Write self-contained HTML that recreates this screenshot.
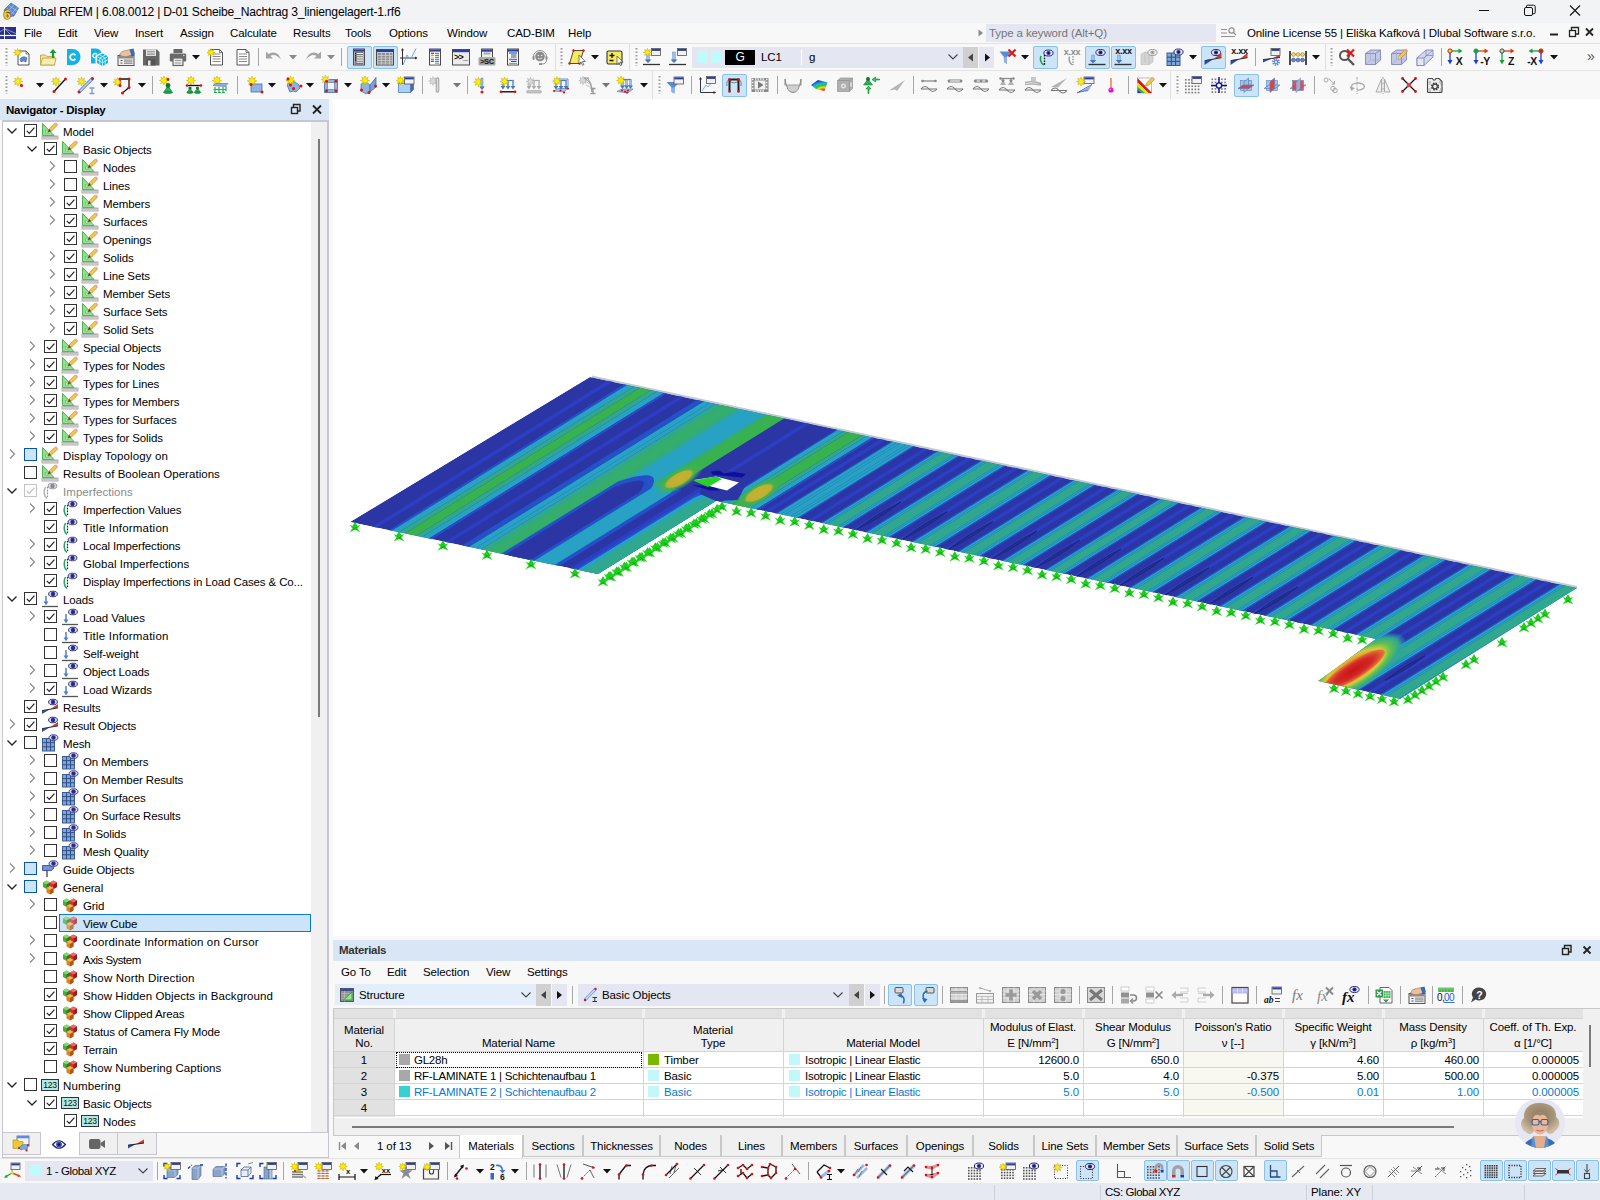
<!DOCTYPE html>
<html><head><meta charset="utf-8"><title>Dlubal RFEM</title><style>
*{box-sizing:content-box}
html,body{margin:0;padding:0}
body{width:1600px;height:1200px;position:relative;overflow:hidden;background:#f8f8f8;font-family:"Liberation Sans",sans-serif;font-size:12px;color:#000}
.a{position:absolute}
.t{position:absolute;white-space:nowrap;line-height:16px;font-size:11.5px;letter-spacing:-.12px}
.sep{position:absolute;width:1px;background:#a0a0a0}
.tog{position:absolute;background:#cce4f7;border:1px solid #88c0ee;border-radius:2px}
.tab{position:absolute;top:1135px;height:21px;border:1px solid #c8c8c8;border-top:none;background:#f0f0f0;text-align:center;line-height:23px;font-size:11.5px;letter-spacing:-.12px}
.hc{position:absolute;text-align:center;white-space:nowrap;font-size:12px;line-height:16px;letter-spacing:-.15px}
.cell{position:absolute;white-space:nowrap;font-size:12px;line-height:16px;height:16px;letter-spacing:-.2px}
sup{font-size:8px;line-height:0;vertical-align:4px}
</style></head><body>
<div class="a" style="left:0px;top:0px;width:1600px;height:23px;background:#f2f3f5;"></div>
<div class="t" style="left:23px;top:4px;font-size:12.1px;letter-spacing:-.2px">Dlubal RFEM | 6.08.0012 | D-01 Scheibe_Nachtrag 3_liniengelagert-1.rf6</div>
<svg class="a" style="left:1470px;top:0" width="130" height="22"><path d="M9 10.500h10" stroke="#111" stroke-width="1"/><rect x="54.5" y="7.500" width="8" height="8" rx="1.5" fill="none" stroke="#111"/><path d="M56.5 7.5v-1.3a1 1 0 0 1 1 -1h6.2a1.5 1.500 0 0 1 1.5 1.5v6a1 1 0 0 1 -1 1h-1.500" fill="none" stroke="#111"/><path d="M100 5.500l10 10M110 5.500l-10 10" stroke="#111" stroke-width="1.1"/></svg>
<div class="a" style="left:0px;top:23px;width:1600px;height:21px;background:#f8f8f8;"></div>
<div class="t" style="left:24px;top:25px;">File</div>
<div class="t" style="left:58px;top:25px;">Edit</div>
<div class="t" style="left:94px;top:25px;">View</div>
<div class="t" style="left:135px;top:25px;">Insert</div>
<div class="t" style="left:180px;top:25px;">Assign</div>
<div class="t" style="left:230px;top:25px;">Calculate</div>
<div class="t" style="left:293px;top:25px;">Results</div>
<div class="t" style="left:345px;top:25px;">Tools</div>
<div class="t" style="left:389px;top:25px;">Options</div>
<div class="t" style="left:447px;top:25px;">Window</div>
<div class="t" style="left:507px;top:25px;">CAD-BIM</div>
<div class="t" style="left:568px;top:25px;">Help</div>
<div class="a" style="left:986px;top:24px;width:230px;height:18px;background:#e4e6f1;"></div>
<svg class="a" style="left:977px;top:28px" width="8" height="10"><path d="M1.500 1.500l4.500 3.500l-4.500 3.500z" fill="#8a8a8a"/></svg>
<div class="t" style="left:989px;top:25px;color:#767676">Type a keyword (Alt+Q)</div>
<div class="t" style="left:1247px;top:25px;">Online License 55 | Eliška Kafková | Dlubal Software s.r.o.</div>
<svg class="a" style="left:1545px;top:24px" width="55" height="18"><path d="M5 10.500h8" stroke="#222" stroke-width="2"/><rect x="24.5" y="6.500" width="6" height="6" fill="none" stroke="#222" stroke-width="1.300"/><path d="M26.500 6v-2.500h7v6.500h-2.500" fill="none" stroke="#222" stroke-width="1.300"/><path d="M41 4.500l7 7M48 4.500l-7 7" stroke="#222" stroke-width="1.800"/></svg>
<div class="a" style="left:0px;top:44px;width:1600px;height:55px;background:#f8f8f8;"></div>
<div class="a" style="left:0px;top:43px;width:1600px;height:1px;background:#e2e2e2;"></div>
<div class="a" style="left:0px;top:70px;width:1600px;height:1px;background:#e4e4e4;"></div>
<div class="a" style="left:692px;top:47px;width:272px;height:21px;background:#e4e6f1;"></div>
<div class="a" style="left:697px;top:51px;width:11px;height:12px;background:#c0fbfb;"></div>
<div class="a" style="left:711px;top:51px;width:11px;height:12px;background:#c0fbfb;"></div>
<div class="a" style="left:801px;top:50px;width:1px;height:15px;background:#fff;"></div>
<div class="a" style="left:725px;top:50px;width:30px;height:15px;background:#000;"></div>
<div class="t" style="left:725px;top:49px;width:30px;text-align:center;color:#fff;font-size:12px">G</div>
<div class="t" style="left:761px;top:49px;">LC1</div>
<div class="t" style="left:809px;top:49px;">g</div>
<svg class="a" style="left:948px;top:54px" width="10" height="6"><path d="M.5 .5 L5 5 L9.5 .5" fill="none" stroke="#444" stroke-width="1.1"/></svg>
<div class="a" style="left:963px;top:47px;width:15px;height:21px;background:#d0d0d0;"></div>
<svg class="a" style="left:963px;top:47px" width="32" height="21"><path d="M10 6.500v8l-5 -4z" fill="#444"/><path d="M22 6.500v8l5 -4z" fill="#111"/></svg>
<div class="a" style="left:979px;top:47px;width:15px;height:21px;background:#e4e6f1;"></div>
<svg class="a" style="left:979px;top:47px" width="16" height="21"><path d="M6 6.500v8l5 -4z" fill="#111"/></svg>
<div class="t" style="left:1587px;top:48px;font-size:14px;color:#555">»</div>
<div class="a" style="left:0px;top:99px;width:329px;height:21px;background:#d9e6f5;"></div>
<div class="t" style="left:6px;top:102px;letter-spacing:-.25px"><b>Navigator - Display</b></div>
<svg class="a" style="left:290px;top:102px" width="36" height="16"><rect x="1.500" y="5.500" width="6" height="6" fill="none" stroke="#222" stroke-width="1.400"/><path d="M3.500 5v-2.500h6.500v6.500h-2.500" fill="none" stroke="#222" stroke-width="1.400"/><path d="M23 3.500l8 8M31 3.500l-8 8" stroke="#222" stroke-width="1.800"/></svg>
<div class="a" style="left:2px;top:121px;width:326px;height:1012px;background:#fff;border:1px solid #c6c6cc;width:325px;height:1010px"></div>
<div class="a" style="left:311px;top:122px;width:16px;height:1010px;background:#f0f0f0;"></div>
<div class="a" style="left:327px;top:120px;width:2px;height:1038px;background:#c6c6d2;"></div>
<div class="a" style="left:2px;top:120px;width:326px;height:2px;background:#c6c6d2;"></div>
<div class="a" style="left:2px;top:120px;width:1px;height:1038px;background:#c6c6d2;"></div>
<div class="a" style="left:318px;top:139px;width:2px;height:578px;background:#7a7a7a;"></div>
<div class="a" style="left:3px;top:122px;width:308px;height:1010px;overflow:hidden"><div class="a" style="left:-3px;top:-122px;width:340px;height:1200px">
<svg style="position:absolute;left:6px;top:125px" width="12" height="12"><path d="M1.5 3.5 L6 8 L10.5 3.5" fill="none" stroke="#222" stroke-width="1.3"/></svg>
<div style="position:absolute;left:24px;top:124px;width:11px;height:11px;border:1px solid #333;background:#fff"></div><svg style="position:absolute;left:24px;top:124px" width="13" height="13"><path d="M2.8 6.8 L5.3 9.3 L10.4 3.6" fill="none" stroke="#222" stroke-width="1.2"/></svg>
<svg style="position:absolute;left:41px;top:122px" width="18" height="18" viewBox="0 0 18 18"><path d="M1.5 13.5 L1.5 1.5 L13 13.5 Z" fill="#8fe08f" stroke="#55b055" stroke-width="1"/><path d="M4.5 11 L4.5 8 L7.5 11Z" fill="#e9f9e9" stroke="#55b055" stroke-width=".6"/><rect x="1" y="14" width="16" height="3" fill="#e6e6e6" stroke="#9a9a9a" stroke-width=".8"/><path d="M3 14v2M5 14v2M7 14v2M9 14v2M11 14v2M13 14v2M15 14v2" stroke="#888" stroke-width=".6"/><path d="M7 10 L8 7 L14 1.2 L16.3 3.4 L10.3 9.2 Z" fill="#f4c64a" stroke="#b48a2a" stroke-width=".6"/><path d="M14 1.2 L15 .3 L17.2 2.4 L16.3 3.4Z" fill="#f0a0b8"/><path d="M7 10 L8 7 L10.3 9.2Z" fill="#444"/></svg>
<div class="t" style="left:63px;top:124px;color:#000">Model</div>
<svg style="position:absolute;left:26px;top:143px" width="12" height="12"><path d="M1.5 3.5 L6 8 L10.5 3.5" fill="none" stroke="#222" stroke-width="1.3"/></svg>
<div style="position:absolute;left:44px;top:142px;width:11px;height:11px;border:1px solid #333;background:#fff"></div><svg style="position:absolute;left:44px;top:142px" width="13" height="13"><path d="M2.8 6.8 L5.3 9.3 L10.4 3.6" fill="none" stroke="#222" stroke-width="1.2"/></svg>
<svg style="position:absolute;left:61px;top:140px" width="18" height="18" viewBox="0 0 18 18"><path d="M1.5 13.5 L1.5 1.5 L13 13.5 Z" fill="#8fe08f" stroke="#55b055" stroke-width="1"/><path d="M4.5 11 L4.5 8 L7.5 11Z" fill="#e9f9e9" stroke="#55b055" stroke-width=".6"/><rect x="1" y="14" width="16" height="3" fill="#e6e6e6" stroke="#9a9a9a" stroke-width=".8"/><path d="M3 14v2M5 14v2M7 14v2M9 14v2M11 14v2M13 14v2M15 14v2" stroke="#888" stroke-width=".6"/><path d="M7 10 L8 7 L14 1.2 L16.3 3.4 L10.3 9.2 Z" fill="#f4c64a" stroke="#b48a2a" stroke-width=".6"/><path d="M14 1.2 L15 .3 L17.2 2.4 L16.3 3.4Z" fill="#f0a0b8"/><path d="M7 10 L8 7 L10.3 9.2Z" fill="#444"/></svg>
<div class="t" style="left:83px;top:142px;color:#000">Basic Objects</div>
<svg style="position:absolute;left:46px;top:160px" width="12" height="12"><path d="M4 1.5 L8.5 6 L4 10.5" fill="none" stroke="#8a8a8a" stroke-width="1.2"/></svg>
<div style="position:absolute;left:64px;top:160px;width:11px;height:11px;border:1px solid #333;background:#fff"></div>
<svg style="position:absolute;left:81px;top:158px" width="18" height="18" viewBox="0 0 18 18"><path d="M1.5 13.5 L1.5 1.5 L13 13.5 Z" fill="#8fe08f" stroke="#55b055" stroke-width="1"/><path d="M4.5 11 L4.5 8 L7.5 11Z" fill="#e9f9e9" stroke="#55b055" stroke-width=".6"/><rect x="1" y="14" width="16" height="3" fill="#e6e6e6" stroke="#9a9a9a" stroke-width=".8"/><path d="M3 14v2M5 14v2M7 14v2M9 14v2M11 14v2M13 14v2M15 14v2" stroke="#888" stroke-width=".6"/><path d="M7 10 L8 7 L14 1.2 L16.3 3.4 L10.3 9.2 Z" fill="#f4c64a" stroke="#b48a2a" stroke-width=".6"/><path d="M14 1.2 L15 .3 L17.2 2.4 L16.3 3.4Z" fill="#f0a0b8"/><path d="M7 10 L8 7 L10.3 9.2Z" fill="#444"/></svg>
<div class="t" style="left:103px;top:160px;color:#000">Nodes</div>
<svg style="position:absolute;left:46px;top:178px" width="12" height="12"><path d="M4 1.5 L8.5 6 L4 10.5" fill="none" stroke="#8a8a8a" stroke-width="1.2"/></svg>
<div style="position:absolute;left:64px;top:178px;width:11px;height:11px;border:1px solid #333;background:#fff"></div>
<svg style="position:absolute;left:81px;top:176px" width="18" height="18" viewBox="0 0 18 18"><path d="M1.5 13.5 L1.5 1.5 L13 13.5 Z" fill="#8fe08f" stroke="#55b055" stroke-width="1"/><path d="M4.5 11 L4.5 8 L7.5 11Z" fill="#e9f9e9" stroke="#55b055" stroke-width=".6"/><rect x="1" y="14" width="16" height="3" fill="#e6e6e6" stroke="#9a9a9a" stroke-width=".8"/><path d="M3 14v2M5 14v2M7 14v2M9 14v2M11 14v2M13 14v2M15 14v2" stroke="#888" stroke-width=".6"/><path d="M7 10 L8 7 L14 1.2 L16.3 3.4 L10.3 9.2 Z" fill="#f4c64a" stroke="#b48a2a" stroke-width=".6"/><path d="M14 1.2 L15 .3 L17.2 2.4 L16.3 3.4Z" fill="#f0a0b8"/><path d="M7 10 L8 7 L10.3 9.2Z" fill="#444"/></svg>
<div class="t" style="left:103px;top:178px;color:#000">Lines</div>
<svg style="position:absolute;left:46px;top:196px" width="12" height="12"><path d="M4 1.5 L8.5 6 L4 10.5" fill="none" stroke="#8a8a8a" stroke-width="1.2"/></svg>
<div style="position:absolute;left:64px;top:196px;width:11px;height:11px;border:1px solid #333;background:#fff"></div><svg style="position:absolute;left:64px;top:196px" width="13" height="13"><path d="M2.8 6.8 L5.3 9.3 L10.4 3.6" fill="none" stroke="#222" stroke-width="1.2"/></svg>
<svg style="position:absolute;left:81px;top:194px" width="18" height="18" viewBox="0 0 18 18"><path d="M1.5 13.5 L1.5 1.5 L13 13.5 Z" fill="#8fe08f" stroke="#55b055" stroke-width="1"/><path d="M4.5 11 L4.5 8 L7.5 11Z" fill="#e9f9e9" stroke="#55b055" stroke-width=".6"/><rect x="1" y="14" width="16" height="3" fill="#e6e6e6" stroke="#9a9a9a" stroke-width=".8"/><path d="M3 14v2M5 14v2M7 14v2M9 14v2M11 14v2M13 14v2M15 14v2" stroke="#888" stroke-width=".6"/><path d="M7 10 L8 7 L14 1.2 L16.3 3.4 L10.3 9.2 Z" fill="#f4c64a" stroke="#b48a2a" stroke-width=".6"/><path d="M14 1.2 L15 .3 L17.2 2.4 L16.3 3.4Z" fill="#f0a0b8"/><path d="M7 10 L8 7 L10.3 9.2Z" fill="#444"/></svg>
<div class="t" style="left:103px;top:196px;color:#000">Members</div>
<svg style="position:absolute;left:46px;top:214px" width="12" height="12"><path d="M4 1.5 L8.5 6 L4 10.5" fill="none" stroke="#8a8a8a" stroke-width="1.2"/></svg>
<div style="position:absolute;left:64px;top:214px;width:11px;height:11px;border:1px solid #333;background:#fff"></div><svg style="position:absolute;left:64px;top:214px" width="13" height="13"><path d="M2.8 6.8 L5.3 9.3 L10.4 3.6" fill="none" stroke="#222" stroke-width="1.2"/></svg>
<svg style="position:absolute;left:81px;top:212px" width="18" height="18" viewBox="0 0 18 18"><path d="M1.5 13.5 L1.5 1.5 L13 13.5 Z" fill="#8fe08f" stroke="#55b055" stroke-width="1"/><path d="M4.5 11 L4.5 8 L7.5 11Z" fill="#e9f9e9" stroke="#55b055" stroke-width=".6"/><rect x="1" y="14" width="16" height="3" fill="#e6e6e6" stroke="#9a9a9a" stroke-width=".8"/><path d="M3 14v2M5 14v2M7 14v2M9 14v2M11 14v2M13 14v2M15 14v2" stroke="#888" stroke-width=".6"/><path d="M7 10 L8 7 L14 1.2 L16.3 3.4 L10.3 9.2 Z" fill="#f4c64a" stroke="#b48a2a" stroke-width=".6"/><path d="M14 1.2 L15 .3 L17.2 2.4 L16.3 3.4Z" fill="#f0a0b8"/><path d="M7 10 L8 7 L10.3 9.2Z" fill="#444"/></svg>
<div class="t" style="left:103px;top:214px;color:#000">Surfaces</div>
<div style="position:absolute;left:64px;top:232px;width:11px;height:11px;border:1px solid #333;background:#fff"></div><svg style="position:absolute;left:64px;top:232px" width="13" height="13"><path d="M2.8 6.8 L5.3 9.3 L10.4 3.6" fill="none" stroke="#222" stroke-width="1.2"/></svg>
<svg style="position:absolute;left:81px;top:230px" width="18" height="18" viewBox="0 0 18 18"><path d="M1.5 13.5 L1.5 1.5 L13 13.5 Z" fill="#8fe08f" stroke="#55b055" stroke-width="1"/><path d="M4.5 11 L4.5 8 L7.5 11Z" fill="#e9f9e9" stroke="#55b055" stroke-width=".6"/><rect x="1" y="14" width="16" height="3" fill="#e6e6e6" stroke="#9a9a9a" stroke-width=".8"/><path d="M3 14v2M5 14v2M7 14v2M9 14v2M11 14v2M13 14v2M15 14v2" stroke="#888" stroke-width=".6"/><path d="M7 10 L8 7 L14 1.2 L16.3 3.4 L10.3 9.2 Z" fill="#f4c64a" stroke="#b48a2a" stroke-width=".6"/><path d="M14 1.2 L15 .3 L17.2 2.4 L16.3 3.4Z" fill="#f0a0b8"/><path d="M7 10 L8 7 L10.3 9.2Z" fill="#444"/></svg>
<div class="t" style="left:103px;top:232px;color:#000">Openings</div>
<svg style="position:absolute;left:46px;top:250px" width="12" height="12"><path d="M4 1.5 L8.5 6 L4 10.5" fill="none" stroke="#8a8a8a" stroke-width="1.2"/></svg>
<div style="position:absolute;left:64px;top:250px;width:11px;height:11px;border:1px solid #333;background:#fff"></div><svg style="position:absolute;left:64px;top:250px" width="13" height="13"><path d="M2.8 6.8 L5.3 9.3 L10.4 3.6" fill="none" stroke="#222" stroke-width="1.2"/></svg>
<svg style="position:absolute;left:81px;top:248px" width="18" height="18" viewBox="0 0 18 18"><path d="M1.5 13.5 L1.5 1.5 L13 13.5 Z" fill="#8fe08f" stroke="#55b055" stroke-width="1"/><path d="M4.5 11 L4.5 8 L7.5 11Z" fill="#e9f9e9" stroke="#55b055" stroke-width=".6"/><rect x="1" y="14" width="16" height="3" fill="#e6e6e6" stroke="#9a9a9a" stroke-width=".8"/><path d="M3 14v2M5 14v2M7 14v2M9 14v2M11 14v2M13 14v2M15 14v2" stroke="#888" stroke-width=".6"/><path d="M7 10 L8 7 L14 1.2 L16.3 3.4 L10.3 9.2 Z" fill="#f4c64a" stroke="#b48a2a" stroke-width=".6"/><path d="M14 1.2 L15 .3 L17.2 2.4 L16.3 3.4Z" fill="#f0a0b8"/><path d="M7 10 L8 7 L10.3 9.2Z" fill="#444"/></svg>
<div class="t" style="left:103px;top:250px;color:#000">Solids</div>
<svg style="position:absolute;left:46px;top:268px" width="12" height="12"><path d="M4 1.5 L8.5 6 L4 10.5" fill="none" stroke="#8a8a8a" stroke-width="1.2"/></svg>
<div style="position:absolute;left:64px;top:268px;width:11px;height:11px;border:1px solid #333;background:#fff"></div><svg style="position:absolute;left:64px;top:268px" width="13" height="13"><path d="M2.8 6.8 L5.3 9.3 L10.4 3.6" fill="none" stroke="#222" stroke-width="1.2"/></svg>
<svg style="position:absolute;left:81px;top:266px" width="18" height="18" viewBox="0 0 18 18"><path d="M1.5 13.5 L1.5 1.5 L13 13.5 Z" fill="#8fe08f" stroke="#55b055" stroke-width="1"/><path d="M4.5 11 L4.5 8 L7.5 11Z" fill="#e9f9e9" stroke="#55b055" stroke-width=".6"/><rect x="1" y="14" width="16" height="3" fill="#e6e6e6" stroke="#9a9a9a" stroke-width=".8"/><path d="M3 14v2M5 14v2M7 14v2M9 14v2M11 14v2M13 14v2M15 14v2" stroke="#888" stroke-width=".6"/><path d="M7 10 L8 7 L14 1.2 L16.3 3.4 L10.3 9.2 Z" fill="#f4c64a" stroke="#b48a2a" stroke-width=".6"/><path d="M14 1.2 L15 .3 L17.2 2.4 L16.3 3.4Z" fill="#f0a0b8"/><path d="M7 10 L8 7 L10.3 9.2Z" fill="#444"/></svg>
<div class="t" style="left:103px;top:268px;color:#000">Line Sets</div>
<svg style="position:absolute;left:46px;top:286px" width="12" height="12"><path d="M4 1.5 L8.5 6 L4 10.5" fill="none" stroke="#8a8a8a" stroke-width="1.2"/></svg>
<div style="position:absolute;left:64px;top:286px;width:11px;height:11px;border:1px solid #333;background:#fff"></div><svg style="position:absolute;left:64px;top:286px" width="13" height="13"><path d="M2.8 6.8 L5.3 9.3 L10.4 3.6" fill="none" stroke="#222" stroke-width="1.2"/></svg>
<svg style="position:absolute;left:81px;top:284px" width="18" height="18" viewBox="0 0 18 18"><path d="M1.5 13.5 L1.5 1.5 L13 13.5 Z" fill="#8fe08f" stroke="#55b055" stroke-width="1"/><path d="M4.5 11 L4.5 8 L7.5 11Z" fill="#e9f9e9" stroke="#55b055" stroke-width=".6"/><rect x="1" y="14" width="16" height="3" fill="#e6e6e6" stroke="#9a9a9a" stroke-width=".8"/><path d="M3 14v2M5 14v2M7 14v2M9 14v2M11 14v2M13 14v2M15 14v2" stroke="#888" stroke-width=".6"/><path d="M7 10 L8 7 L14 1.2 L16.3 3.4 L10.3 9.2 Z" fill="#f4c64a" stroke="#b48a2a" stroke-width=".6"/><path d="M14 1.2 L15 .3 L17.2 2.4 L16.3 3.4Z" fill="#f0a0b8"/><path d="M7 10 L8 7 L10.3 9.2Z" fill="#444"/></svg>
<div class="t" style="left:103px;top:286px;color:#000">Member Sets</div>
<svg style="position:absolute;left:46px;top:304px" width="12" height="12"><path d="M4 1.5 L8.5 6 L4 10.5" fill="none" stroke="#8a8a8a" stroke-width="1.2"/></svg>
<div style="position:absolute;left:64px;top:304px;width:11px;height:11px;border:1px solid #333;background:#fff"></div><svg style="position:absolute;left:64px;top:304px" width="13" height="13"><path d="M2.8 6.8 L5.3 9.3 L10.4 3.6" fill="none" stroke="#222" stroke-width="1.2"/></svg>
<svg style="position:absolute;left:81px;top:302px" width="18" height="18" viewBox="0 0 18 18"><path d="M1.5 13.5 L1.5 1.5 L13 13.5 Z" fill="#8fe08f" stroke="#55b055" stroke-width="1"/><path d="M4.5 11 L4.5 8 L7.5 11Z" fill="#e9f9e9" stroke="#55b055" stroke-width=".6"/><rect x="1" y="14" width="16" height="3" fill="#e6e6e6" stroke="#9a9a9a" stroke-width=".8"/><path d="M3 14v2M5 14v2M7 14v2M9 14v2M11 14v2M13 14v2M15 14v2" stroke="#888" stroke-width=".6"/><path d="M7 10 L8 7 L14 1.2 L16.3 3.4 L10.3 9.2 Z" fill="#f4c64a" stroke="#b48a2a" stroke-width=".6"/><path d="M14 1.2 L15 .3 L17.2 2.4 L16.3 3.4Z" fill="#f0a0b8"/><path d="M7 10 L8 7 L10.3 9.2Z" fill="#444"/></svg>
<div class="t" style="left:103px;top:304px;color:#000">Surface Sets</div>
<svg style="position:absolute;left:46px;top:322px" width="12" height="12"><path d="M4 1.5 L8.5 6 L4 10.5" fill="none" stroke="#8a8a8a" stroke-width="1.2"/></svg>
<div style="position:absolute;left:64px;top:322px;width:11px;height:11px;border:1px solid #333;background:#fff"></div><svg style="position:absolute;left:64px;top:322px" width="13" height="13"><path d="M2.8 6.8 L5.3 9.3 L10.4 3.6" fill="none" stroke="#222" stroke-width="1.2"/></svg>
<svg style="position:absolute;left:81px;top:320px" width="18" height="18" viewBox="0 0 18 18"><path d="M1.5 13.5 L1.5 1.5 L13 13.5 Z" fill="#8fe08f" stroke="#55b055" stroke-width="1"/><path d="M4.5 11 L4.5 8 L7.5 11Z" fill="#e9f9e9" stroke="#55b055" stroke-width=".6"/><rect x="1" y="14" width="16" height="3" fill="#e6e6e6" stroke="#9a9a9a" stroke-width=".8"/><path d="M3 14v2M5 14v2M7 14v2M9 14v2M11 14v2M13 14v2M15 14v2" stroke="#888" stroke-width=".6"/><path d="M7 10 L8 7 L14 1.2 L16.3 3.4 L10.3 9.2 Z" fill="#f4c64a" stroke="#b48a2a" stroke-width=".6"/><path d="M14 1.2 L15 .3 L17.2 2.4 L16.3 3.4Z" fill="#f0a0b8"/><path d="M7 10 L8 7 L10.3 9.2Z" fill="#444"/></svg>
<div class="t" style="left:103px;top:322px;color:#000">Solid Sets</div>
<svg style="position:absolute;left:26px;top:340px" width="12" height="12"><path d="M4 1.5 L8.5 6 L4 10.5" fill="none" stroke="#8a8a8a" stroke-width="1.2"/></svg>
<div style="position:absolute;left:44px;top:340px;width:11px;height:11px;border:1px solid #333;background:#fff"></div><svg style="position:absolute;left:44px;top:340px" width="13" height="13"><path d="M2.8 6.8 L5.3 9.3 L10.4 3.6" fill="none" stroke="#222" stroke-width="1.2"/></svg>
<svg style="position:absolute;left:61px;top:338px" width="18" height="18" viewBox="0 0 18 18"><path d="M1.5 13.5 L1.5 1.5 L13 13.5 Z" fill="#8fe08f" stroke="#55b055" stroke-width="1"/><path d="M4.5 11 L4.5 8 L7.5 11Z" fill="#e9f9e9" stroke="#55b055" stroke-width=".6"/><rect x="1" y="14" width="16" height="3" fill="#e6e6e6" stroke="#9a9a9a" stroke-width=".8"/><path d="M3 14v2M5 14v2M7 14v2M9 14v2M11 14v2M13 14v2M15 14v2" stroke="#888" stroke-width=".6"/><path d="M7 10 L8 7 L14 1.2 L16.3 3.4 L10.3 9.2 Z" fill="#f4c64a" stroke="#b48a2a" stroke-width=".6"/><path d="M14 1.2 L15 .3 L17.2 2.4 L16.3 3.4Z" fill="#f0a0b8"/><path d="M7 10 L8 7 L10.3 9.2Z" fill="#444"/></svg>
<div class="t" style="left:83px;top:340px;color:#000">Special Objects</div>
<svg style="position:absolute;left:26px;top:358px" width="12" height="12"><path d="M4 1.5 L8.5 6 L4 10.5" fill="none" stroke="#8a8a8a" stroke-width="1.2"/></svg>
<div style="position:absolute;left:44px;top:358px;width:11px;height:11px;border:1px solid #333;background:#fff"></div><svg style="position:absolute;left:44px;top:358px" width="13" height="13"><path d="M2.8 6.8 L5.3 9.3 L10.4 3.6" fill="none" stroke="#222" stroke-width="1.2"/></svg>
<svg style="position:absolute;left:61px;top:356px" width="18" height="18" viewBox="0 0 18 18"><path d="M1.5 13.5 L1.5 1.5 L13 13.5 Z" fill="#8fe08f" stroke="#55b055" stroke-width="1"/><path d="M4.5 11 L4.5 8 L7.5 11Z" fill="#e9f9e9" stroke="#55b055" stroke-width=".6"/><rect x="1" y="14" width="16" height="3" fill="#e6e6e6" stroke="#9a9a9a" stroke-width=".8"/><path d="M3 14v2M5 14v2M7 14v2M9 14v2M11 14v2M13 14v2M15 14v2" stroke="#888" stroke-width=".6"/><path d="M7 10 L8 7 L14 1.2 L16.3 3.4 L10.3 9.2 Z" fill="#f4c64a" stroke="#b48a2a" stroke-width=".6"/><path d="M14 1.2 L15 .3 L17.2 2.4 L16.3 3.4Z" fill="#f0a0b8"/><path d="M7 10 L8 7 L10.3 9.2Z" fill="#444"/></svg>
<div class="t" style="left:83px;top:358px;color:#000">Types for Nodes</div>
<svg style="position:absolute;left:26px;top:376px" width="12" height="12"><path d="M4 1.5 L8.5 6 L4 10.5" fill="none" stroke="#8a8a8a" stroke-width="1.2"/></svg>
<div style="position:absolute;left:44px;top:376px;width:11px;height:11px;border:1px solid #333;background:#fff"></div><svg style="position:absolute;left:44px;top:376px" width="13" height="13"><path d="M2.8 6.8 L5.3 9.3 L10.4 3.6" fill="none" stroke="#222" stroke-width="1.2"/></svg>
<svg style="position:absolute;left:61px;top:374px" width="18" height="18" viewBox="0 0 18 18"><path d="M1.5 13.5 L1.5 1.5 L13 13.5 Z" fill="#8fe08f" stroke="#55b055" stroke-width="1"/><path d="M4.5 11 L4.5 8 L7.5 11Z" fill="#e9f9e9" stroke="#55b055" stroke-width=".6"/><rect x="1" y="14" width="16" height="3" fill="#e6e6e6" stroke="#9a9a9a" stroke-width=".8"/><path d="M3 14v2M5 14v2M7 14v2M9 14v2M11 14v2M13 14v2M15 14v2" stroke="#888" stroke-width=".6"/><path d="M7 10 L8 7 L14 1.2 L16.3 3.4 L10.3 9.2 Z" fill="#f4c64a" stroke="#b48a2a" stroke-width=".6"/><path d="M14 1.2 L15 .3 L17.2 2.4 L16.3 3.4Z" fill="#f0a0b8"/><path d="M7 10 L8 7 L10.3 9.2Z" fill="#444"/></svg>
<div class="t" style="left:83px;top:376px;color:#000">Types for Lines</div>
<svg style="position:absolute;left:26px;top:394px" width="12" height="12"><path d="M4 1.5 L8.5 6 L4 10.5" fill="none" stroke="#8a8a8a" stroke-width="1.2"/></svg>
<div style="position:absolute;left:44px;top:394px;width:11px;height:11px;border:1px solid #333;background:#fff"></div><svg style="position:absolute;left:44px;top:394px" width="13" height="13"><path d="M2.8 6.8 L5.3 9.3 L10.4 3.6" fill="none" stroke="#222" stroke-width="1.2"/></svg>
<svg style="position:absolute;left:61px;top:392px" width="18" height="18" viewBox="0 0 18 18"><path d="M1.5 13.5 L1.5 1.5 L13 13.5 Z" fill="#8fe08f" stroke="#55b055" stroke-width="1"/><path d="M4.5 11 L4.5 8 L7.5 11Z" fill="#e9f9e9" stroke="#55b055" stroke-width=".6"/><rect x="1" y="14" width="16" height="3" fill="#e6e6e6" stroke="#9a9a9a" stroke-width=".8"/><path d="M3 14v2M5 14v2M7 14v2M9 14v2M11 14v2M13 14v2M15 14v2" stroke="#888" stroke-width=".6"/><path d="M7 10 L8 7 L14 1.2 L16.3 3.4 L10.3 9.2 Z" fill="#f4c64a" stroke="#b48a2a" stroke-width=".6"/><path d="M14 1.2 L15 .3 L17.2 2.4 L16.3 3.4Z" fill="#f0a0b8"/><path d="M7 10 L8 7 L10.3 9.2Z" fill="#444"/></svg>
<div class="t" style="left:83px;top:394px;color:#000">Types for Members</div>
<svg style="position:absolute;left:26px;top:412px" width="12" height="12"><path d="M4 1.5 L8.5 6 L4 10.5" fill="none" stroke="#8a8a8a" stroke-width="1.2"/></svg>
<div style="position:absolute;left:44px;top:412px;width:11px;height:11px;border:1px solid #333;background:#fff"></div><svg style="position:absolute;left:44px;top:412px" width="13" height="13"><path d="M2.8 6.8 L5.3 9.3 L10.4 3.6" fill="none" stroke="#222" stroke-width="1.2"/></svg>
<svg style="position:absolute;left:61px;top:410px" width="18" height="18" viewBox="0 0 18 18"><path d="M1.5 13.5 L1.5 1.5 L13 13.5 Z" fill="#8fe08f" stroke="#55b055" stroke-width="1"/><path d="M4.5 11 L4.5 8 L7.5 11Z" fill="#e9f9e9" stroke="#55b055" stroke-width=".6"/><rect x="1" y="14" width="16" height="3" fill="#e6e6e6" stroke="#9a9a9a" stroke-width=".8"/><path d="M3 14v2M5 14v2M7 14v2M9 14v2M11 14v2M13 14v2M15 14v2" stroke="#888" stroke-width=".6"/><path d="M7 10 L8 7 L14 1.2 L16.3 3.4 L10.3 9.2 Z" fill="#f4c64a" stroke="#b48a2a" stroke-width=".6"/><path d="M14 1.2 L15 .3 L17.2 2.4 L16.3 3.4Z" fill="#f0a0b8"/><path d="M7 10 L8 7 L10.3 9.2Z" fill="#444"/></svg>
<div class="t" style="left:83px;top:412px;color:#000">Types for Surfaces</div>
<svg style="position:absolute;left:26px;top:430px" width="12" height="12"><path d="M4 1.5 L8.5 6 L4 10.5" fill="none" stroke="#8a8a8a" stroke-width="1.2"/></svg>
<div style="position:absolute;left:44px;top:430px;width:11px;height:11px;border:1px solid #333;background:#fff"></div><svg style="position:absolute;left:44px;top:430px" width="13" height="13"><path d="M2.8 6.8 L5.3 9.3 L10.4 3.6" fill="none" stroke="#222" stroke-width="1.2"/></svg>
<svg style="position:absolute;left:61px;top:428px" width="18" height="18" viewBox="0 0 18 18"><path d="M1.5 13.5 L1.5 1.5 L13 13.5 Z" fill="#8fe08f" stroke="#55b055" stroke-width="1"/><path d="M4.5 11 L4.5 8 L7.5 11Z" fill="#e9f9e9" stroke="#55b055" stroke-width=".6"/><rect x="1" y="14" width="16" height="3" fill="#e6e6e6" stroke="#9a9a9a" stroke-width=".8"/><path d="M3 14v2M5 14v2M7 14v2M9 14v2M11 14v2M13 14v2M15 14v2" stroke="#888" stroke-width=".6"/><path d="M7 10 L8 7 L14 1.2 L16.3 3.4 L10.3 9.2 Z" fill="#f4c64a" stroke="#b48a2a" stroke-width=".6"/><path d="M14 1.2 L15 .3 L17.2 2.4 L16.3 3.4Z" fill="#f0a0b8"/><path d="M7 10 L8 7 L10.3 9.2Z" fill="#444"/></svg>
<div class="t" style="left:83px;top:430px;color:#000">Types for Solids</div>
<svg style="position:absolute;left:6px;top:448px" width="12" height="12"><path d="M4 1.5 L8.5 6 L4 10.5" fill="none" stroke="#8a8a8a" stroke-width="1.2"/></svg>
<div style="position:absolute;left:24px;top:448px;width:11px;height:11px;border:1px solid #0a57a5;background:#cce4f7"></div>
<svg style="position:absolute;left:41px;top:446px" width="18" height="18" viewBox="0 0 18 18"><path d="M1.5 13.5 L1.5 1.5 L13 13.5 Z" fill="#8fe08f" stroke="#55b055" stroke-width="1"/><path d="M4.5 11 L4.5 8 L7.5 11Z" fill="#e9f9e9" stroke="#55b055" stroke-width=".6"/><rect x="1" y="14" width="16" height="3" fill="#e6e6e6" stroke="#9a9a9a" stroke-width=".8"/><path d="M3 14v2M5 14v2M7 14v2M9 14v2M11 14v2M13 14v2M15 14v2" stroke="#888" stroke-width=".6"/><path d="M7 10 L8 7 L14 1.2 L16.3 3.4 L10.3 9.2 Z" fill="#f4c64a" stroke="#b48a2a" stroke-width=".6"/><path d="M14 1.2 L15 .3 L17.2 2.4 L16.3 3.4Z" fill="#f0a0b8"/><path d="M7 10 L8 7 L10.3 9.2Z" fill="#444"/></svg>
<div class="t" style="left:63px;top:448px;color:#000;letter-spacing:0.12px">Display Topology on</div>
<div style="position:absolute;left:24px;top:466px;width:11px;height:11px;border:1px solid #333;background:#fff"></div>
<svg style="position:absolute;left:41px;top:464px" width="18" height="18" viewBox="0 0 18 18"><path d="M1.5 13.5 L1.5 1.5 L13 13.5 Z" fill="#8fe08f" stroke="#55b055" stroke-width="1"/><path d="M4.5 11 L4.5 8 L7.5 11Z" fill="#e9f9e9" stroke="#55b055" stroke-width=".6"/><rect x="1" y="14" width="16" height="3" fill="#e6e6e6" stroke="#9a9a9a" stroke-width=".8"/><path d="M3 14v2M5 14v2M7 14v2M9 14v2M11 14v2M13 14v2M15 14v2" stroke="#888" stroke-width=".6"/><path d="M7 10 L8 7 L14 1.2 L16.3 3.4 L10.3 9.2 Z" fill="#f4c64a" stroke="#b48a2a" stroke-width=".6"/><path d="M14 1.2 L15 .3 L17.2 2.4 L16.3 3.4Z" fill="#f0a0b8"/><path d="M7 10 L8 7 L10.3 9.2Z" fill="#444"/></svg>
<div class="t" style="left:63px;top:466px;color:#000;letter-spacing:0.03px">Results of Boolean Operations</div>
<svg style="position:absolute;left:6px;top:485px" width="12" height="12"><path d="M1.5 3.5 L6 8 L10.5 3.5" fill="none" stroke="#222" stroke-width="1.3"/></svg>
<div style="position:absolute;left:24px;top:484px;width:11px;height:11px;border:1px solid #c4c4c4;background:#fff"></div><svg style="position:absolute;left:24px;top:484px" width="13" height="13"><path d="M2.8 6.8 L5.3 9.3 L10.4 3.6" fill="none" stroke="#c0c0c0" stroke-width="1.2"/></svg>
<svg style="position:absolute;left:41px;top:482px" width="18" height="18" viewBox="0 0 18 18"><path d="M6.5 5 v11" stroke="#8a8a8a" stroke-width="1.2" stroke-dasharray="1.6 1.2"/><path d="M6 16.5 C3 14 2.2 9 4.5 5" fill="none" stroke="#b0b0b0" stroke-width="1.5"/><ellipse cx="11.5" cy="4" rx="4.4" ry="2.8" fill="#d4d7ee" stroke="#9a9a9a" stroke-width="1"/><circle cx="11.5" cy="4" r="2.2" fill="#8a8a8a"/></svg>
<div class="t" style="left:63px;top:484px;color:#8a8a8a;letter-spacing:0.06px">Imperfections</div>
<svg style="position:absolute;left:26px;top:502px" width="12" height="12"><path d="M4 1.5 L8.5 6 L4 10.5" fill="none" stroke="#8a8a8a" stroke-width="1.2"/></svg>
<div style="position:absolute;left:44px;top:502px;width:11px;height:11px;border:1px solid #333;background:#fff"></div><svg style="position:absolute;left:44px;top:502px" width="13" height="13"><path d="M2.8 6.8 L5.3 9.3 L10.4 3.6" fill="none" stroke="#222" stroke-width="1.2"/></svg>
<svg style="position:absolute;left:61px;top:500px" width="18" height="18" viewBox="0 0 18 18"><path d="M6.5 5 v11" stroke="#222" stroke-width="1.2" stroke-dasharray="1.6 1.2"/><path d="M6 16.5 C3 14 2.2 9 4.5 5" fill="none" stroke="#2aa06a" stroke-width="1.5"/><ellipse cx="11.5" cy="4" rx="4.4" ry="2.8" fill="#d4d7ee" stroke="#3b3b7a" stroke-width="1"/><circle cx="11.5" cy="4" r="2.2" fill="#2a2a8a"/></svg>
<div class="t" style="left:83px;top:502px;color:#000">Imperfection Values</div>
<div style="position:absolute;left:44px;top:520px;width:11px;height:11px;border:1px solid #333;background:#fff"></div><svg style="position:absolute;left:44px;top:520px" width="13" height="13"><path d="M2.8 6.8 L5.3 9.3 L10.4 3.6" fill="none" stroke="#222" stroke-width="1.2"/></svg>
<svg style="position:absolute;left:61px;top:518px" width="18" height="18" viewBox="0 0 18 18"><path d="M6.5 5 v11" stroke="#222" stroke-width="1.2" stroke-dasharray="1.6 1.2"/><path d="M6 16.5 C3 14 2.2 9 4.5 5" fill="none" stroke="#2aa06a" stroke-width="1.5"/><ellipse cx="11.5" cy="4" rx="4.4" ry="2.8" fill="#d4d7ee" stroke="#3b3b7a" stroke-width="1"/><circle cx="11.5" cy="4" r="2.2" fill="#2a2a8a"/></svg>
<div class="t" style="left:83px;top:520px;color:#000;letter-spacing:0.21px">Title Information</div>
<svg style="position:absolute;left:26px;top:538px" width="12" height="12"><path d="M4 1.5 L8.5 6 L4 10.5" fill="none" stroke="#8a8a8a" stroke-width="1.2"/></svg>
<div style="position:absolute;left:44px;top:538px;width:11px;height:11px;border:1px solid #333;background:#fff"></div><svg style="position:absolute;left:44px;top:538px" width="13" height="13"><path d="M2.8 6.8 L5.3 9.3 L10.4 3.6" fill="none" stroke="#222" stroke-width="1.2"/></svg>
<svg style="position:absolute;left:61px;top:536px" width="18" height="18" viewBox="0 0 18 18"><path d="M6.5 5 v11" stroke="#222" stroke-width="1.2" stroke-dasharray="1.6 1.2"/><path d="M6 16.5 C3 14 2.2 9 4.5 5" fill="none" stroke="#2aa06a" stroke-width="1.5"/><ellipse cx="11.5" cy="4" rx="4.4" ry="2.8" fill="#d4d7ee" stroke="#3b3b7a" stroke-width="1"/><circle cx="11.5" cy="4" r="2.2" fill="#2a2a8a"/></svg>
<div class="t" style="left:83px;top:538px;color:#000">Local Imperfections</div>
<svg style="position:absolute;left:26px;top:556px" width="12" height="12"><path d="M4 1.5 L8.5 6 L4 10.5" fill="none" stroke="#8a8a8a" stroke-width="1.2"/></svg>
<div style="position:absolute;left:44px;top:556px;width:11px;height:11px;border:1px solid #333;background:#fff"></div><svg style="position:absolute;left:44px;top:556px" width="13" height="13"><path d="M2.8 6.8 L5.3 9.3 L10.4 3.6" fill="none" stroke="#222" stroke-width="1.2"/></svg>
<svg style="position:absolute;left:61px;top:554px" width="18" height="18" viewBox="0 0 18 18"><path d="M6.5 5 v11" stroke="#222" stroke-width="1.2" stroke-dasharray="1.6 1.2"/><path d="M6 16.5 C3 14 2.2 9 4.5 5" fill="none" stroke="#2aa06a" stroke-width="1.5"/><ellipse cx="11.5" cy="4" rx="4.4" ry="2.8" fill="#d4d7ee" stroke="#3b3b7a" stroke-width="1"/><circle cx="11.5" cy="4" r="2.2" fill="#2a2a8a"/></svg>
<div class="t" style="left:83px;top:556px;color:#000;letter-spacing:0.04px">Global Imperfections</div>
<div style="position:absolute;left:44px;top:574px;width:11px;height:11px;border:1px solid #333;background:#fff"></div><svg style="position:absolute;left:44px;top:574px" width="13" height="13"><path d="M2.8 6.8 L5.3 9.3 L10.4 3.6" fill="none" stroke="#222" stroke-width="1.2"/></svg>
<svg style="position:absolute;left:61px;top:572px" width="18" height="18" viewBox="0 0 18 18"><path d="M6.5 5 v11" stroke="#222" stroke-width="1.2" stroke-dasharray="1.6 1.2"/><path d="M6 16.5 C3 14 2.2 9 4.5 5" fill="none" stroke="#2aa06a" stroke-width="1.5"/><ellipse cx="11.5" cy="4" rx="4.4" ry="2.8" fill="#d4d7ee" stroke="#3b3b7a" stroke-width="1"/><circle cx="11.5" cy="4" r="2.2" fill="#2a2a8a"/></svg>
<div class="t" style="left:83px;top:574px;color:#000">Display Imperfections in Load Cases &amp; Co...</div>
<svg style="position:absolute;left:6px;top:593px" width="12" height="12"><path d="M1.5 3.5 L6 8 L10.5 3.5" fill="none" stroke="#222" stroke-width="1.3"/></svg>
<div style="position:absolute;left:24px;top:592px;width:11px;height:11px;border:1px solid #333;background:#fff"></div><svg style="position:absolute;left:24px;top:592px" width="13" height="13"><path d="M2.8 6.8 L5.3 9.3 L10.4 3.6" fill="none" stroke="#222" stroke-width="1.2"/></svg>
<svg style="position:absolute;left:41px;top:590px" width="18" height="18" viewBox="0 0 18 18"><path d="M1 16.5h16" stroke="#555" stroke-width="1.3"/><path d="M5 6v8" stroke="#4f7fc0" stroke-width="1.5"/><path d="M2.5 11.5 L5 15.2 L7.5 11.5Z" fill="#4f7fc0"/><ellipse cx="12" cy="4" rx="4.4" ry="2.8" fill="#d4d7ee" stroke="#3b3b7a" stroke-width="1"/><circle cx="12" cy="4" r="2.2" fill="#2a2a8a"/></svg>
<div class="t" style="left:63px;top:592px;color:#000">Loads</div>
<svg style="position:absolute;left:26px;top:610px" width="12" height="12"><path d="M4 1.5 L8.5 6 L4 10.5" fill="none" stroke="#8a8a8a" stroke-width="1.2"/></svg>
<div style="position:absolute;left:44px;top:610px;width:11px;height:11px;border:1px solid #333;background:#fff"></div><svg style="position:absolute;left:44px;top:610px" width="13" height="13"><path d="M2.8 6.8 L5.3 9.3 L10.4 3.6" fill="none" stroke="#222" stroke-width="1.2"/></svg>
<svg style="position:absolute;left:61px;top:608px" width="18" height="18" viewBox="0 0 18 18"><path d="M1 16.5h16" stroke="#555" stroke-width="1.3"/><path d="M5 6v8" stroke="#4f7fc0" stroke-width="1.5"/><path d="M2.5 11.5 L5 15.2 L7.5 11.5Z" fill="#4f7fc0"/><ellipse cx="12" cy="4" rx="4.4" ry="2.8" fill="#d4d7ee" stroke="#3b3b7a" stroke-width="1"/><circle cx="12" cy="4" r="2.2" fill="#2a2a8a"/></svg>
<div class="t" style="left:83px;top:610px;color:#000">Load Values</div>
<div style="position:absolute;left:44px;top:628px;width:11px;height:11px;border:1px solid #333;background:#fff"></div>
<svg style="position:absolute;left:61px;top:626px" width="18" height="18" viewBox="0 0 18 18"><path d="M1 16.5h16" stroke="#555" stroke-width="1.3"/><path d="M5 6v8" stroke="#4f7fc0" stroke-width="1.5"/><path d="M2.5 11.5 L5 15.2 L7.5 11.5Z" fill="#4f7fc0"/><ellipse cx="12" cy="4" rx="4.4" ry="2.8" fill="#d4d7ee" stroke="#3b3b7a" stroke-width="1"/><circle cx="12" cy="4" r="2.2" fill="#2a2a8a"/></svg>
<div class="t" style="left:83px;top:628px;color:#000;letter-spacing:0.21px">Title Information</div>
<div style="position:absolute;left:44px;top:646px;width:11px;height:11px;border:1px solid #333;background:#fff"></div>
<svg style="position:absolute;left:61px;top:644px" width="18" height="18" viewBox="0 0 18 18"><path d="M1 16.5h16" stroke="#555" stroke-width="1.3"/><path d="M5 6v8" stroke="#4f7fc0" stroke-width="1.5"/><path d="M2.5 11.5 L5 15.2 L7.5 11.5Z" fill="#4f7fc0"/><ellipse cx="12" cy="4" rx="4.4" ry="2.8" fill="#d4d7ee" stroke="#3b3b7a" stroke-width="1"/><circle cx="12" cy="4" r="2.2" fill="#2a2a8a"/></svg>
<div class="t" style="left:83px;top:646px;color:#000">Self-weight</div>
<svg style="position:absolute;left:26px;top:664px" width="12" height="12"><path d="M4 1.5 L8.5 6 L4 10.5" fill="none" stroke="#8a8a8a" stroke-width="1.2"/></svg>
<div style="position:absolute;left:44px;top:664px;width:11px;height:11px;border:1px solid #333;background:#fff"></div>
<svg style="position:absolute;left:61px;top:662px" width="18" height="18" viewBox="0 0 18 18"><path d="M1 16.5h16" stroke="#555" stroke-width="1.3"/><path d="M5 6v8" stroke="#4f7fc0" stroke-width="1.5"/><path d="M2.5 11.5 L5 15.2 L7.5 11.5Z" fill="#4f7fc0"/><ellipse cx="12" cy="4" rx="4.4" ry="2.8" fill="#d4d7ee" stroke="#3b3b7a" stroke-width="1"/><circle cx="12" cy="4" r="2.2" fill="#2a2a8a"/></svg>
<div class="t" style="left:83px;top:664px;color:#000">Object Loads</div>
<svg style="position:absolute;left:26px;top:682px" width="12" height="12"><path d="M4 1.5 L8.5 6 L4 10.5" fill="none" stroke="#8a8a8a" stroke-width="1.2"/></svg>
<div style="position:absolute;left:44px;top:682px;width:11px;height:11px;border:1px solid #333;background:#fff"></div><svg style="position:absolute;left:44px;top:682px" width="13" height="13"><path d="M2.8 6.8 L5.3 9.3 L10.4 3.6" fill="none" stroke="#222" stroke-width="1.2"/></svg>
<svg style="position:absolute;left:61px;top:680px" width="18" height="18" viewBox="0 0 18 18"><path d="M1 16.5h16" stroke="#555" stroke-width="1.3"/><path d="M5 6v8" stroke="#4f7fc0" stroke-width="1.5"/><path d="M2.5 11.5 L5 15.2 L7.5 11.5Z" fill="#4f7fc0"/><ellipse cx="12" cy="4" rx="4.4" ry="2.8" fill="#d4d7ee" stroke="#3b3b7a" stroke-width="1"/><circle cx="12" cy="4" r="2.2" fill="#2a2a8a"/></svg>
<div class="t" style="left:83px;top:682px;color:#000">Load Wizards</div>
<div style="position:absolute;left:24px;top:700px;width:11px;height:11px;border:1px solid #333;background:#fff"></div><svg style="position:absolute;left:24px;top:700px" width="13" height="13"><path d="M2.8 6.8 L5.3 9.3 L10.4 3.6" fill="none" stroke="#222" stroke-width="1.2"/></svg>
<svg style="position:absolute;left:41px;top:698px" width="18" height="18" viewBox="0 0 18 18"><path d="M1 16 L1 12.5 L9 11.200Z" fill="#2a4fb0"/><path d="M9 11.200 L17 9.800 L17 6 Z" fill="#d83a2a"/><path d="M1 12.6 L17 9.9" stroke="#333" stroke-width="1"/><ellipse cx="12" cy="4" rx="4.4" ry="2.8" fill="#d4d7ee" stroke="#3b3b7a" stroke-width="1"/><circle cx="12" cy="4" r="2.2" fill="#2a2a8a"/></svg>
<div class="t" style="left:63px;top:700px;color:#000">Results</div>
<svg style="position:absolute;left:6px;top:718px" width="12" height="12"><path d="M4 1.5 L8.5 6 L4 10.5" fill="none" stroke="#8a8a8a" stroke-width="1.2"/></svg>
<div style="position:absolute;left:24px;top:718px;width:11px;height:11px;border:1px solid #333;background:#fff"></div><svg style="position:absolute;left:24px;top:718px" width="13" height="13"><path d="M2.8 6.8 L5.3 9.3 L10.4 3.6" fill="none" stroke="#222" stroke-width="1.2"/></svg>
<svg style="position:absolute;left:41px;top:716px" width="18" height="18" viewBox="0 0 18 18"><path d="M1 16 L1 12.5 L9 11.200Z" fill="#2a4fb0"/><path d="M9 11.200 L17 9.800 L17 6 Z" fill="#d83a2a"/><path d="M1 12.6 L17 9.9" stroke="#333" stroke-width="1"/><ellipse cx="12" cy="4" rx="4.4" ry="2.8" fill="#d4d7ee" stroke="#3b3b7a" stroke-width="1"/><circle cx="12" cy="4" r="2.2" fill="#2a2a8a"/></svg>
<div class="t" style="left:63px;top:718px;color:#000">Result Objects</div>
<svg style="position:absolute;left:6px;top:737px" width="12" height="12"><path d="M1.5 3.5 L6 8 L10.5 3.5" fill="none" stroke="#222" stroke-width="1.3"/></svg>
<div style="position:absolute;left:24px;top:736px;width:11px;height:11px;border:1px solid #333;background:#fff"></div>
<svg style="position:absolute;left:41px;top:734px" width="18" height="18" viewBox="0 0 18 18"><rect x="1.5" y="4.5" width="12" height="12.5" fill="#7fa6d6" stroke="#3a5f96" stroke-width="1"/><path d="M5.5 4.5v12.5M9.5 4.5v12.5M1.5 8.6h12M1.5 12.8h12" stroke="#2f4f86" stroke-width="1"/><ellipse cx="12.5" cy="3.6" rx="4.4" ry="2.8" fill="#d4d7ee" stroke="#3b3b7a" stroke-width="1"/><circle cx="12.5" cy="3.6" r="2.2" fill="#2a2a8a"/></svg>
<div class="t" style="left:63px;top:736px;color:#000">Mesh</div>
<svg style="position:absolute;left:26px;top:754px" width="12" height="12"><path d="M4 1.5 L8.5 6 L4 10.5" fill="none" stroke="#8a8a8a" stroke-width="1.2"/></svg>
<div style="position:absolute;left:44px;top:754px;width:11px;height:11px;border:1px solid #333;background:#fff"></div>
<svg style="position:absolute;left:61px;top:752px" width="18" height="18" viewBox="0 0 18 18"><rect x="1.5" y="4.5" width="12" height="12.5" fill="#7fa6d6" stroke="#3a5f96" stroke-width="1"/><path d="M5.5 4.5v12.5M9.5 4.5v12.5M1.5 8.6h12M1.5 12.8h12" stroke="#2f4f86" stroke-width="1"/><ellipse cx="12.5" cy="3.6" rx="4.4" ry="2.8" fill="#d4d7ee" stroke="#3b3b7a" stroke-width="1"/><circle cx="12.5" cy="3.6" r="2.2" fill="#2a2a8a"/></svg>
<div class="t" style="left:83px;top:754px;color:#000">On Members</div>
<svg style="position:absolute;left:26px;top:772px" width="12" height="12"><path d="M4 1.5 L8.5 6 L4 10.5" fill="none" stroke="#8a8a8a" stroke-width="1.2"/></svg>
<div style="position:absolute;left:44px;top:772px;width:11px;height:11px;border:1px solid #333;background:#fff"></div>
<svg style="position:absolute;left:61px;top:770px" width="18" height="18" viewBox="0 0 18 18"><rect x="1.5" y="4.5" width="12" height="12.5" fill="#7fa6d6" stroke="#3a5f96" stroke-width="1"/><path d="M5.5 4.5v12.5M9.5 4.5v12.5M1.5 8.6h12M1.5 12.8h12" stroke="#2f4f86" stroke-width="1"/><ellipse cx="12.5" cy="3.6" rx="4.4" ry="2.8" fill="#d4d7ee" stroke="#3b3b7a" stroke-width="1"/><circle cx="12.5" cy="3.6" r="2.2" fill="#2a2a8a"/></svg>
<div class="t" style="left:83px;top:772px;color:#000">On Member Results</div>
<svg style="position:absolute;left:26px;top:790px" width="12" height="12"><path d="M4 1.5 L8.5 6 L4 10.5" fill="none" stroke="#8a8a8a" stroke-width="1.2"/></svg>
<div style="position:absolute;left:44px;top:790px;width:11px;height:11px;border:1px solid #333;background:#fff"></div><svg style="position:absolute;left:44px;top:790px" width="13" height="13"><path d="M2.8 6.8 L5.3 9.3 L10.4 3.6" fill="none" stroke="#222" stroke-width="1.2"/></svg>
<svg style="position:absolute;left:61px;top:788px" width="18" height="18" viewBox="0 0 18 18"><rect x="1.5" y="4.5" width="12" height="12.5" fill="#7fa6d6" stroke="#3a5f96" stroke-width="1"/><path d="M5.5 4.5v12.5M9.5 4.5v12.5M1.5 8.6h12M1.5 12.8h12" stroke="#2f4f86" stroke-width="1"/><ellipse cx="12.5" cy="3.6" rx="4.4" ry="2.8" fill="#d4d7ee" stroke="#3b3b7a" stroke-width="1"/><circle cx="12.5" cy="3.6" r="2.2" fill="#2a2a8a"/></svg>
<div class="t" style="left:83px;top:790px;color:#000">On Surfaces</div>
<svg style="position:absolute;left:26px;top:808px" width="12" height="12"><path d="M4 1.5 L8.5 6 L4 10.5" fill="none" stroke="#8a8a8a" stroke-width="1.2"/></svg>
<div style="position:absolute;left:44px;top:808px;width:11px;height:11px;border:1px solid #333;background:#fff"></div>
<svg style="position:absolute;left:61px;top:806px" width="18" height="18" viewBox="0 0 18 18"><rect x="1.5" y="4.5" width="12" height="12.5" fill="#7fa6d6" stroke="#3a5f96" stroke-width="1"/><path d="M5.5 4.5v12.5M9.5 4.5v12.5M1.5 8.6h12M1.5 12.8h12" stroke="#2f4f86" stroke-width="1"/><ellipse cx="12.5" cy="3.6" rx="4.4" ry="2.8" fill="#d4d7ee" stroke="#3b3b7a" stroke-width="1"/><circle cx="12.5" cy="3.6" r="2.2" fill="#2a2a8a"/></svg>
<div class="t" style="left:83px;top:808px;color:#000">On Surface Results</div>
<svg style="position:absolute;left:26px;top:826px" width="12" height="12"><path d="M4 1.5 L8.5 6 L4 10.5" fill="none" stroke="#8a8a8a" stroke-width="1.2"/></svg>
<div style="position:absolute;left:44px;top:826px;width:11px;height:11px;border:1px solid #333;background:#fff"></div>
<svg style="position:absolute;left:61px;top:824px" width="18" height="18" viewBox="0 0 18 18"><rect x="1.5" y="4.5" width="12" height="12.5" fill="#7fa6d6" stroke="#3a5f96" stroke-width="1"/><path d="M5.5 4.5v12.5M9.5 4.5v12.5M1.5 8.6h12M1.5 12.8h12" stroke="#2f4f86" stroke-width="1"/><ellipse cx="12.5" cy="3.6" rx="4.4" ry="2.8" fill="#d4d7ee" stroke="#3b3b7a" stroke-width="1"/><circle cx="12.5" cy="3.6" r="2.2" fill="#2a2a8a"/></svg>
<div class="t" style="left:83px;top:826px;color:#000">In Solids</div>
<svg style="position:absolute;left:26px;top:844px" width="12" height="12"><path d="M4 1.5 L8.5 6 L4 10.5" fill="none" stroke="#8a8a8a" stroke-width="1.2"/></svg>
<div style="position:absolute;left:44px;top:844px;width:11px;height:11px;border:1px solid #333;background:#fff"></div>
<svg style="position:absolute;left:61px;top:842px" width="18" height="18" viewBox="0 0 18 18"><rect x="1.5" y="4.5" width="12" height="12.5" fill="#7fa6d6" stroke="#3a5f96" stroke-width="1"/><path d="M5.5 4.5v12.5M9.5 4.5v12.5M1.5 8.6h12M1.5 12.8h12" stroke="#2f4f86" stroke-width="1"/><ellipse cx="12.5" cy="3.6" rx="4.4" ry="2.8" fill="#d4d7ee" stroke="#3b3b7a" stroke-width="1"/><circle cx="12.5" cy="3.6" r="2.2" fill="#2a2a8a"/></svg>
<div class="t" style="left:83px;top:844px;color:#000">Mesh Quality</div>
<svg style="position:absolute;left:6px;top:862px" width="12" height="12"><path d="M4 1.5 L8.5 6 L4 10.5" fill="none" stroke="#8a8a8a" stroke-width="1.2"/></svg>
<div style="position:absolute;left:24px;top:862px;width:11px;height:11px;border:1px solid #0a57a5;background:#cce4f7"></div>
<svg style="position:absolute;left:41px;top:860px" width="18" height="18" viewBox="0 0 18 18"><path d="M6 5v12" stroke="#666" stroke-width="1.6"/><path d="M1.5 5.5h9l2.5 2.5l-2.5 2.5h-9z" fill="#6f8fe0" stroke="#3a4fa0" stroke-width=".9"/><ellipse cx="12.5" cy="3.6" rx="4.4" ry="2.8" fill="#d4d7ee" stroke="#3b3b7a" stroke-width="1"/><circle cx="12.5" cy="3.6" r="2.2" fill="#2a2a8a"/></svg>
<div class="t" style="left:63px;top:862px;color:#000">Guide Objects</div>
<svg style="position:absolute;left:6px;top:881px" width="12" height="12"><path d="M1.5 3.5 L6 8 L10.5 3.5" fill="none" stroke="#222" stroke-width="1.3"/></svg>
<div style="position:absolute;left:24px;top:880px;width:11px;height:11px;border:1px solid #0a57a5;background:#cce4f7"></div>
<svg style="position:absolute;left:41px;top:878px" width="18" height="18" viewBox="0 0 18 18"><g><path d="M2 4.5 L5.5 2.5 L9 4.5 L9 9 L5.5 11 L2 9Z" fill="#4caa3a"/><path d="M2 4.5 L5.5 6.5 L9 4.5 L5.5 2.5Z" fill="#86d86a"/><path d="M5.5 6.5 V11 L9 9 V4.5Z" fill="#2f7a24"/><path d="M9 4.5 L12.5 2.5 L16 4.5 L16 9 L12.5 11 L9 9Z" fill="#d03030"/><path d="M9 4.5 L12.5 6.5 L16 4.5 L12.5 2.5Z" fill="#f06a6a"/><path d="M12.5 6.5 V11 L16 9 V4.5Z" fill="#9a1c1c"/><path d="M5.5 10 L9 8 L12.5 10 L12.5 14.5 L9 16.5 L5.5 14.5Z" fill="#e08020"/><path d="M5.5 10 L9 12 L12.5 10 L9 8Z" fill="#f6b050"/><path d="M9 12 V16.5 L12.5 14.5 V10Z" fill="#a85a10"/></g></svg>
<div class="t" style="left:63px;top:880px;color:#000">General</div>
<svg style="position:absolute;left:26px;top:898px" width="12" height="12"><path d="M4 1.5 L8.5 6 L4 10.5" fill="none" stroke="#8a8a8a" stroke-width="1.2"/></svg>
<div style="position:absolute;left:44px;top:898px;width:11px;height:11px;border:1px solid #333;background:#fff"></div>
<svg style="position:absolute;left:61px;top:896px" width="18" height="18" viewBox="0 0 18 18"><g><path d="M2 4.5 L5.5 2.5 L9 4.5 L9 9 L5.5 11 L2 9Z" fill="#4caa3a"/><path d="M2 4.5 L5.5 6.5 L9 4.5 L5.5 2.5Z" fill="#86d86a"/><path d="M5.5 6.5 V11 L9 9 V4.5Z" fill="#2f7a24"/><path d="M9 4.5 L12.5 2.5 L16 4.5 L16 9 L12.5 11 L9 9Z" fill="#d03030"/><path d="M9 4.5 L12.5 6.5 L16 4.5 L12.5 2.5Z" fill="#f06a6a"/><path d="M12.5 6.5 V11 L16 9 V4.5Z" fill="#9a1c1c"/><path d="M5.5 10 L9 8 L12.5 10 L12.5 14.5 L9 16.5 L5.5 14.5Z" fill="#e08020"/><path d="M5.5 10 L9 12 L12.5 10 L9 8Z" fill="#f6b050"/><path d="M9 12 V16.5 L12.5 14.5 V10Z" fill="#a85a10"/></g></svg>
<div class="t" style="left:83px;top:898px;color:#000">Grid</div>
<div style="position:absolute;left:59px;top:914px;width:250px;height:16px;border:1px solid #0a78d7;background:#cce4f7"></div>
<div style="position:absolute;left:44px;top:916px;width:11px;height:11px;border:1px solid #333;background:#fff"></div>
<svg style="position:absolute;left:61px;top:914px" width="18" height="18" viewBox="0 0 18 18"><g opacity=".72"><path d="M2 4.5 L5.5 2.5 L9 4.5 L9 9 L5.5 11 L2 9Z" fill="#4caa3a"/><path d="M2 4.5 L5.5 6.5 L9 4.5 L5.5 2.5Z" fill="#86d86a"/><path d="M5.5 6.5 V11 L9 9 V4.5Z" fill="#2f7a24"/><path d="M9 4.5 L12.5 2.5 L16 4.5 L16 9 L12.5 11 L9 9Z" fill="#d03030"/><path d="M9 4.5 L12.5 6.5 L16 4.5 L12.5 2.5Z" fill="#f06a6a"/><path d="M12.5 6.5 V11 L16 9 V4.5Z" fill="#9a1c1c"/><path d="M5.5 10 L9 8 L12.5 10 L12.5 14.5 L9 16.5 L5.5 14.5Z" fill="#e08020"/><path d="M5.5 10 L9 12 L12.5 10 L9 8Z" fill="#f6b050"/><path d="M9 12 V16.5 L12.5 14.5 V10Z" fill="#a85a10"/></g></svg>
<div class="t" style="left:83px;top:916px;color:#000">View Cube</div>
<svg style="position:absolute;left:26px;top:934px" width="12" height="12"><path d="M4 1.5 L8.5 6 L4 10.5" fill="none" stroke="#8a8a8a" stroke-width="1.2"/></svg>
<div style="position:absolute;left:44px;top:934px;width:11px;height:11px;border:1px solid #333;background:#fff"></div>
<svg style="position:absolute;left:61px;top:932px" width="18" height="18" viewBox="0 0 18 18"><g><path d="M2 4.5 L5.5 2.5 L9 4.5 L9 9 L5.5 11 L2 9Z" fill="#4caa3a"/><path d="M2 4.5 L5.5 6.5 L9 4.5 L5.5 2.5Z" fill="#86d86a"/><path d="M5.5 6.5 V11 L9 9 V4.5Z" fill="#2f7a24"/><path d="M9 4.5 L12.5 2.5 L16 4.5 L16 9 L12.5 11 L9 9Z" fill="#d03030"/><path d="M9 4.5 L12.5 6.5 L16 4.5 L12.5 2.5Z" fill="#f06a6a"/><path d="M12.5 6.5 V11 L16 9 V4.5Z" fill="#9a1c1c"/><path d="M5.5 10 L9 8 L12.5 10 L12.5 14.5 L9 16.5 L5.5 14.5Z" fill="#e08020"/><path d="M5.5 10 L9 12 L12.5 10 L9 8Z" fill="#f6b050"/><path d="M9 12 V16.5 L12.5 14.5 V10Z" fill="#a85a10"/></g></svg>
<div class="t" style="left:83px;top:934px;color:#000;letter-spacing:0.16px">Coordinate Information on Cursor</div>
<svg style="position:absolute;left:26px;top:952px" width="12" height="12"><path d="M4 1.5 L8.5 6 L4 10.5" fill="none" stroke="#8a8a8a" stroke-width="1.2"/></svg>
<div style="position:absolute;left:44px;top:952px;width:11px;height:11px;border:1px solid #333;background:#fff"></div>
<svg style="position:absolute;left:61px;top:950px" width="18" height="18" viewBox="0 0 18 18"><g><path d="M2 4.5 L5.5 2.5 L9 4.5 L9 9 L5.5 11 L2 9Z" fill="#4caa3a"/><path d="M2 4.5 L5.5 6.5 L9 4.5 L5.5 2.5Z" fill="#86d86a"/><path d="M5.5 6.5 V11 L9 9 V4.5Z" fill="#2f7a24"/><path d="M9 4.5 L12.5 2.5 L16 4.5 L16 9 L12.5 11 L9 9Z" fill="#d03030"/><path d="M9 4.5 L12.5 6.5 L16 4.5 L12.5 2.5Z" fill="#f06a6a"/><path d="M12.5 6.5 V11 L16 9 V4.5Z" fill="#9a1c1c"/><path d="M5.5 10 L9 8 L12.5 10 L12.5 14.5 L9 16.5 L5.5 14.5Z" fill="#e08020"/><path d="M5.5 10 L9 12 L12.5 10 L9 8Z" fill="#f6b050"/><path d="M9 12 V16.5 L12.5 14.5 V10Z" fill="#a85a10"/></g></svg>
<div class="t" style="left:83px;top:952px;color:#000;letter-spacing:-0.5px">Axis System</div>
<div style="position:absolute;left:44px;top:970px;width:11px;height:11px;border:1px solid #333;background:#fff"></div>
<svg style="position:absolute;left:61px;top:968px" width="18" height="18" viewBox="0 0 18 18"><g><path d="M2 4.5 L5.5 2.5 L9 4.5 L9 9 L5.5 11 L2 9Z" fill="#4caa3a"/><path d="M2 4.5 L5.5 6.5 L9 4.5 L5.5 2.5Z" fill="#86d86a"/><path d="M5.5 6.5 V11 L9 9 V4.5Z" fill="#2f7a24"/><path d="M9 4.5 L12.5 2.5 L16 4.5 L16 9 L12.5 11 L9 9Z" fill="#d03030"/><path d="M9 4.5 L12.5 6.5 L16 4.5 L12.5 2.5Z" fill="#f06a6a"/><path d="M12.5 6.5 V11 L16 9 V4.5Z" fill="#9a1c1c"/><path d="M5.5 10 L9 8 L12.5 10 L12.5 14.5 L9 16.5 L5.5 14.5Z" fill="#e08020"/><path d="M5.5 10 L9 12 L12.5 10 L9 8Z" fill="#f6b050"/><path d="M9 12 V16.5 L12.5 14.5 V10Z" fill="#a85a10"/></g></svg>
<div class="t" style="left:83px;top:970px;color:#000;letter-spacing:0.15px">Show North Direction</div>
<div style="position:absolute;left:44px;top:988px;width:11px;height:11px;border:1px solid #333;background:#fff"></div><svg style="position:absolute;left:44px;top:988px" width="13" height="13"><path d="M2.8 6.8 L5.3 9.3 L10.4 3.6" fill="none" stroke="#222" stroke-width="1.2"/></svg>
<svg style="position:absolute;left:61px;top:986px" width="18" height="18" viewBox="0 0 18 18"><g><path d="M2 4.5 L5.5 2.5 L9 4.5 L9 9 L5.5 11 L2 9Z" fill="#4caa3a"/><path d="M2 4.5 L5.5 6.5 L9 4.5 L5.5 2.5Z" fill="#86d86a"/><path d="M5.5 6.5 V11 L9 9 V4.5Z" fill="#2f7a24"/><path d="M9 4.5 L12.5 2.5 L16 4.5 L16 9 L12.5 11 L9 9Z" fill="#d03030"/><path d="M9 4.5 L12.5 6.5 L16 4.5 L12.5 2.5Z" fill="#f06a6a"/><path d="M12.5 6.5 V11 L16 9 V4.5Z" fill="#9a1c1c"/><path d="M5.5 10 L9 8 L12.5 10 L12.5 14.5 L9 16.5 L5.5 14.5Z" fill="#e08020"/><path d="M5.5 10 L9 12 L12.5 10 L9 8Z" fill="#f6b050"/><path d="M9 12 V16.5 L12.5 14.5 V10Z" fill="#a85a10"/></g></svg>
<div class="t" style="left:83px;top:988px;color:#000;letter-spacing:0.08px">Show Hidden Objects in Background</div>
<div style="position:absolute;left:44px;top:1006px;width:11px;height:11px;border:1px solid #333;background:#fff"></div><svg style="position:absolute;left:44px;top:1006px" width="13" height="13"><path d="M2.8 6.8 L5.3 9.3 L10.4 3.6" fill="none" stroke="#222" stroke-width="1.2"/></svg>
<svg style="position:absolute;left:61px;top:1004px" width="18" height="18" viewBox="0 0 18 18"><g><path d="M2 4.5 L5.5 2.5 L9 4.5 L9 9 L5.5 11 L2 9Z" fill="#4caa3a"/><path d="M2 4.5 L5.5 6.5 L9 4.5 L5.5 2.5Z" fill="#86d86a"/><path d="M5.5 6.5 V11 L9 9 V4.5Z" fill="#2f7a24"/><path d="M9 4.5 L12.5 2.5 L16 4.5 L16 9 L12.5 11 L9 9Z" fill="#d03030"/><path d="M9 4.5 L12.5 6.5 L16 4.5 L12.5 2.5Z" fill="#f06a6a"/><path d="M12.5 6.5 V11 L16 9 V4.5Z" fill="#9a1c1c"/><path d="M5.5 10 L9 8 L12.5 10 L12.5 14.5 L9 16.5 L5.5 14.5Z" fill="#e08020"/><path d="M5.5 10 L9 12 L12.5 10 L9 8Z" fill="#f6b050"/><path d="M9 12 V16.5 L12.5 14.5 V10Z" fill="#a85a10"/></g></svg>
<div class="t" style="left:83px;top:1006px;color:#000">Show Clipped Areas</div>
<div style="position:absolute;left:44px;top:1024px;width:11px;height:11px;border:1px solid #333;background:#fff"></div><svg style="position:absolute;left:44px;top:1024px" width="13" height="13"><path d="M2.8 6.8 L5.3 9.3 L10.4 3.6" fill="none" stroke="#222" stroke-width="1.2"/></svg>
<svg style="position:absolute;left:61px;top:1022px" width="18" height="18" viewBox="0 0 18 18"><g><path d="M2 4.5 L5.5 2.5 L9 4.5 L9 9 L5.5 11 L2 9Z" fill="#4caa3a"/><path d="M2 4.5 L5.5 6.5 L9 4.5 L5.5 2.5Z" fill="#86d86a"/><path d="M5.5 6.5 V11 L9 9 V4.5Z" fill="#2f7a24"/><path d="M9 4.5 L12.5 2.5 L16 4.5 L16 9 L12.5 11 L9 9Z" fill="#d03030"/><path d="M9 4.5 L12.5 6.5 L16 4.5 L12.5 2.5Z" fill="#f06a6a"/><path d="M12.5 6.5 V11 L16 9 V4.5Z" fill="#9a1c1c"/><path d="M5.5 10 L9 8 L12.5 10 L12.5 14.5 L9 16.5 L5.5 14.5Z" fill="#e08020"/><path d="M5.5 10 L9 12 L12.5 10 L9 8Z" fill="#f6b050"/><path d="M9 12 V16.5 L12.5 14.5 V10Z" fill="#a85a10"/></g></svg>
<div class="t" style="left:83px;top:1024px;color:#000">Status of Camera Fly Mode</div>
<div style="position:absolute;left:44px;top:1042px;width:11px;height:11px;border:1px solid #333;background:#fff"></div><svg style="position:absolute;left:44px;top:1042px" width="13" height="13"><path d="M2.8 6.8 L5.3 9.3 L10.4 3.6" fill="none" stroke="#222" stroke-width="1.2"/></svg>
<svg style="position:absolute;left:61px;top:1040px" width="18" height="18" viewBox="0 0 18 18"><g><path d="M2 4.5 L5.5 2.5 L9 4.5 L9 9 L5.5 11 L2 9Z" fill="#4caa3a"/><path d="M2 4.5 L5.5 6.5 L9 4.5 L5.5 2.5Z" fill="#86d86a"/><path d="M5.5 6.5 V11 L9 9 V4.5Z" fill="#2f7a24"/><path d="M9 4.5 L12.5 2.5 L16 4.5 L16 9 L12.5 11 L9 9Z" fill="#d03030"/><path d="M9 4.5 L12.5 6.5 L16 4.5 L12.5 2.5Z" fill="#f06a6a"/><path d="M12.5 6.5 V11 L16 9 V4.5Z" fill="#9a1c1c"/><path d="M5.5 10 L9 8 L12.5 10 L12.5 14.5 L9 16.5 L5.5 14.5Z" fill="#e08020"/><path d="M5.5 10 L9 12 L12.5 10 L9 8Z" fill="#f6b050"/><path d="M9 12 V16.5 L12.5 14.5 V10Z" fill="#a85a10"/></g></svg>
<div class="t" style="left:83px;top:1042px;color:#000">Terrain</div>
<div style="position:absolute;left:44px;top:1060px;width:11px;height:11px;border:1px solid #333;background:#fff"></div>
<svg style="position:absolute;left:61px;top:1058px" width="18" height="18" viewBox="0 0 18 18"><g><path d="M2 4.5 L5.5 2.5 L9 4.5 L9 9 L5.5 11 L2 9Z" fill="#4caa3a"/><path d="M2 4.5 L5.5 6.5 L9 4.5 L5.5 2.5Z" fill="#86d86a"/><path d="M5.5 6.5 V11 L9 9 V4.5Z" fill="#2f7a24"/><path d="M9 4.5 L12.5 2.5 L16 4.5 L16 9 L12.5 11 L9 9Z" fill="#d03030"/><path d="M9 4.5 L12.5 6.5 L16 4.5 L12.5 2.5Z" fill="#f06a6a"/><path d="M12.5 6.5 V11 L16 9 V4.5Z" fill="#9a1c1c"/><path d="M5.5 10 L9 8 L12.5 10 L12.5 14.5 L9 16.5 L5.5 14.5Z" fill="#e08020"/><path d="M5.5 10 L9 12 L12.5 10 L9 8Z" fill="#f6b050"/><path d="M9 12 V16.5 L12.5 14.5 V10Z" fill="#a85a10"/></g></svg>
<div class="t" style="left:83px;top:1060px;color:#000;letter-spacing:0.07px">Show Numbering Captions</div>
<svg style="position:absolute;left:6px;top:1079px" width="12" height="12"><path d="M1.5 3.5 L6 8 L10.5 3.5" fill="none" stroke="#222" stroke-width="1.3"/></svg>
<div style="position:absolute;left:24px;top:1078px;width:11px;height:11px;border:1px solid #333;background:#fff"></div>
<svg style="position:absolute;left:41px;top:1076px" width="18" height="18" viewBox="0 0 18 18"><rect x=".5" y="3.5" width="17" height="11" fill="#aee8e8" stroke="#333" stroke-width="1"/><text x="9" y="12.4" font-size="8.6" font-family="Liberation Sans,sans-serif" text-anchor="middle" fill="#111" letter-spacing="-.3">123</text></svg>
<div class="t" style="left:63px;top:1078px;color:#000;letter-spacing:0.16px">Numbering</div>
<svg style="position:absolute;left:26px;top:1097px" width="12" height="12"><path d="M1.5 3.5 L6 8 L10.5 3.5" fill="none" stroke="#222" stroke-width="1.3"/></svg>
<div style="position:absolute;left:44px;top:1096px;width:11px;height:11px;border:1px solid #333;background:#fff"></div><svg style="position:absolute;left:44px;top:1096px" width="13" height="13"><path d="M2.8 6.8 L5.3 9.3 L10.4 3.6" fill="none" stroke="#222" stroke-width="1.2"/></svg>
<svg style="position:absolute;left:61px;top:1094px" width="18" height="18" viewBox="0 0 18 18"><rect x=".5" y="3.5" width="17" height="11" fill="#aee8e8" stroke="#333" stroke-width="1"/><text x="9" y="12.4" font-size="8.6" font-family="Liberation Sans,sans-serif" text-anchor="middle" fill="#111" letter-spacing="-.3">123</text></svg>
<div class="t" style="left:83px;top:1096px;color:#000">Basic Objects</div>
<div style="position:absolute;left:64px;top:1114px;width:11px;height:11px;border:1px solid #333;background:#fff"></div><svg style="position:absolute;left:64px;top:1114px" width="13" height="13"><path d="M2.8 6.8 L5.3 9.3 L10.4 3.6" fill="none" stroke="#222" stroke-width="1.2"/></svg>
<svg style="position:absolute;left:81px;top:1112px" width="18" height="18" viewBox="0 0 18 18"><rect x=".5" y="3.5" width="17" height="11" fill="#aee8e8" stroke="#333" stroke-width="1"/><text x="9" y="12.4" font-size="8.6" font-family="Liberation Sans,sans-serif" text-anchor="middle" fill="#111" letter-spacing="-.3">123</text></svg>
<div class="t" style="left:103px;top:1114px;color:#000">Nodes</div>
</div></div>
<div class="a" style="left:2px;top:1133px;width:326px;height:26px;background:#f8f8f8;border:1px solid #c6c6d2;border-top:none;width:325px;height:24px"></div>
<div class="a" style="left:3px;top:1133px;width:37px;height:21px;background:#f0f0f0;border-right:1px solid #c6c6d2;border-bottom:1px solid #c6c6d2"></div>
<div class="a" style="left:41px;top:1132px;width:38px;height:25px;background:#fff;"></div>
<div class="a" style="left:79px;top:1133px;width:37px;height:21px;background:#f0f0f0;border-left:1px solid #c6c6d2;border-right:1px solid #c6c6d2;border-bottom:1px solid #c6c6d2"></div>
<div class="a" style="left:118px;top:1133px;width:38px;height:21px;background:#f0f0f0;border-right:1px solid #c6c6d2;border-bottom:1px solid #c6c6d2"></div>
<div class="a" style="left:333px;top:99px;width:1267px;height:837px;background:#fff;"></div>
<div class="a" style="left:333px;top:100px;width:1267px;height:837px;overflow:hidden"><div class="a" style="left:-333px;top:-100px;width:1600px;height:1200px">
<svg style="position:absolute;left:0;top:0" width="1600" height="1200" viewBox="0 0 1600 1200">
<defs><clipPath id="plate"><polygon points="590,377 1577,588 1400,699 1318,681 1376,639 716,501 598,574 350,522"/></clipPath>
<g id="sup"><path d="M-3.500 0 L0 -6 L3.500 0Z" fill="#1ecb1e"/><path d="M-5.500 -3 L0 -1 L5.500 -3 L2.500 .500 L5.500 4.500 L0 2 L-5.500 4.500 L-2.500 .500Z" fill="#22d422"/><path d="M-2 -.500 L2 2 M2 -.500 L-2 2" stroke="#0fa80f" stroke-width=".9"/></g>
<radialGradient id="hot"><stop offset="0" stop-color="#e0a030"/><stop offset=".42" stop-color="#e0a030"/><stop offset=".56" stop-color="#d8c840"/><stop offset=".7" stop-color="#60c050"/><stop offset=".86" stop-color="#30a890"/><stop offset="1" stop-color="#27a2c4" stop-opacity="0"/></radialGradient><radialGradient id="core"><stop offset="0" stop-color="#c81414"/><stop offset=".6" stop-color="#d42828"/><stop offset=".82" stop-color="#dc5030"/><stop offset="1" stop-color="#e08030"/></radialGradient>
<radialGradient id="yel"><stop offset="0" stop-color="#c8b030"/><stop offset=".5" stop-color="#c0b030"/><stop offset=".62" stop-color="#48b050"/><stop offset="1" stop-color="#38b24e" stop-opacity="0"/></radialGradient>
</defs>
<path d="M592 375.500 L1577 586 L1577 589 L592 378.500Z" fill="#c4c8d0"/>
<g clip-path="url(#plate)">
<polygon points="590,377 1577,588 1400,699 1318,681 1376,639 716,501 598,574 350,522" fill="#2b35a4"/>
<polygon points="632.0,379.3 635.0,380.0 297.0,589.5 294.0,588.9" fill="#2450c8"/>
<polygon points="635.0,380.0 642.1,381.5 304.1,591.0 297.0,589.5" fill="#27a2c4"/>
<polygon points="642.1,381.5 647.9,382.7 309.9,592.3 304.1,591.0" fill="#2fa88e"/>
<polygon points="647.9,382.7 659.1,385.1 321.1,594.7 309.9,592.3" fill="#38b24e"/>
<polygon points="659.1,385.1 664.9,386.4 326.9,595.9 321.1,594.7" fill="#2fa88e"/>
<polygon points="664.9,386.4 672.0,387.9 334.0,597.4 326.9,595.9" fill="#27a2c4"/>
<polygon points="672.0,387.9 675.0,388.5 337.0,598.1 334.0,597.4" fill="#2450c8"/>
<polygon points="705.0,394.9 711.8,396.4 373.8,606.0 367.0,604.5" fill="#2450c8"/>
<polygon points="711.8,396.4 718.2,397.8 380.2,607.3 373.8,606.0" fill="#27a2c4"/>
<polygon points="718.2,397.8 723.4,398.9 385.4,608.4 380.2,607.3" fill="#27a2c4"/>
<polygon points="723.4,398.9 783.6,411.8 445.6,621.3 385.4,608.4" fill="#2fa88e"/>
<polygon points="783.6,411.8 788.8,412.9 450.8,622.4 445.6,621.3" fill="#27a2c4"/>
<polygon points="788.8,412.9 795.2,414.2 457.2,623.8 450.8,622.4" fill="#27a2c4"/>
<polygon points="795.2,414.2 802.0,415.7 464.0,625.3 457.2,623.8" fill="#2450c8"/>
<polygon points="730.0,400.3 744.0,403.3 406.0,612.8 392.0,609.8" fill="#34ae6a"/>
<polygon points="749.0,404.4 772.0,409.3 434.0,618.8 411.0,613.9" fill="#27a2c4"/>
<polygon points="776.0,410.1 796.0,414.4 458.0,624.0 438.0,619.7" fill="#38b24e"/>
<polygon points="843.0,424.5 845.8,425.1 507.8,634.6 505.0,634.0" fill="#2450c8"/>
<polygon points="845.8,425.1 851.5,426.3 513.5,635.9 507.8,634.6" fill="#27a2c4"/>
<polygon points="851.5,426.3 856.2,427.3 518.2,636.9 513.5,635.9" fill="#2fa88e"/>
<polygon points="856.2,427.3 869.8,430.2 531.8,639.8 518.2,636.9" fill="#38b24e"/>
<polygon points="869.8,430.2 874.5,431.2 536.5,640.8 531.8,639.8" fill="#2fa88e"/>
<polygon points="874.5,431.2 880.2,432.4 542.2,642.0 536.5,640.8" fill="#27a2c4"/>
<polygon points="880.2,432.4 883.0,433.0 545.0,642.6 542.2,642.0" fill="#2450c8"/>
<polygon points="899.0,436.5 900.7,436.8 562.7,646.4 561.0,646.0" fill="#2450c8"/>
<polygon points="900.7,436.8 904.6,437.7 566.6,647.2 562.7,646.4" fill="#27a2c4"/>
<polygon points="904.6,437.7 907.9,438.4 569.9,647.9 566.6,647.2" fill="#27a2c4"/>
<polygon points="907.9,438.4 914.1,439.7 576.1,649.2 569.9,647.9" fill="#27a2c4"/>
<polygon points="914.1,439.7 917.4,440.4 579.4,649.9 576.1,649.2" fill="#27a2c4"/>
<polygon points="917.4,440.4 921.3,441.2 583.3,650.8 579.4,649.9" fill="#27a2c4"/>
<polygon points="921.3,441.2 923.0,441.6 585.0,651.1 583.3,650.8" fill="#2450c8"/>
<polygon points="944.0,446.1 945.7,446.4 607.7,656.0 606.0,655.6" fill="#2450c8"/>
<polygon points="945.7,446.4 948.3,447.0 610.3,656.6 607.7,656.0" fill="#27a2c4"/>
<polygon points="948.3,447.0 950.5,447.5 612.5,657.0 610.3,656.6" fill="#27a2c4"/>
<polygon points="950.5,447.5 961.5,449.8 623.5,659.4 612.5,657.0" fill="#2fa88e"/>
<polygon points="961.5,449.8 963.7,450.3 625.7,659.9 623.5,659.4" fill="#27a2c4"/>
<polygon points="963.7,450.3 966.3,450.9 628.3,660.4 625.7,659.9" fill="#27a2c4"/>
<polygon points="966.3,450.9 968.0,451.2 630.0,660.8 628.3,660.4" fill="#2450c8"/>
<polygon points="988.0,455.5 989.8,455.9 651.8,665.4 650.0,665.1" fill="#2450c8"/>
<polygon points="989.8,455.9 992.7,456.5 654.7,666.1 651.8,665.4" fill="#27a2c4"/>
<polygon points="992.7,456.5 995.0,457.0 657.0,666.6 654.7,666.1" fill="#27a2c4"/>
<polygon points="995.0,457.0 1007.0,459.6 669.0,669.1 657.0,666.6" fill="#2fa88e"/>
<polygon points="1007.0,459.6 1009.3,460.1 671.3,669.6 669.0,669.1" fill="#27a2c4"/>
<polygon points="1009.3,460.1 1012.2,460.7 674.2,670.2 671.3,669.6" fill="#27a2c4"/>
<polygon points="1012.2,460.7 1014.0,461.1 676.0,670.6 674.2,670.2" fill="#2450c8"/>
<polygon points="1034.0,465.3 1035.8,465.7 697.8,675.3 696.0,674.9" fill="#2450c8"/>
<polygon points="1035.8,465.7 1038.7,466.3 700.7,675.9 697.8,675.3" fill="#27a2c4"/>
<polygon points="1038.7,466.3 1041.0,466.8 703.0,676.4 700.7,675.9" fill="#27a2c4"/>
<polygon points="1041.0,466.8 1053.0,469.4 715.0,679.0 703.0,676.4" fill="#2fa88e"/>
<polygon points="1053.0,469.4 1055.3,469.9 717.3,679.5 715.0,679.0" fill="#27a2c4"/>
<polygon points="1055.3,469.9 1058.2,470.5 720.2,680.1 717.3,679.5" fill="#27a2c4"/>
<polygon points="1058.2,470.5 1060.0,470.9 722.0,680.5 720.2,680.1" fill="#2450c8"/>
<polygon points="1080.0,475.2 1081.7,475.5 743.7,685.1 742.0,684.7" fill="#2450c8"/>
<polygon points="1081.7,475.5 1084.3,476.1 746.3,685.7 743.7,685.1" fill="#27a2c4"/>
<polygon points="1084.3,476.1 1086.5,476.6 748.5,686.1 746.3,685.7" fill="#27a2c4"/>
<polygon points="1086.5,476.6 1097.5,478.9 759.5,688.5 748.5,686.1" fill="#2fa88e"/>
<polygon points="1097.5,478.9 1099.7,479.4 761.7,689.0 759.5,688.5" fill="#27a2c4"/>
<polygon points="1099.7,479.4 1102.3,480.0 764.3,689.5 761.7,689.0" fill="#27a2c4"/>
<polygon points="1102.3,480.0 1104.0,480.3 766.0,689.9 764.3,689.5" fill="#2450c8"/>
<polygon points="1124.0,484.6 1125.6,484.9 787.6,694.5 786.0,694.2" fill="#2450c8"/>
<polygon points="1125.6,484.9 1128.1,485.5 790.1,695.0 787.6,694.5" fill="#27a2c4"/>
<polygon points="1128.1,485.5 1130.2,485.9 792.2,695.5 790.1,695.0" fill="#27a2c4"/>
<polygon points="1130.2,485.9 1140.8,488.2 802.8,697.8 792.2,695.5" fill="#2fa88e"/>
<polygon points="1140.8,488.2 1142.9,488.6 804.9,698.2 802.8,697.8" fill="#27a2c4"/>
<polygon points="1142.9,488.6 1145.4,489.2 807.4,698.7 804.9,698.2" fill="#27a2c4"/>
<polygon points="1145.4,489.2 1147.0,489.5 809.0,699.1 807.4,698.7" fill="#2450c8"/>
<polygon points="1167.0,493.8 1168.5,494.1 830.5,703.7 829.0,703.4" fill="#2450c8"/>
<polygon points="1168.5,494.1 1170.8,494.6 832.8,704.2 830.5,703.7" fill="#27a2c4"/>
<polygon points="1170.8,494.6 1172.7,495.0 834.7,704.6 832.8,704.2" fill="#27a2c4"/>
<polygon points="1172.7,495.0 1182.3,497.1 844.3,706.6 834.7,704.6" fill="#2fa88e"/>
<polygon points="1182.3,497.1 1184.2,497.5 846.2,707.0 844.3,706.6" fill="#27a2c4"/>
<polygon points="1184.2,497.5 1186.5,498.0 848.5,707.5 846.2,707.0" fill="#27a2c4"/>
<polygon points="1186.5,498.0 1188.0,498.3 850.0,707.9 848.5,707.5" fill="#2450c8"/>
<polygon points="1208.0,502.6 1209.6,502.9 871.6,712.5 870.0,712.1" fill="#2450c8"/>
<polygon points="1209.6,502.9 1212.1,503.5 874.1,713.0 871.6,712.5" fill="#27a2c4"/>
<polygon points="1212.1,503.5 1214.2,503.9 876.2,713.5 874.1,713.0" fill="#27a2c4"/>
<polygon points="1214.2,503.9 1224.8,506.2 886.8,715.7 876.2,713.5" fill="#2fa88e"/>
<polygon points="1224.8,506.2 1226.9,506.6 888.9,716.2 886.8,715.7" fill="#27a2c4"/>
<polygon points="1226.9,506.6 1229.4,507.2 891.4,716.7 888.9,716.2" fill="#27a2c4"/>
<polygon points="1229.4,507.2 1231.0,507.5 893.0,717.1 891.4,716.7" fill="#2450c8"/>
<polygon points="1251.0,511.8 1252.8,512.2 914.8,721.7 913.0,721.3" fill="#2450c8"/>
<polygon points="1252.8,512.2 1255.5,512.7 917.5,722.3 914.8,721.7" fill="#27a2c4"/>
<polygon points="1255.5,512.7 1257.8,513.2 919.8,722.8 917.5,722.3" fill="#27a2c4"/>
<polygon points="1257.8,513.2 1269.2,515.7 931.2,725.2 919.8,722.8" fill="#2fa88e"/>
<polygon points="1269.2,515.7 1271.5,516.2 933.5,725.7 931.2,725.2" fill="#27a2c4"/>
<polygon points="1271.5,516.2 1274.2,516.8 936.2,726.3 933.5,725.7" fill="#27a2c4"/>
<polygon points="1274.2,516.8 1276.0,517.1 938.0,726.7 936.2,726.3" fill="#2450c8"/>
<polygon points="1296.0,521.4 1297.7,521.8 959.7,731.3 958.0,731.0" fill="#2450c8"/>
<polygon points="1297.7,521.8 1300.3,522.3 962.3,731.9 959.7,731.3" fill="#27a2c4"/>
<polygon points="1300.3,522.3 1302.5,522.8 964.5,732.4 962.3,731.9" fill="#27a2c4"/>
<polygon points="1302.5,522.8 1313.5,525.2 975.5,734.7 964.5,732.4" fill="#2fa88e"/>
<polygon points="1313.5,525.2 1315.7,525.6 977.7,735.2 975.5,734.7" fill="#27a2c4"/>
<polygon points="1315.7,525.6 1318.3,526.2 980.3,735.7 977.7,735.2" fill="#27a2c4"/>
<polygon points="1318.3,526.2 1320.0,526.5 982.0,736.1 980.3,735.7" fill="#2450c8"/>
<polygon points="1340.0,530.8 1341.8,531.2 1003.8,740.8 1002.0,740.4" fill="#2450c8"/>
<polygon points="1341.8,531.2 1344.5,531.8 1006.5,741.3 1003.8,740.8" fill="#27a2c4"/>
<polygon points="1344.5,531.8 1346.8,532.3 1008.8,741.8 1006.5,741.3" fill="#27a2c4"/>
<polygon points="1346.8,532.3 1358.2,534.7 1020.2,744.3 1008.8,741.8" fill="#2fa88e"/>
<polygon points="1358.2,534.7 1360.5,535.2 1022.5,744.8 1020.2,744.3" fill="#27a2c4"/>
<polygon points="1360.5,535.2 1363.2,535.8 1025.2,745.4 1022.5,744.8" fill="#27a2c4"/>
<polygon points="1363.2,535.8 1365.0,536.2 1027.0,745.7 1025.2,745.4" fill="#2450c8"/>
<polygon points="1385.0,540.5 1386.8,540.8 1048.8,750.4 1047.0,750.0" fill="#2450c8"/>
<polygon points="1386.8,540.8 1389.5,541.4 1051.5,751.0 1048.8,750.4" fill="#27a2c4"/>
<polygon points="1389.5,541.4 1391.8,541.9 1053.8,751.5 1051.5,751.0" fill="#27a2c4"/>
<polygon points="1391.8,541.9 1403.2,544.4 1065.2,753.9 1053.8,751.5" fill="#2fa88e"/>
<polygon points="1403.2,544.4 1405.5,544.8 1067.5,754.4 1065.2,753.9" fill="#27a2c4"/>
<polygon points="1405.5,544.8 1408.2,545.4 1070.2,755.0 1067.5,754.4" fill="#27a2c4"/>
<polygon points="1408.2,545.4 1410.0,545.8 1072.0,755.4 1070.2,755.0" fill="#2450c8"/>
<polygon points="1430.0,550.1 1431.8,550.5 1093.8,760.0 1092.0,759.6" fill="#2450c8"/>
<polygon points="1431.8,550.5 1434.5,551.0 1096.5,760.6 1093.8,760.0" fill="#27a2c4"/>
<polygon points="1434.5,551.0 1436.8,551.5 1098.8,761.1 1096.5,760.6" fill="#27a2c4"/>
<polygon points="1436.8,551.5 1448.2,554.0 1110.2,763.6 1098.8,761.1" fill="#2fa88e"/>
<polygon points="1448.2,554.0 1450.5,554.5 1112.5,764.0 1110.2,763.6" fill="#27a2c4"/>
<polygon points="1450.5,554.5 1453.2,555.1 1115.2,764.6 1112.5,764.0" fill="#27a2c4"/>
<polygon points="1453.2,555.1 1455.0,555.4 1117.0,765.0 1115.2,764.6" fill="#2450c8"/>
<polygon points="1475.0,559.7 1476.8,560.1 1138.8,769.6 1137.0,769.3" fill="#2450c8"/>
<polygon points="1476.8,560.1 1479.5,560.7 1141.5,770.2 1138.8,769.6" fill="#27a2c4"/>
<polygon points="1479.5,560.7 1481.8,561.2 1143.8,770.7 1141.5,770.2" fill="#27a2c4"/>
<polygon points="1481.8,561.2 1493.2,563.6 1155.2,773.2 1143.8,770.7" fill="#2fa88e"/>
<polygon points="1493.2,563.6 1495.5,564.1 1157.5,773.7 1155.2,773.2" fill="#27a2c4"/>
<polygon points="1495.5,564.1 1498.2,564.7 1160.2,774.2 1157.5,773.7" fill="#27a2c4"/>
<polygon points="1498.2,564.7 1500.0,565.1 1162.0,774.6 1160.2,774.2" fill="#2450c8"/>
<polygon points="1520.0,569.3 1521.8,569.7 1183.8,779.3 1182.0,778.9" fill="#2450c8"/>
<polygon points="1521.8,569.7 1524.7,570.3 1186.7,779.9 1183.8,779.3" fill="#27a2c4"/>
<polygon points="1524.7,570.3 1527.0,570.8 1189.0,780.4 1186.7,779.9" fill="#27a2c4"/>
<polygon points="1527.0,570.8 1539.0,573.4 1201.0,783.0 1189.0,780.4" fill="#2fa88e"/>
<polygon points="1539.0,573.4 1541.3,573.9 1203.3,783.5 1201.0,783.0" fill="#27a2c4"/>
<polygon points="1541.3,573.9 1544.2,574.5 1206.2,784.1 1203.3,783.5" fill="#27a2c4"/>
<polygon points="1544.2,574.5 1546.0,574.9 1208.0,784.5 1206.2,784.1" fill="#2450c8"/>
<polygon points="1566.0,579.2 1567.8,579.6 1229.8,789.1 1228.0,788.7" fill="#2450c8"/>
<polygon points="1567.8,579.6 1570.7,580.2 1232.7,789.7 1229.8,789.1" fill="#27a2c4"/>
<polygon points="1570.7,580.2 1573.0,580.7 1235.0,790.3 1232.7,789.7" fill="#27a2c4"/>
<polygon points="1573.0,580.7 1585.0,583.2 1247.0,792.8 1235.0,790.3" fill="#2fa88e"/>
<polygon points="1585.0,583.2 1587.3,583.8 1249.3,793.3 1247.0,792.8" fill="#27a2c4"/>
<polygon points="1587.3,583.8 1590.2,584.4 1252.2,793.9 1249.3,793.3" fill="#27a2c4"/>
<polygon points="1590.2,584.4 1592.0,584.8 1254.0,794.3 1252.2,793.9" fill="#2450c8"/>
<polygon points="1612.0,589.0 1613.8,589.4 1275.8,799.0 1274.0,798.6" fill="#2450c8"/>
<polygon points="1613.8,589.4 1616.7,590.0 1278.7,799.6 1275.8,799.0" fill="#27a2c4"/>
<polygon points="1616.7,590.0 1619.0,590.5 1281.0,800.1 1278.7,799.6" fill="#27a2c4"/>
<polygon points="1619.0,590.5 1631.0,593.1 1293.0,802.7 1281.0,800.1" fill="#2fa88e"/>
<polygon points="1631.0,593.1 1633.3,593.6 1295.3,803.2 1293.0,802.7" fill="#27a2c4"/>
<polygon points="1633.3,593.6 1636.2,594.2 1298.2,803.8 1295.3,803.2" fill="#27a2c4"/>
<polygon points="1636.2,594.2 1638.0,594.6 1300.0,804.2 1298.2,803.8" fill="#2450c8"/>
<polygon points="792.0,413.6 844.0,424.7 724.0,499.1 672.0,488.0" fill="#2b35a4"/>
<polygon points="615.5,375.8 620.5,376.9 282.5,586.4 277.5,585.3" fill="#2c3ec4"/>
<polygon points="687.5,391.2 692.5,392.3 354.5,601.8 349.5,600.8" fill="#2c3ec4"/>
<polygon points="812.5,417.9 817.5,419.0 479.5,628.6 474.5,627.5" fill="#2c3ec4"/>
<polygon points="888.5,434.2 893.5,435.3 555.5,644.8 550.5,643.8" fill="#2c3ec4"/>
<polygon points="931.5,443.4 936.5,444.5 598.5,654.0 593.5,653.0" fill="#2c3ec4"/>
<polygon points="975.5,452.8 980.5,453.9 642.5,663.5 637.5,662.4" fill="#2c3ec4"/>
<polygon points="1021.5,462.7 1026.5,463.7 688.5,673.3 683.5,672.2" fill="#2c3ec4"/>
<polygon points="1067.5,472.5 1072.5,473.6 734.5,683.1 729.5,682.1" fill="#2c3ec4"/>
<polygon points="1111.5,481.9 1116.5,483.0 778.5,692.6 773.5,691.5" fill="#2c3ec4"/>
<polygon points="1154.5,491.1 1159.5,492.2 821.5,701.8 816.5,700.7" fill="#2c3ec4"/>
<polygon points="1195.5,499.9 1200.5,501.0 862.5,710.5 857.5,709.5" fill="#2c3ec4"/>
<polygon points="1238.5,509.1 1243.5,510.2 905.5,719.7 900.5,718.7" fill="#2c3ec4"/>
<polygon points="1283.5,518.7 1288.5,519.8 950.5,729.4 945.5,728.3" fill="#2c3ec4"/>
<polygon points="1327.5,528.2 1332.5,529.2 994.5,738.8 989.5,737.7" fill="#2c3ec4"/>
<polygon points="1372.5,537.8 1377.5,538.8 1039.5,748.4 1034.5,747.3" fill="#2c3ec4"/>
<polygon points="1417.5,547.4 1422.5,548.5 1084.5,758.0 1079.5,757.0" fill="#2c3ec4"/>
<polygon points="1462.5,557.0 1467.5,558.1 1129.5,767.7 1124.5,766.6" fill="#2c3ec4"/>
<polygon points="1507.5,566.7 1512.5,567.7 1174.5,777.3 1169.5,776.2" fill="#2c3ec4"/>
<polygon points="1553.5,576.5 1558.5,577.6 1220.5,787.1 1215.5,786.1" fill="#2c3ec4"/>
<polygon points="1599.5,586.4 1604.5,587.4 1266.5,797.0 1261.5,795.9" fill="#2c3ec4"/>
<polygon points="1645.5,596.2 1650.5,597.3 1312.5,806.8 1307.5,805.8" fill="#2c3ec4"/>
<path d="M437.0 619.5 L649.0 488.0 Q690.0 471.8 671.0 492.7 L459.0 624.2Z" fill="#27a2c4"/>
<path d="M406.0 612.8 L618.0 481.4 Q664.5 466.3 651.0 488.5 L439.0 619.9Z" fill="#2450c8"/>
<path d="M410.0 613.7 L614.0 487.2 Q656.5 471.3 639.0 492.6 L435.0 619.0Z" fill="#2b35a4"/>
<path d="M479.0 628.5 L697.0 493.3 Q739.0 477.3 721.0 498.4 L503.0 633.6Z" fill="#2450c8"/>
<path d="M482.0 629.1 L694.0 497.7 Q734.5 481.3 715.0 502.2 L503.0 633.6Z" fill="#27a2c4"/>
<path d="M487.0 630.2 L689.0 504.9 Q727.0 488.0 705.0 508.4 L503.0 633.6Z" fill="#2fa88e"/>
<path d="M901.0 501.9 Q880.4 517.8 857.0 529.2 Q877.6 513.4 901.0 501.9Z" fill="#262f94" stroke="#141a50" stroke-width=".5"/>
<path d="M947.0 511.8 Q926.4 527.6 903.0 539.1 Q923.6 523.2 947.0 511.8Z" fill="#262f94" stroke="#141a50" stroke-width=".5"/>
<path d="M993.0 521.6 Q972.4 537.5 949.0 548.9 Q969.6 533.1 993.0 521.6Z" fill="#262f94" stroke="#141a50" stroke-width=".5"/>
<path d="M1037.0 531.0 Q1016.4 546.9 993.0 558.3 Q1013.6 542.5 1037.0 531.0Z" fill="#262f94" stroke="#141a50" stroke-width=".5"/>
<path d="M1080.0 540.2 Q1059.4 556.1 1036.0 567.5 Q1056.6 551.7 1080.0 540.2Z" fill="#262f94" stroke="#141a50" stroke-width=".5"/>
<path d="M1121.0 549.0 Q1100.4 564.9 1077.0 576.3 Q1097.6 560.4 1121.0 549.0Z" fill="#262f94" stroke="#141a50" stroke-width=".5"/>
<path d="M1164.0 558.2 Q1143.4 574.1 1120.0 585.5 Q1140.6 569.6 1164.0 558.2Z" fill="#262f94" stroke="#141a50" stroke-width=".5"/>
<path d="M1209.0 567.8 Q1188.4 583.7 1165.0 595.1 Q1185.6 579.3 1209.0 567.8Z" fill="#262f94" stroke="#141a50" stroke-width=".5"/>
<path d="M1253.0 577.3 Q1232.4 593.1 1209.0 604.5 Q1229.6 588.7 1253.0 577.3Z" fill="#262f94" stroke="#141a50" stroke-width=".5"/>
<path d="M1298.0 586.9 Q1277.4 602.7 1254.0 614.2 Q1274.6 598.3 1298.0 586.9Z" fill="#262f94" stroke="#141a50" stroke-width=".5"/>
<path d="M1425.0 655.8 Q1406.4 670.4 1385.0 680.6 Q1403.6 666.0 1425.0 655.8Z" fill="#262f94" stroke="#141a50" stroke-width=".5"/>
<path d="M1440.0 684.0 Q1423.9 697.1 1405.0 705.7 Q1421.1 692.6 1440.0 684.0Z" fill="#262f94" stroke="#141a50" stroke-width=".5"/>
<polygon points="704,470 752,472 738,500 716,501 700,494" fill="#2b35a4"/>
<ellipse cx="679" cy="479" rx="27" ry="10" transform="rotate(-29 679 479)" fill="url(#yel)"/>
<ellipse cx="759" cy="493" rx="27" ry="10" transform="rotate(-29 759 493)" fill="url(#yel)"/>
<ellipse cx="1354" cy="669" rx="60" ry="21" transform="rotate(-32 1354 669)" fill="url(#hot)"/><ellipse cx="1354" cy="670" rx="36" ry="9" transform="rotate(-32 1354 670)" fill="url(#core)"/>
</g>
<path d="M711 471.500 l8 -1 l5 3 l10 -1.500 l12 2 l-4 3.500 l-30 -3z" fill="#0c109c"/>
<path d="M692 485 l22 1.500 l6 4 l-10 0z" fill="#0c109c"/>
<polygon points="694,480 716,476.500 739,482.500 727,490.500 711,486.500" fill="#fff"/>
<polygon points="693,480.500 716,476.500 722,479 708,487 " fill="#2ad02a"/>
<use href="#sup" x="355.0" y="527.8"/>
<use href="#sup" x="399.0" y="537.1"/>
<use href="#sup" x="443.0" y="546.3"/>
<use href="#sup" x="487.0" y="555.5"/>
<use href="#sup" x="531.0" y="564.7"/>
<use href="#sup" x="575.0" y="574.0"/>
<use href="#sup" x="603.0" y="582.0"/>
<use href="#sup" x="609.0" y="577.0"/>
<use href="#sup" x="610.8" y="577.1"/>
<use href="#sup" x="616.7" y="572.2"/>
<use href="#sup" x="618.6" y="572.3"/>
<use href="#sup" x="624.4" y="567.4"/>
<use href="#sup" x="626.4" y="567.4"/>
<use href="#sup" x="632.1" y="562.6"/>
<use href="#sup" x="634.1" y="562.6"/>
<use href="#sup" x="639.9" y="557.9"/>
<use href="#sup" x="641.9" y="557.7"/>
<use href="#sup" x="647.6" y="553.1"/>
<use href="#sup" x="649.7" y="552.9"/>
<use href="#sup" x="655.3" y="548.3"/>
<use href="#sup" x="657.5" y="548.0"/>
<use href="#sup" x="663.0" y="543.5"/>
<use href="#sup" x="665.3" y="543.1"/>
<use href="#sup" x="670.7" y="538.7"/>
<use href="#sup" x="673.1" y="538.3"/>
<use href="#sup" x="678.4" y="533.9"/>
<use href="#sup" x="680.9" y="533.4"/>
<use href="#sup" x="686.1" y="529.1"/>
<use href="#sup" x="688.6" y="528.6"/>
<use href="#sup" x="693.9" y="524.4"/>
<use href="#sup" x="696.4" y="523.7"/>
<use href="#sup" x="701.6" y="519.6"/>
<use href="#sup" x="704.2" y="518.9"/>
<use href="#sup" x="709.3" y="514.8"/>
<use href="#sup" x="712.0" y="514.0"/>
<use href="#sup" x="717.0" y="510.0"/>
<use href="#sup" x="722.0" y="507.2"/>
<use href="#sup" x="736.5" y="511.8"/>
<use href="#sup" x="751.1" y="513.3"/>
<use href="#sup" x="765.6" y="516.3"/>
<use href="#sup" x="780.2" y="520.8"/>
<use href="#sup" x="794.7" y="522.3"/>
<use href="#sup" x="809.3" y="525.4"/>
<use href="#sup" x="823.8" y="529.9"/>
<use href="#sup" x="838.4" y="531.4"/>
<use href="#sup" x="852.9" y="534.4"/>
<use href="#sup" x="867.5" y="539.0"/>
<use href="#sup" x="882.0" y="540.5"/>
<use href="#sup" x="896.6" y="543.5"/>
<use href="#sup" x="911.1" y="548.0"/>
<use href="#sup" x="925.7" y="549.5"/>
<use href="#sup" x="940.2" y="552.6"/>
<use href="#sup" x="954.8" y="557.1"/>
<use href="#sup" x="969.3" y="558.6"/>
<use href="#sup" x="983.9" y="561.6"/>
<use href="#sup" x="998.4" y="566.1"/>
<use href="#sup" x="1013.0" y="567.7"/>
<use href="#sup" x="1027.5" y="570.7"/>
<use href="#sup" x="1042.1" y="575.2"/>
<use href="#sup" x="1056.6" y="576.7"/>
<use href="#sup" x="1071.2" y="579.7"/>
<use href="#sup" x="1085.7" y="584.3"/>
<use href="#sup" x="1100.3" y="585.8"/>
<use href="#sup" x="1114.8" y="588.8"/>
<use href="#sup" x="1129.4" y="593.3"/>
<use href="#sup" x="1143.9" y="594.8"/>
<use href="#sup" x="1158.5" y="597.9"/>
<use href="#sup" x="1173.0" y="602.4"/>
<use href="#sup" x="1187.6" y="603.9"/>
<use href="#sup" x="1202.1" y="606.9"/>
<use href="#sup" x="1216.7" y="611.4"/>
<use href="#sup" x="1231.2" y="613.0"/>
<use href="#sup" x="1245.8" y="616.0"/>
<use href="#sup" x="1260.3" y="620.5"/>
<use href="#sup" x="1274.9" y="622.0"/>
<use href="#sup" x="1289.4" y="625.0"/>
<use href="#sup" x="1304.0" y="629.6"/>
<use href="#sup" x="1318.5" y="631.1"/>
<use href="#sup" x="1333.1" y="634.1"/>
<use href="#sup" x="1347.6" y="638.6"/>
<use href="#sup" x="1362.2" y="640.2"/>
<use href="#sup" x="1334.0" y="689.0"/>
<use href="#sup" x="1346.0" y="691.6"/>
<use href="#sup" x="1358.0" y="694.2"/>
<use href="#sup" x="1370.0" y="696.8"/>
<use href="#sup" x="1382.0" y="699.4"/>
<use href="#sup" x="1394.0" y="702.0"/>
<use href="#sup" x="1408.0" y="700.0"/>
<use href="#sup" x="1415.0" y="695.5"/>
<use href="#sup" x="1422.0" y="691.0"/>
<use href="#sup" x="1429.0" y="686.5"/>
<use href="#sup" x="1436.0" y="682.0"/>
<use href="#sup" x="1443.0" y="677.5"/>
<use href="#sup" x="1466.0" y="665.0"/>
<use href="#sup" x="1474.0" y="660.0"/>
<use href="#sup" x="1502.0" y="643.0"/>
<use href="#sup" x="1524.0" y="628.0"/>
<use href="#sup" x="1531.0" y="623.5"/>
<use href="#sup" x="1538.0" y="619.0"/>
<use href="#sup" x="1545.0" y="614.5"/>
<use href="#sup" x="1568.0" y="600.0"/>
</svg>
</div></div>
<div class="a" style="left:333px;top:940px;width:1267px;height:21px;background:#d9e6f5;"></div>
<div class="t" style="left:339px;top:942px;font-weight:bold;letter-spacing:-.3px;color:#333">Materials</div>
<svg class="a" style="left:1561px;top:943px" width="36" height="16"><rect x="1.500" y="5.500" width="6" height="6" fill="none" stroke="#222" stroke-width="1.400"/><path d="M3.500 5v-2.500h6.500v6.500h-2.500" fill="none" stroke="#222" stroke-width="1.400"/><path d="M22.500 3.500l7 7M29.500 3.500l-7 7" stroke="#222" stroke-width="1.800"/></svg>
<div class="a" style="left:333px;top:961px;width:1267px;height:47px;background:#f8f8f8;"></div>
<div class="t" style="left:341px;top:964px;">Go To</div>
<div class="t" style="left:387px;top:964px;">Edit</div>
<div class="t" style="left:423px;top:964px;">Selection</div>
<div class="t" style="left:486px;top:964px;">View</div>
<div class="t" style="left:527px;top:964px;">Settings</div>
<div class="a" style="left:335px;top:984px;width:201px;height:21px;background:#e4eefa;"></div>
<div class="t" style="left:359px;top:987px;">Structure</div>
<svg class="a" style="left:521px;top:992px" width="10" height="6"><path d="M.5 .5 L5 5 L9.5 .5" fill="none" stroke="#444" stroke-width="1.1"/></svg>
<div class="a" style="left:536px;top:984px;width:15px;height:22px;background:#d0d0d0;"></div>
<div class="a" style="left:552px;top:984px;width:15px;height:22px;background:#e4e6f1;"></div>
<svg class="a" style="left:536px;top:984px" width="32" height="22"><path d="M10 7v8l-5 -4z" fill="#444"/><path d="M21 7v8l5 -4z" fill="#111"/></svg>
<div class="sep" style="left:572px;top:986px;height:18px;background:#a6a6a6"></div>
<div class="a" style="left:578px;top:984px;width:271px;height:22px;background:#e4e6f1;"></div>
<div class="t" style="left:602px;top:987px;">Basic Objects</div>
<svg class="a" style="left:833px;top:992px" width="10" height="6"><path d="M.5 .5 L5 5 L9.5 .5" fill="none" stroke="#444" stroke-width="1.1"/></svg>
<div class="a" style="left:849px;top:984px;width:15px;height:22px;background:#d0d0d0;"></div>
<div class="a" style="left:865px;top:984px;width:15px;height:22px;background:#e4e6f1;"></div>
<svg class="a" style="left:849px;top:984px" width="32" height="22"><path d="M10 7v8l-5 -4z" fill="#444"/><path d="M21 7v8l5 -4z" fill="#111"/></svg>
<div class="sep" style="left:884px;top:986px;height:18px;background:#a6a6a6"></div>
<div class="sep" style="left:942px;top:986px;height:18px;background:#a6a6a6"></div>
<div class="sep" style="left:1079px;top:986px;height:18px;background:#a6a6a6"></div>
<div class="sep" style="left:1112px;top:986px;height:18px;background:#a6a6a6"></div>
<div class="sep" style="left:1222px;top:986px;height:18px;background:#a6a6a6"></div>
<div class="sep" style="left:1256px;top:986px;height:18px;background:#a6a6a6"></div>
<div class="sep" style="left:1368px;top:986px;height:18px;background:#a6a6a6"></div>
<div class="sep" style="left:1400px;top:986px;height:18px;background:#a6a6a6"></div>
<div class="sep" style="left:1432px;top:986px;height:18px;background:#a6a6a6"></div>
<div class="sep" style="left:1462px;top:986px;height:18px;background:#a6a6a6"></div>
<div class="tog" style="left:888px;top:984px;width:22px;height:20px"></div>
<div class="tog" style="left:914px;top:984px;width:22px;height:20px"></div>
<div class="a" style="left:333px;top:1008px;width:1267px;height:127px;background:#fff;border-top:1px solid #c8c8c8"></div>
<div class="a" style="left:334px;top:1009px;width:1249px;height:9px;background:#e2e2e2;"></div>
<div class="a" style="left:334px;top:1018px;width:1249px;height:33px;background:#f0f0f0;"></div>
<div class="a" style="left:334px;top:1051px;width:60px;height:66px;background:#e1e1e1;"></div>
<div class="a" style="left:334px;top:1018px;width:60px;height:33px;background:#e8e8e8;"></div>
<div class="a" style="left:1184px;top:1051px;width:99px;height:66px;background:#f8f8f0;"></div>
<div class="a" style="left:1583px;top:1009px;width:17px;height:110px;background:#f0f0f0;"></div>
<div class="a" style="left:1589px;top:1025px;width:2px;height:42px;background:#7a7a7a;"></div>
<div class="a" style="left:394px;top:1009px;width:1px;height:108px;background:#d4d4d4;"></div>
<div class="a" style="left:643px;top:1009px;width:1px;height:108px;background:#d4d4d4;"></div>
<div class="a" style="left:783px;top:1009px;width:1px;height:108px;background:#d4d4d4;"></div>
<div class="a" style="left:983px;top:1009px;width:1px;height:108px;background:#d4d4d4;"></div>
<div class="a" style="left:1083px;top:1009px;width:1px;height:108px;background:#d4d4d4;"></div>
<div class="a" style="left:1183px;top:1009px;width:1px;height:108px;background:#d4d4d4;"></div>
<div class="a" style="left:1283px;top:1009px;width:1px;height:108px;background:#d4d4d4;"></div>
<div class="a" style="left:1383px;top:1009px;width:1px;height:108px;background:#d4d4d4;"></div>
<div class="a" style="left:1483px;top:1009px;width:1px;height:108px;background:#d4d4d4;"></div>
<div class="a" style="left:393px;top:1009px;width:3px;height:9px;background:#f0f0f0;"></div>
<div class="a" style="left:642px;top:1009px;width:3px;height:9px;background:#f0f0f0;"></div>
<div class="a" style="left:782px;top:1009px;width:3px;height:9px;background:#f0f0f0;"></div>
<div class="a" style="left:982px;top:1009px;width:3px;height:9px;background:#f0f0f0;"></div>
<div class="a" style="left:1082px;top:1009px;width:3px;height:9px;background:#f0f0f0;"></div>
<div class="a" style="left:1182px;top:1009px;width:3px;height:9px;background:#f0f0f0;"></div>
<div class="a" style="left:1282px;top:1009px;width:3px;height:9px;background:#f0f0f0;"></div>
<div class="a" style="left:1382px;top:1009px;width:3px;height:9px;background:#f0f0f0;"></div>
<div class="a" style="left:1482px;top:1009px;width:3px;height:9px;background:#f0f0f0;"></div>
<div class="a" style="left:334px;top:1018px;width:1249px;height:1px;background:#d4d4d4;"></div>
<div class="a" style="left:334px;top:1051px;width:1249px;height:1px;background:#d4d4d4;"></div>
<div class="a" style="left:334px;top:1067px;width:1249px;height:1px;background:#d4d4d4;"></div>
<div class="a" style="left:334px;top:1083px;width:1249px;height:1px;background:#d4d4d4;"></div>
<div class="a" style="left:334px;top:1099px;width:1249px;height:1px;background:#d4d4d4;"></div>
<div class="a" style="left:334px;top:1115px;width:1249px;height:1px;background:#d4d4d4;"></div>
<div class="t" style="left:334px;top:1022px;width:60px;text-align:center">Material</div><div class="t" style="left:334px;top:1035px;width:60px;text-align:center">No.</div>
<div class="t" style="left:394px;top:1035px;width:249px;text-align:center">Material Name</div>
<div class="t" style="left:643px;top:1022px;width:140px;text-align:center">Material</div><div class="t" style="left:643px;top:1035px;width:140px;text-align:center">Type</div>
<div class="t" style="left:783px;top:1035px;width:200px;text-align:center">Material Model</div>
<div class="t" style="left:983px;top:1019px;width:100px;text-align:center">Modulus of Elast.</div><div class="t" style="left:983px;top:1035px;width:100px;text-align:center">E [N/mm<sup>2</sup>]</div>
<div class="t" style="left:1083px;top:1019px;width:100px;text-align:center">Shear Modulus</div><div class="t" style="left:1083px;top:1035px;width:100px;text-align:center">G [N/mm<sup>2</sup>]</div>
<div class="t" style="left:1183px;top:1019px;width:100px;text-align:center">Poisson's Ratio</div><div class="t" style="left:1183px;top:1035px;width:100px;text-align:center">ν [--]</div>
<div class="t" style="left:1283px;top:1019px;width:100px;text-align:center">Specific Weight</div><div class="t" style="left:1283px;top:1035px;width:100px;text-align:center">γ [kN/m<sup>3</sup>]</div>
<div class="t" style="left:1383px;top:1019px;width:100px;text-align:center">Mass Density</div><div class="t" style="left:1383px;top:1035px;width:100px;text-align:center">ρ [kg/m<sup>3</sup>]</div>
<div class="t" style="left:1483px;top:1019px;width:100px;text-align:center">Coeff. of Th. Exp.</div><div class="t" style="left:1483px;top:1035px;width:100px;text-align:center">α [1/°C]</div>
<div class="t" style="left:334px;top:1052px;width:60px;text-align:center">1</div>
<div class="a" style="left:399px;top:1054px;width:11px;height:11px;background:#a8a8a8;"></div>
<div class="t" style="left:414px;top:1052px;color:#000;letter-spacing:-.25px">GL28h</div>
<div class="a" style="left:648px;top:1054px;width:11px;height:11px;background:#7ab800;"></div>
<div class="t" style="left:664px;top:1052px;color:#000">Timber</div>
<div class="a" style="left:789px;top:1054px;width:11px;height:11px;background:#c4f8f8;"></div>
<div class="t" style="left:805px;top:1052px;color:#000;letter-spacing:-.25px">Isotropic | Linear Elastic</div>
<div class="t" style="left:983px;top:1052px;width:96px;text-align:right;color:#000">12600.0</div>
<div class="t" style="left:1083px;top:1052px;width:96px;text-align:right;color:#000">650.0</div>
<div class="t" style="left:1183px;top:1052px;width:96px;text-align:right;color:#000"></div>
<div class="t" style="left:1283px;top:1052px;width:96px;text-align:right;color:#000">4.60</div>
<div class="t" style="left:1383px;top:1052px;width:96px;text-align:right;color:#000">460.00</div>
<div class="t" style="left:1483px;top:1052px;width:96px;text-align:right;color:#000">0.000005</div>
<div class="t" style="left:334px;top:1068px;width:60px;text-align:center">2</div>
<div class="a" style="left:399px;top:1070px;width:11px;height:11px;background:#a8a8a8;"></div>
<div class="t" style="left:414px;top:1068px;color:#000;letter-spacing:-.25px">RF-LAMINATE 1 | Schichtenaufbau 1</div>
<div class="a" style="left:648px;top:1070px;width:11px;height:11px;background:#c4f8f8;"></div>
<div class="t" style="left:664px;top:1068px;color:#000">Basic</div>
<div class="a" style="left:789px;top:1070px;width:11px;height:11px;background:#c4f8f8;"></div>
<div class="t" style="left:805px;top:1068px;color:#000;letter-spacing:-.25px">Isotropic | Linear Elastic</div>
<div class="t" style="left:983px;top:1068px;width:96px;text-align:right;color:#000">5.0</div>
<div class="t" style="left:1083px;top:1068px;width:96px;text-align:right;color:#000">4.0</div>
<div class="t" style="left:1183px;top:1068px;width:96px;text-align:right;color:#000">-0.375</div>
<div class="t" style="left:1283px;top:1068px;width:96px;text-align:right;color:#000">5.00</div>
<div class="t" style="left:1383px;top:1068px;width:96px;text-align:right;color:#000">500.00</div>
<div class="t" style="left:1483px;top:1068px;width:96px;text-align:right;color:#000">0.000005</div>
<div class="t" style="left:334px;top:1084px;width:60px;text-align:center">3</div>
<div class="a" style="left:399px;top:1086px;width:11px;height:11px;background:#38d0d0;"></div>
<div class="t" style="left:414px;top:1084px;color:#0a78d7;letter-spacing:-.25px">RF-LAMINATE 2 | Schichtenaufbau 2</div>
<div class="a" style="left:648px;top:1086px;width:11px;height:11px;background:#c4f8f8;"></div>
<div class="t" style="left:664px;top:1084px;color:#0a78d7">Basic</div>
<div class="a" style="left:789px;top:1086px;width:11px;height:11px;background:#c4f8f8;"></div>
<div class="t" style="left:805px;top:1084px;color:#0a78d7;letter-spacing:-.25px">Isotropic | Linear Elastic</div>
<div class="t" style="left:983px;top:1084px;width:96px;text-align:right;color:#0a78d7">5.0</div>
<div class="t" style="left:1083px;top:1084px;width:96px;text-align:right;color:#0a78d7">5.0</div>
<div class="t" style="left:1183px;top:1084px;width:96px;text-align:right;color:#0a78d7">-0.500</div>
<div class="t" style="left:1283px;top:1084px;width:96px;text-align:right;color:#0a78d7">0.01</div>
<div class="t" style="left:1383px;top:1084px;width:96px;text-align:right;color:#0a78d7">1.00</div>
<div class="t" style="left:1483px;top:1084px;width:96px;text-align:right;color:#0a78d7">0.000005</div>
<div class="t" style="left:334px;top:1100px;width:60px;text-align:center">4</div>
<div class="a" style="left:396px;top:1052px;width:244px;height:14px;background:transparent;border:1px dotted #000"></div>
<div class="a" style="left:334px;top:1118px;width:1266px;height:17px;background:#f0f0f0;"></div>
<div class="a" style="left:352px;top:1126px;width:1102px;height:2px;background:#7a7a7a;"></div>
<div class="a" style="left:333px;top:1009px;width:1px;height:127px;background:#c6c6d2;"></div>
<div class="a" style="left:333px;top:1135px;width:1267px;height:23px;background:#f8f8f8;border-top:1px solid #c6c6d2"></div>
<svg class="a" style="left:335px;top:1139px" width="125" height="14"><path d="M4.500 3v8" stroke="#8a8a8a" stroke-width="1.400"/><path d="M11 3v8l-5 -4z" fill="#8a8a8a"/><path d="M24 3v8l-5 -4z" fill="#8a8a8a"/><path d="M94 3v8l5 -4z" fill="#555"/><path d="M110 3v8l5 -4z" fill="#555"/><path d="M116.500 3v8" stroke="#555" stroke-width="1.400"/></svg>
<div class="t" style="left:377px;top:1138px;">1 of 13</div>
<div class="tab" style="left:459px;width:62px;background:#fff;height:23px;line-height:23px">Materials</div>
<div class="tab" style="left:523px;width:58px">Sections</div>
<div class="tab" style="left:583px;width:75px">Thicknesses</div>
<div class="tab" style="left:660px;width:59px">Nodes</div>
<div class="tab" style="left:721px;width:59px">Lines</div>
<div class="tab" style="left:782px;width:61px">Members</div>
<div class="tab" style="left:845px;width:60px">Surfaces</div>
<div class="tab" style="left:907px;width:64px">Openings</div>
<div class="tab" style="left:973px;width:59px">Solids</div>
<div class="tab" style="left:1034px;width:60px">Line Sets</div>
<div class="tab" style="left:1096px;width:79px">Member Sets</div>
<div class="tab" style="left:1177px;width:77px">Surface Sets</div>
<div class="tab" style="left:1256px;width:64px">Solid Sets</div>
<div class="a" style="left:0px;top:1158px;width:1600px;height:25px;background:#f8f8f8;"></div>
<div class="a" style="left:0px;top:1158px;width:1600px;height:1px;background:#e4e4e4;"></div>
<div class="a" style="left:25px;top:1161px;width:128px;height:20px;background:#e4e6f1;"></div>
<div class="a" style="left:30px;top:1165px;width:11px;height:11px;background:#c0fbfb;"></div>
<div class="t" style="left:46px;top:1163px;letter-spacing:-.4px">1 - Global XYZ</div>
<svg class="a" style="left:138px;top:1168px" width="10" height="6"><path d="M.5 .5 L5 5 L9.5 .5" fill="none" stroke="#444" stroke-width="1.1"/></svg>
<div class="a" style="left:0px;top:1183px;width:1600px;height:17px;background:#e6e8f2;"></div>
<div class="a" style="left:994px;top:1185px;width:1px;height:15px;background:#cfcfd6;"></div>
<div class="a" style="left:1100px;top:1185px;width:1px;height:15px;background:#cfcfd6;"></div>
<div class="a" style="left:1306px;top:1185px;width:1px;height:15px;background:#cfcfd6;"></div>
<div class="a" style="left:1372px;top:1185px;width:1px;height:15px;background:#cfcfd6;"></div>
<div class="a" style="left:1524px;top:1185px;width:1px;height:15px;background:#cfcfd6;"></div>
<div class="t" style="left:1105px;top:1184px;letter-spacing:-.45px">CS: Global XYZ</div>
<div class="t" style="left:1311px;top:1184px;">Plane: XY</div>
<svg class="a" style="left:1515px;top:1098px" width="50" height="50" viewBox="0 0 50 50"><defs><clipPath id="av"><circle cx="25" cy="25" r="25"/></clipPath><radialGradient id="hr" cx=".5" cy=".4" r=".6"><stop offset="0" stop-color="#8a7860"/><stop offset=".6" stop-color="#a89478"/><stop offset="1" stop-color="#cdbfa6"/></radialGradient></defs><circle cx="25" cy="25" r="25" fill="#e6e7f3"/><g clip-path="url(#av)"><path d="M8 50 C9 44 15 41 19 40 L31 40 C36 41 41 44 42 50Z" fill="#3a6cb4"/><path d="M19 38h12l1 12h-14z" fill="#e2ae8c"/><path d="M17 40l2 -2l2 12h-5z M33 40l-2 -2l-2 12h5z" fill="#5a90d4"/><path d="M25 5 C14 4 8 12 9 20 C4 24 6 32 11 34 C14 38 20 36 19 30 L31 30 C30 36 37 38 40 33 C45 30 46 22 41 19 C42 11 36 5 25 5Z" fill="url(#hr)"/><ellipse cx="25" cy="25.500" rx="8.200" ry="11" fill="#e8b898"/><path d="M16.500 22 C17 12 33 12 33.500 22 C31 17 27 15.500 25 18 C22 15.500 19 17 16.500 22Z" fill="#9a8668"/><rect x="17" y="21.500" width="7" height="5.500" rx="1.800" fill="none" stroke="#3a5a9a" stroke-width="1.200"/><rect x="26" y="21.500" width="7" height="5.500" rx="1.800" fill="none" stroke="#3a5a9a" stroke-width="1.200"/><path d="M24 23.500h2" stroke="#3a5a9a" stroke-width="1"/><path d="M21.500 32 q3.500 2 7 0" fill="none" stroke="#b86a6a" stroke-width="1.200"/></g></svg>
<div class="a" style="left:555px;top:44px;width:1px;height:27px;background:#e0e0e0;"></div>
<div class="a" style="left:629px;top:44px;width:1px;height:27px;background:#e0e0e0;"></div>
<div class="a" style="left:1325px;top:44px;width:1px;height:27px;background:#e0e0e0;"></div>
<div class="a" style="left:652px;top:71px;width:1px;height:28px;background:#e0e0e0;"></div>
<div class="a" style="left:1170px;top:71px;width:1px;height:28px;background:#e0e0e0;"></div>
<div class="tog" style="left:347px;top:46px;width:23px;height:21px"></div>
<div class="tog" style="left:373px;top:46px;width:23px;height:21px"></div>
<div class="tog" style="left:1033px;top:46px;width:23px;height:21px"></div>
<div class="tog" style="left:1085px;top:46px;width:23px;height:21px"></div>
<div class="tog" style="left:1111px;top:46px;width:23px;height:21px"></div>
<div class="tog" style="left:1201px;top:46px;width:23px;height:21px"></div>
<div class="tog" style="left:722px;top:74px;width:23px;height:21px"></div>
<div class="tog" style="left:1234px;top:74px;width:23px;height:21px"></div>
<svg class="a" style="left:13px;top:48px;overflow:visible" width="18" height="18" viewBox="0 0 18 18"><path d="M5 3 h8 l3 3 v11 h-11z" fill="#fff" stroke="#555" stroke-width="1"/><path d="M13 3 v3 h3" fill="none" stroke="#555" stroke-width=".8"/><path d="M7 11 q3 -4 7 -1 l-1 4 q-3 -2 -5 0z" fill="#5a8ad0" stroke="#2a4a90" stroke-width=".5"/><polygon points="4.50,0.50 5.27,2.65 7.33,1.67 6.35,3.73 8.50,4.50 6.35,5.27 7.33,7.33 5.27,6.35 4.50,8.50 3.73,6.35 1.67,7.33 2.65,5.27 0.50,4.50 2.65,3.73 1.67,1.67 3.73,2.65" fill="#f6ee10" stroke="#c9a400" stroke-width=".5"/></svg>
<svg class="a" style="left:39px;top:48px;overflow:visible" width="18" height="18" viewBox="0 0 18 18"><path d="M1.500 7 h5l1.500 1.500h7.500v8.500h-14z" fill="#f2e69a" stroke="#b8a84a" stroke-width=".9"/><path d="M1.500 17 l2 -7 h13.500 l-1.500 7z" fill="#f6ecb0" stroke="#b8a84a" stroke-width=".9"/><path d="M13 10v-5h-2.500l3.500 -4l3.500 4h-2.500v5z" fill="#189a3a"/></svg>
<svg class="a" style="left:64px;top:48px;overflow:visible" width="18" height="18" viewBox="0 0 18 18"><path d="M3 1 h5.500 a8 8 0 0 1 0 16 h-5.500z" fill="#12b4e6"/><path d="M11.500 7.300 a3 3 0 1 0 0 3.600" fill="none" stroke="#fff" stroke-width="1.800"/></svg>
<svg class="a" style="left:90px;top:48px;overflow:visible" width="18" height="18" viewBox="0 0 18 18"><path d="M1 0.500 h4.500 a6.500 6.500 0 0 1 6 4 l-6 3 v8 h-4.500z" fill="#12b4e6"/><path d="M6.800 6.300 a2.200 2.200 0 1 0 0 2.800" fill="none" stroke="#fff" stroke-width="1.300"/><path d="M7 8.500 l5.500 -3 l5.500 3 v6.500 l-5.500 3 l-5.500 -3z" fill="#12b4e6"/><path d="M7 8.500 l5.500 3 l5.500 -3 M12.500 11.500 v6.500 M7 11.700l5.500 3l5.500 -3 M9.700 7l5.500 3v6.500 M15.300 7l-5.500 3v6.500" fill="none" stroke="#e8faff" stroke-width=".7"/></svg>
<svg class="a" style="left:117px;top:48px;overflow:visible" width="18" height="18" viewBox="0 0 18 18"><rect x="1" y="7.500" width="16" height="10" fill="#f0f0f0" stroke="#555" stroke-width="1"/><rect x="1.500" y="8" width="15" height="2.500" fill="#8a8a8a"/><path d="M3.500 12.500h2M3.500 15h2" stroke="#555" stroke-width="1.200"/><rect x="7" y="11.500" width="8.500" height="4.500" fill="#9a9a9a"/><path d="M7 13h8.500M7 14.500h8.500" stroke="#ddd" stroke-width=".6"/><path d="M2.500 7 q1 -4 6 -4.500 l5 -1 l1.500 5.500 l-5 1.500 q-4 1 -7.500 -1.500z" fill="#e8c0a0" stroke="#a07858" stroke-width=".6"/><path d="M12.500 1.500 l4 -1 l1.500 6 l-3.500 1z" fill="#3a6ab8"/></svg>
<svg class="a" style="left:142px;top:48px;overflow:visible" width="18" height="18" viewBox="0 0 18 18"><path d="M1 1.500 h14 l2.500 2.500 v13.500 h-16.500z" fill="#666"/><rect x="4" y="1.500" width="10" height="6.500" fill="#e8e8e8"/><path d="M5 3.300h8M5 5h8M5 6.600h8" stroke="#888" stroke-width=".8"/><rect x="4.500" y="11" width="9" height="6.500" fill="#555"/><rect x="6" y="12.500" width="2.500" height="5" fill="#e8e8e8"/></svg>
<svg class="a" style="left:169px;top:48px;overflow:visible" width="18" height="18" viewBox="0 0 18 18"><rect x="4.500" y="1" width="9" height="4" fill="#6a6a6a"/><rect x="0.800" y="5.500" width="16.400" height="8" rx="1.200" fill="#6a6a6a"/><rect x="4" y="10" width="10" height="7.500" fill="#e6e6e6" stroke="#6a6a6a" stroke-width="1.200"/><path d="M6 12.500h6M6 15h6" stroke="#888" stroke-width=".8"/><circle cx="14.800" cy="7.500" r=".8" fill="#ddd"/></svg>
<svg class="a" style="left:207px;top:48px;overflow:visible" width="18" height="18" viewBox="0 0 18 18"><path d="M3.5 1.5 h9 l3 3 v12.5 h-12z" fill="#fff" stroke="#555" stroke-width="1"/><path d="M12.5 1.5 v3 h3" fill="none" stroke="#555" stroke-width=".8"/><path d="M5.5 6.0h8" stroke="#8a8a8a" stroke-width="1"/><path d="M5.5 8.5h8" stroke="#8a8a8a" stroke-width="1"/><path d="M5.5 11.0h8" stroke="#8a8a8a" stroke-width="1"/><path d="M5.5 13.5h8" stroke="#8a8a8a" stroke-width="1"/><polygon points="4.00,0.50 4.77,2.65 6.83,1.67 5.85,3.73 8.00,4.50 5.85,5.27 6.83,7.33 4.77,6.35 4.00,8.50 3.23,6.35 1.17,7.33 2.15,5.27 0.00,4.50 2.15,3.73 1.17,1.67 3.23,2.65" fill="#f6ee10" stroke="#c9a400" stroke-width=".5"/></svg>
<svg class="a" style="left:234px;top:48px;overflow:visible" width="18" height="18" viewBox="0 0 18 18"><path d="M3 1.5 h9 l3 3 v12.5 h-12z" fill="#fff" stroke="#555" stroke-width="1"/><path d="M12 1.5 v3 h3" fill="none" stroke="#555" stroke-width=".8"/><path d="M5 6.0h8" stroke="#8a8a8a" stroke-width="1"/><path d="M5 8.5h8" stroke="#8a8a8a" stroke-width="1"/><path d="M5 11.0h8" stroke="#8a8a8a" stroke-width="1"/><path d="M5 13.5h8" stroke="#8a8a8a" stroke-width="1"/></svg>
<svg class="a" style="left:265px;top:48px;overflow:visible" width="18" height="18" viewBox="0 0 18 18"><path d="M1 3.500 v7 h7 l-2.600 -2.600 q5 -3 10.600 3.600 q-3.500 -10 -12.500 -5.500z" fill="#a4a4a4"/></svg>
<svg class="a" style="left:304px;top:48px;overflow:visible" width="18" height="18" viewBox="0 0 18 18"><path d="M17 3.500 v7 h-7 l2.600 -2.600 q-5 -3 -10.600 3.600 q3.500 -10 12.500 -5.500z" fill="#a4a4a4"/></svg>
<svg class="a" style="left:350px;top:48px;overflow:visible" width="18" height="18" viewBox="0 0 18 18"><rect x="3.5" y="1" width="11" height="16" fill="#ececec" stroke="#4a4a4a" stroke-width="1"/><rect x="4.0" y="1.5" width="10" height="2.2" fill="#2a3ea8"/><rect x="4.500" y="3.800" width="9" height="12.700" fill="#777"/><path d="M6.500 5.500h6.500M6.500 7.700h6.500M6.500 9.900h6.500M6.500 12.100h6.500M6.500 14.300h6.500" stroke="#f4f4f4" stroke-width="1.100"/><path d="M5 5.500h1.200M5 7.700h1.200M5 9.900h1.200M5 12.100h1.200" stroke="#111" stroke-width="1.100"/></svg>
<svg class="a" style="left:376px;top:48px;overflow:visible" width="18" height="18" viewBox="0 0 18 18"><rect x="0.5" y="1.5" width="17" height="15.5" fill="#ececec" stroke="#4a4a4a" stroke-width="1"/><rect x="1.0" y="2.0" width="16" height="2.2" fill="#2a3ea8"/><rect x="1.500" y="5" width="15" height="11.500" fill="#909090"/><path d="M1.500 7.500h15M1.500 10h15M1.500 12.500h15M1.500 15h15M5.500 5v11.500M9.500 5v11.500M13.500 5v11.500" stroke="#d8d8d8" stroke-width=".7"/></svg>
<svg class="a" style="left:400px;top:48px;overflow:visible" width="18" height="18" viewBox="0 0 18 18"><path d="M2.500 1v16M0 10h17" stroke="#333" stroke-width="1"/><path d="M2.500 0l-1.500 2.500h3z M17.500 10l-2.500 -1.500v3z" fill="#333"/><path d="M3 17 L7 7 L9 10 L11.500 9.500 L16 0.500" fill="none" stroke="#6aa8e8" stroke-width="1"/></svg>
<svg class="a" style="left:426px;top:48px;overflow:visible" width="18" height="18" viewBox="0 0 18 18"><rect x="3.5" y="1" width="11" height="16" fill="#ececec" stroke="#4a4a4a" stroke-width="1"/><rect x="4.0" y="1.5" width="10" height="2.2" fill="#2a3ea8"/><rect x="4.500" y="3.800" width="9" height="12.500" fill="#fff"/><path d="M5 5.300h3" stroke="#e02020" stroke-width="1.300"/><path d="M5 7.300h3" stroke="#f09020" stroke-width="1.300"/><path d="M5 9.300h3" stroke="#e8e020" stroke-width="1.300"/><path d="M5 11.300h3" stroke="#20c040" stroke-width="1.300"/><path d="M5 13.300h3" stroke="#2060e0" stroke-width="1.300"/><path d="M9 5.300h4M9 7.300h4M9 9.300h4M9 11.300h4M9 13.300h4" stroke="#333" stroke-width=".8"/><rect x="9" y="14.500" width="4" height="1.500" fill="#8ab0e0"/></svg>
<svg class="a" style="left:452px;top:48px;overflow:visible" width="18" height="18" viewBox="0 0 18 18"><rect x="0.5" y="1.5" width="17" height="15.5" fill="#ececec" stroke="#4a4a4a" stroke-width="1"/><rect x="1.0" y="2.0" width="16" height="2.2" fill="#2a3ea8"/><text x="2" y="11.500" font-size="9" font-weight="bold" font-family="Liberation Sans,sans-serif" fill="#111" letter-spacing="-.8">&gt;&gt;_</text></svg>
<svg class="a" style="left:478px;top:48px;overflow:visible" width="18" height="18" viewBox="0 0 18 18"><rect x="3.5" y="1" width="11" height="9" fill="#ececec" stroke="#4a4a4a" stroke-width="1"/><rect x="4.0" y="1.5" width="10" height="2.2" fill="#2a3ea8"/><rect x="5.500" y="4.500" width="7" height="2" fill="#aaa"/><rect x="0.500" y="9" width="17" height="8.500" rx="1.500" fill="#a8a8a8"/><text x="9" y="16.300" font-size="7.500" font-weight="bold" font-family="Liberation Sans,sans-serif" fill="#111" text-anchor="middle" letter-spacing="-.2">&gt;SC</text></svg>
<svg class="a" style="left:504px;top:48px;overflow:visible" width="18" height="18" viewBox="0 0 18 18"><rect x="3.5" y="1" width="11" height="16" fill="#ececec" stroke="#4a4a4a" stroke-width="1"/><rect x="4.0" y="1.5" width="10" height="2.2" fill="#2a3ea8"/><rect x="4.500" y="3.800" width="9" height="12.500" fill="#fff"/><path d="M5 5h8M5 11.500h8" stroke="#4a7ae0" stroke-width="1.300"/><path d="M7 7h5.500M7 9h5.500M7 13.500h5.500" stroke="#333" stroke-width=".9"/><rect x="5" y="14.800" width="8" height="1.500" fill="#999"/></svg>
<svg class="a" style="left:531px;top:48px;overflow:visible" width="18" height="18" viewBox="0 0 18 18"><circle cx="9" cy="8.500" r="4.800" fill="#8a8a8a"/><circle cx="7.300" cy="7.500" r=".8" fill="#eee"/><circle cx="10.700" cy="7.500" r=".8" fill="#eee"/><path d="M6.800 10 q2.200 2 4.400 0" fill="none" stroke="#eee" stroke-width=".8"/><path d="M2.500 9 a6.500 6.500 0 0 1 13 0" fill="none" stroke="#8a8a8a" stroke-width="1"/><rect x="1.500" y="8" width="2" height="4" rx="1" fill="#8a8a8a"/><rect x="14.500" y="8" width="2" height="4" rx="1" fill="#8a8a8a"/><path d="M15.500 12 q0 4 -5 4" fill="none" stroke="#8a8a8a" stroke-width=".9"/><rect x="8" y="15.300" width="3" height="1.500" fill="#777"/></svg>
<svg class="a" style="left:568px;top:48px;overflow:visible" width="18" height="18" viewBox="0 0 18 18"><path d="M5.500 2.500 L15.500 2.500 L11.500 15.500 L1.500 15.500Z" fill="#f6ea60" stroke="#222" stroke-width=".8"/><circle cx="5.5" cy="2.5" r="1.2" fill="#e01010"/><circle cx="15.5" cy="2.5" r="1.2" fill="#e01010"/><circle cx="11.5" cy="15.5" r="1.2" fill="#e01010"/><circle cx="1.5" cy="15.5" r="1.2" fill="#e01010"/><path d="M11 7 v9 l2 -2 l1.500 3.300 l1.300 -.6 l-1.500 -3.200 h3z" fill="#fff" stroke="#444" stroke-width=".7"/></svg>
<svg class="a" style="left:606px;top:48px;overflow:visible" width="18" height="18" viewBox="0 0 18 18"><rect x="1" y="3" width="15" height="13" rx="1.500" fill="#f6ea60" stroke="#333" stroke-width="1.100"/><path d="M3.500 7.500h5M6 5v5M3.500 12.500h4" stroke="#111" stroke-width="1.300"/><path d="M11 8 v8.500 l2 -2 l1.500 3 l1.300 -.6 l-1.500 -3 h2.800z" fill="#fff" stroke="#444" stroke-width=".7"/></svg>
<svg class="a" style="left:643px;top:48px;overflow:visible" width="18" height="18" viewBox="0 0 18 18"><path d="M0 16.500h17" stroke="#333" stroke-width="1.300"/><rect x="3.7" y="3" width="2.6" height="9" fill="#9fc0e8" stroke="#4a78b8" stroke-width=".4"/><path d="M1.5 11.5 L8.5 11.5 L5 15Z" fill="#4a78b8"/><rect x="8.5" y="0.5" width="9" height="7" fill="#f2f2f2" stroke="#555" stroke-width=".8"/><rect x="8.9" y="0.9" width="8.2" height="2" fill="#2a3ea8"/><polygon points="4.50,0.30 5.30,2.56 7.47,1.53 6.44,3.70 8.70,4.50 6.44,5.30 7.47,7.47 5.30,6.44 4.50,8.70 3.70,6.44 1.53,7.47 2.56,5.30 0.30,4.50 2.56,3.70 1.53,1.53 3.70,2.56" fill="#f6ee10" stroke="#c9a400" stroke-width=".5"/></svg>
<svg class="a" style="left:669px;top:48px;overflow:visible" width="18" height="18" viewBox="0 0 18 18"><path d="M0 16.500h17" stroke="#333" stroke-width="1.300"/><rect x="3.7" y="4" width="2.6" height="8" fill="#9fc0e8" stroke="#4a78b8" stroke-width=".4"/><path d="M1.5 11.5 L8.5 11.5 L5 15Z" fill="#4a78b8"/><rect x="8.5" y="0.5" width="9" height="7" fill="#f2f2f2" stroke="#555" stroke-width=".8"/><rect x="8.9" y="0.9" width="8.2" height="2" fill="#2a3ea8"/></svg>
<svg class="a" style="left:999px;top:48px;overflow:visible" width="18" height="18" viewBox="0 0 18 18"><path d="M0.500 3.500 h12 l-4.500 5.500 v7 l-3 -2 v-5z" fill="#5a8ad8"/><path d="M4.500 9 h3.500 v7l-3 -2z" fill="#8ab0f0"/><path d="M9.500 1.500 l7 7 M16.500 1.500 l-7 7" stroke="#e01818" stroke-width="2.200"/></svg>
<svg class="a" style="left:1036px;top:48px;overflow:visible" width="18" height="18" viewBox="0 0 18 18"><path d="M8.500 7 v10" stroke="#111" stroke-width="1.300" stroke-dasharray="1.600 1.100"/><path d="M8 17 C4.500 15 3.500 11 5 8" fill="none" stroke="#18a048" stroke-width="1.600"/><ellipse cx="12.5" cy="5" rx="4.6" ry="3" fill="#e4e6f8" stroke="#26266e" stroke-width="1"/><circle cx="12.5" cy="5" r="2.1" fill="#2a2a98"/><circle cx="12.5" cy="5" r=".8" fill="#111"/></svg>
<svg class="a" style="left:1063px;top:48px;overflow:visible" width="18" height="18" viewBox="0 0 18 18"><text x="9" y="6.500" font-size="9" font-weight="bold" font-family="Liberation Sans,sans-serif" fill="#8a8a8a" text-anchor="middle" letter-spacing="-.2">x.xx</text><path d="M10 8 v9" stroke="#888" stroke-width="1.200" stroke-dasharray="1.600 1.100"/><path d="M9.500 17 C6.500 15 5.500 12 6.500 8.500" fill="none" stroke="#9a9a9a" stroke-width="1.400"/></svg>
<svg class="a" style="left:1088px;top:48px;overflow:visible" width="18" height="18" viewBox="0 0 18 18"><path d="M0.500 16.500h17" stroke="#333" stroke-width="1.400"/><rect x="3.8" y="7" width="2.4" height="5.5" fill="#9fc0e8" stroke="#4a78b8" stroke-width=".4"/><path d="M1.7000000000000002 12.0 L8.3 12.0 L5 15.5Z" fill="#4a78b8"/><ellipse cx="12.5" cy="4.5" rx="4.6" ry="3" fill="#e4e6f8" stroke="#26266e" stroke-width="1"/><circle cx="12.5" cy="4.5" r="2.1" fill="#2a2a98"/><circle cx="12.5" cy="4.5" r=".8" fill="#111"/></svg>
<svg class="a" style="left:1114px;top:48px;overflow:visible" width="18" height="18" viewBox="0 0 18 18"><path d="M0.500 16.500h17" stroke="#333" stroke-width="1.400"/><rect x="3.8" y="7" width="2.4" height="5.5" fill="#9fc0e8" stroke="#4a78b8" stroke-width=".4"/><path d="M1.7000000000000002 12.0 L8.3 12.0 L5 15.5Z" fill="#4a78b8"/><text x="9.500" y="6" font-size="9" font-weight="bold" font-family="Liberation Sans,sans-serif" fill="#111" text-anchor="middle" letter-spacing="-.2">x.xx</text></svg>
<svg class="a" style="left:1140px;top:48px;overflow:visible" width="18" height="18" viewBox="0 0 18 18"><path d="M1 6 l4 -2 h8 v10 l-4 2.500 h-8z" fill="#d4d4d4" stroke="#bbb" stroke-width=".6"/><path d="M5 4v10.500M9 4.500v12" stroke="#b8b8b8" stroke-width=".6"/><ellipse cx="12.5" cy="4.5" rx="4.6" ry="3" fill="#eee" stroke="#9a9a9a" stroke-width="1"/><circle cx="12.5" cy="4.5" r="2.1" fill="#b0b0b0"/><circle cx="12.5" cy="4.5" r=".8" fill="#888"/></svg>
<svg class="a" style="left:1166px;top:48px;overflow:visible" width="18" height="18" viewBox="0 0 18 18"><rect x="1" y="5" width="13" height="12.500" fill="#7fa6d6" stroke="#3a5f96" stroke-width="1"/><path d="M5.300 5v12.500M9.600 5v12.500M1 9.200h13M1 13.400h13" stroke="#2f4f86" stroke-width="1"/><ellipse cx="12.5" cy="4" rx="4.6" ry="3" fill="#e4e6f8" stroke="#26266e" stroke-width="1"/><circle cx="12.5" cy="4" r="2.1" fill="#2a2a98"/><circle cx="12.5" cy="4" r=".8" fill="#111"/></svg>
<svg class="a" style="left:1204px;top:48px;overflow:visible" width="18" height="18" viewBox="0 0 18 18"><path d="M0.500 17 L0.500 12.300 L9.500 10.900Z" fill="#2a4fb0"/><path d="M9.500 10.900 L17.500 9.500 L17.500 5 Z" fill="#d83a2a"/><path d="M1 12.600 L17.500 9.700" stroke="#333" stroke-width="1"/><ellipse cx="12" cy="4.5" rx="4.6" ry="3" fill="#e4e6f8" stroke="#26266e" stroke-width="1"/><circle cx="12" cy="4.5" r="2.1" fill="#2a2a98"/><circle cx="12" cy="4.5" r=".8" fill="#111"/></svg>
<svg class="a" style="left:1230px;top:48px;overflow:visible" width="18" height="18" viewBox="0 0 18 18"><path d="M0.500 17 L0.500 12.300 L9.500 10.900Z" fill="#2a4fb0"/><path d="M9.500 10.900 L17.500 9.500 L17.500 5 Z" fill="#d83a2a"/><path d="M1 12.600 L17.500 9.700" stroke="#333" stroke-width="1"/><text x="9.500" y="6" font-size="9" font-weight="bold" font-family="Liberation Sans,sans-serif" fill="#111" text-anchor="middle" letter-spacing="-.2">x.xx</text></svg>
<svg class="a" style="left:1263px;top:48px;overflow:visible" width="18" height="18" viewBox="0 0 18 18"><path d="M0 14.500 L0 11.500 L9 10.500Z" fill="#2a4fb0"/><path d="M9 10.500 L17 9.500 L17 6.500 Z" fill="#d83a2a"/><path d="M0 11.600 L17 9.500" stroke="#333" stroke-width="1"/><rect x="8" y="0.5" width="9" height="7" fill="#f2f2f2" stroke="#555" stroke-width=".8"/><rect x="8.4" y="0.9" width="8.2" height="2" fill="#2a3ea8"/><circle cx="13" cy="14" r="3" fill="#fff" stroke="#6a8ae8" stroke-width="2" stroke-dasharray="1.300 1"/><circle cx="13" cy="14" r="2.400" fill="#6a8ae8"/><circle cx="13" cy="14" r="1" fill="#fff"/></svg>
<svg class="a" style="left:1289px;top:48px;overflow:visible" width="18" height="18" viewBox="0 0 18 18"><path d="M1 3v14M17 3v14" stroke="#111" stroke-width="1.500"/><path d="M1 6.500h16M1 12h16" stroke="#555" stroke-width=".8"/><circle cx="4.500" cy="6.500" r="1.900" fill="#e8d868" stroke="#8a7a20" stroke-width=".5"/><circle cx="9" cy="6.500" r="1.900" fill="#e8d868" stroke="#8a7a20" stroke-width=".5"/><circle cx="13.500" cy="6.500" r="1.900" fill="#e8d868" stroke="#8a7a20" stroke-width=".5"/><circle cx="4.500" cy="12" r="1.900" fill="#6a88d8" stroke="#2a3a80" stroke-width=".5"/><circle cx="9" cy="12" r="1.900" fill="#6a88d8" stroke="#2a3a80" stroke-width=".5"/><circle cx="13.500" cy="12" r="1.900" fill="#6a88d8" stroke="#2a3a80" stroke-width=".5"/></svg>
<svg class="a" style="left:1338px;top:48px;overflow:visible" width="18" height="18" viewBox="0 0 18 18"><circle cx="6.500" cy="7.500" r="4.500" fill="none" stroke="#555" stroke-width="2"/><path d="M10 11l6 6" stroke="#555" stroke-width="2.400"/><path d="M9 1.500l7 7M16 1.500l-7 7" stroke="#e01818" stroke-width="2.200"/></svg>
<svg class="a" style="left:1364px;top:48px;overflow:visible" width="18" height="18" viewBox="0 0 18 18"><path d="M1.500 5.500 l5 -3.500 h10 v10 l-5 4.500 h-10z" fill="#c4c8e4" stroke="#8088c0" stroke-width=".9"/><path d="M1.500 5.500 h10 l5 -3.500 M11.500 5.500 v11" fill="none" stroke="#8088c0" stroke-width=".9"/><path d="M6.500 2v10l-5 4.500M6.500 12h10" fill="none" stroke="#a0a6d4" stroke-width=".6"/></svg>
<svg class="a" style="left:1390px;top:48px;overflow:visible" width="18" height="18" viewBox="0 0 18 18"><path d="M1.500 5.500 l5 -3.500 h10 v10 l-5 4.500 h-10z" fill="#c4c8e4" stroke="#8088c0" stroke-width=".9"/><path d="M1.500 5.500 h10 l5 -3.500 M11.500 5.500 v11" fill="none" stroke="#8088c0" stroke-width=".9"/><path d="M6.500 2v10l-5 4.500M6.500 12h10" fill="none" stroke="#a0a6d4" stroke-width=".6"/><path d="M8 11 l1 -3 l6 -6.500 l2.300 2.200 l-6.200 6.300z" fill="#f4c64a" stroke="#b07a2a" stroke-width=".6"/><path d="M15 1.500 l1 -1 l2.300 2.200 l-1 1z" fill="#f0a0c0"/><path d="M8 11 l1 -3 l2.100 2z" fill="#e8d8c0"/></svg>
<svg class="a" style="left:1416px;top:48px;overflow:visible" width="18" height="18" viewBox="0 0 18 18"><path d="M1 10 l9 -8 h7 v7 l-9 8.500 h-7z" fill="#d4d8ec" stroke="#8088c0" stroke-width=".9"/><rect x="1" y="10" width="7" height="7.500" fill="#e4e6f4" stroke="#8088c0" stroke-width=".9"/><path d="M8 10 l9 -8 M10 2 v5.500 h7 M10 7.500 l-2 2.500" fill="none" stroke="#8088c0" stroke-width=".8"/></svg>
<svg class="a" style="left:1447px;top:48px;overflow:visible" width="18" height="18" viewBox="0 0 18 18"><path d="M3 3h10" stroke="#18a040" stroke-width="1.300"/><path d="M15.500 3l-4 -2.500v5z" fill="#18a040"/><path d="M3 3v10" stroke="#1840d0" stroke-width="1.300"/><path d="M3 16.500l-2.500 -4.500h5z" fill="#1840d0"/><circle cx="3" cy="3" r="2.100" fill="#f8e020" stroke="#d02010" stroke-width="1"/><text x="12" y="16.500" font-size="10.500" font-weight="bold" font-family="Liberation Sans,sans-serif" fill="#111" text-anchor="middle" letter-spacing="-.5">X</text></svg>
<svg class="a" style="left:1473px;top:48px;overflow:visible" width="18" height="18" viewBox="0 0 18 18"><path d="M3 3h10" stroke="#d04010" stroke-width="1.300"/><path d="M15.500 3l-4 -2.500v5z" fill="#d04010"/><path d="M3 3v10" stroke="#1840d0" stroke-width="1.300"/><path d="M3 16.500l-2.500 -4.500h5z" fill="#1840d0"/><circle cx="3" cy="3" r="2.100" fill="#18a040" stroke="#18a040" stroke-width="1"/><text x="12" y="16.500" font-size="10.500" font-weight="bold" font-family="Liberation Sans,sans-serif" fill="#111" text-anchor="middle" letter-spacing="-.5">-Y</text></svg>
<svg class="a" style="left:1499px;top:48px;overflow:visible" width="18" height="18" viewBox="0 0 18 18"><path d="M3 3h10" stroke="#d04010" stroke-width="1.300"/><path d="M15.500 3l-4 -2.500v5z" fill="#d04010"/><path d="M3 3v10" stroke="#18a040" stroke-width="1.300"/><path d="M3 16.500l-2.500 -4.500h5z" fill="#18a040"/><circle cx="3" cy="3" r="2.100" fill="#f8e020" stroke="#1840d0" stroke-width="1"/><text x="12" y="16.500" font-size="10.500" font-weight="bold" font-family="Liberation Sans,sans-serif" fill="#111" text-anchor="middle" letter-spacing="-.5">Z</text></svg>
<svg class="a" style="left:1526px;top:48px;overflow:visible" width="18" height="18" viewBox="0 0 18 18"><path d="M5 3h10" stroke="#18a040" stroke-width="1.300"/><path d="M2.500 3l4 -2.500v5z" fill="#18a040"/><path d="M15 3v10" stroke="#1840d0" stroke-width="1.300"/><path d="M15 16.500l-2.500 -4.500h5z" fill="#1840d0"/><circle cx="15" cy="3" r="2.100" fill="#c03010" stroke="#c03010" stroke-width="1"/><text x="6" y="16.500" font-size="10.500" font-weight="bold" font-family="Liberation Sans,sans-serif" fill="#111" text-anchor="middle" letter-spacing="-.5">-X</text></svg>
<svg class="a" style="left:10px;top:76px;overflow:visible" width="18" height="18" viewBox="0 0 18 18"><polygon points="8.00,0.70 8.92,3.28 11.39,2.11 10.22,4.58 12.80,5.50 10.22,6.42 11.39,8.89 8.92,7.72 8.00,10.30 7.08,7.72 4.61,8.89 5.78,6.42 3.20,5.50 5.78,4.58 4.61,2.11 7.08,3.28" fill="#f6ee10" stroke="#c9a400" stroke-width=".5"/><circle cx="11.5" cy="9.5" r="1.6" fill="#e01010"/></svg>
<svg class="a" style="left:50px;top:76px;overflow:visible" width="18" height="18" viewBox="0 0 18 18"><path d="M4 15.500L15.500 3" stroke="#111" stroke-width="1.300"/><circle cx="4" cy="15.5" r="1.5" fill="#e01010"/><circle cx="15.5" cy="3" r="1.5" fill="#e01010"/><polygon points="6.00,0.90 6.88,3.38 9.25,2.25 8.12,4.62 10.60,5.50 8.12,6.38 9.25,8.75 6.88,7.62 6.00,10.10 5.12,7.62 2.75,8.75 3.88,6.38 1.40,5.50 3.88,4.62 2.75,2.25 5.12,3.38" fill="#f6ee10" stroke="#c9a400" stroke-width=".5"/></svg>
<svg class="a" style="left:76px;top:76px;overflow:visible" width="18" height="18" viewBox="0 0 18 18"><path d="M3 16L16.500 2.500" stroke="#6a8ac8" stroke-width="3.200"/><path d="M3 16L16.500 2.500" stroke="#b8ccf0" stroke-width="1.600"/><circle cx="3" cy="16" r="1.5" fill="#e01010"/><circle cx="16.5" cy="2.5" r="1.5" fill="#e01010"/><polygon points="5.50,0.90 6.38,3.38 8.75,2.25 7.62,4.62 10.10,5.50 7.62,6.38 8.75,8.75 6.38,7.62 5.50,10.10 4.62,7.62 2.25,8.75 3.38,6.38 0.90,5.50 3.38,4.62 2.25,2.25 4.62,3.38" fill="#f6ee10" stroke="#c9a400" stroke-width=".5"/><path d="M13.500 12h5M13.500 17.500h5M16 12v5.500" stroke="#7a9ad8" stroke-width="1.300"/></svg>
<svg class="a" style="left:114px;top:76px;overflow:visible" width="18" height="18" viewBox="0 0 18 18"><path d="M6 3h9v8.500l-6.500 5.500M6 3v6.500" fill="none" stroke="#111" stroke-width="1.300"/><polygon points="3.50,1.60 4.34,3.97 6.61,2.89 5.53,5.16 7.90,6.00 5.53,6.84 6.61,9.11 4.34,8.03 3.50,10.40 2.66,8.03 0.39,9.11 1.47,6.84 -0.90,6.00 1.47,5.16 0.39,2.89 2.66,3.97" fill="#f6ee10" stroke="#c9a400" stroke-width=".5"/><circle cx="6" cy="3" r="1.5" fill="#e01010"/><circle cx="15" cy="3" r="1.5" fill="#e01010"/><circle cx="15" cy="11.5" r="1.5" fill="#e01010"/><circle cx="8.5" cy="17" r="1.5" fill="#e01010"/><circle cx="6" cy="9.5" r="1.5" fill="#e01010"/></svg>
<svg class="a" style="left:158px;top:76px;overflow:visible" width="18" height="18" viewBox="0 0 18 18"><polygon points="6.00,-0.10 6.88,2.38 9.25,1.25 8.12,3.62 10.60,4.50 8.12,5.38 9.25,7.75 6.88,6.62 6.00,9.10 5.12,6.62 2.75,7.75 3.88,5.38 1.40,4.50 3.88,3.62 2.75,1.25 5.12,2.38" fill="#f6ee10" stroke="#c9a400" stroke-width=".5"/><circle cx="10" cy="3.5" r="1.4" fill="#e01010"/><path d="M10 9.5 l-4.5 7 h9.0 z" fill="#28b058" stroke="#107030" stroke-width=".5"/><ellipse cx="10" cy="16.5" rx="4.5" ry="1.300" fill="#189040"/><circle cx="10" cy="9.5" r="2.4" fill="#0c7830"/></svg>
<svg class="a" style="left:185px;top:76px;overflow:visible" width="18" height="18" viewBox="0 0 18 18"><polygon points="6.00,-0.10 6.88,2.38 9.25,1.25 8.12,3.62 10.60,4.50 8.12,5.38 9.25,7.75 6.88,6.62 6.00,9.10 5.12,6.62 2.75,7.75 3.88,5.38 1.40,4.50 3.88,3.62 2.75,1.25 5.12,2.38" fill="#f6ee10" stroke="#c9a400" stroke-width=".5"/><path d="M2 9.500h14" stroke="#111" stroke-width="1.300"/><circle cx="2" cy="9.5" r="1.3" fill="#e01010"/><circle cx="16" cy="9.5" r="1.3" fill="#e01010"/><path d="M5 12 l-3.2 4.5 h6.4 z" fill="#28b058" stroke="#107030" stroke-width=".5"/><ellipse cx="5" cy="16.5" rx="3.2" ry="1.300" fill="#189040"/><circle cx="5" cy="12" r="1.6" fill="#0c7830"/><path d="M12.5 12 l-3.2 4.5 h6.4 z" fill="#28b058" stroke="#107030" stroke-width=".5"/><ellipse cx="12.5" cy="16.5" rx="3.2" ry="1.300" fill="#189040"/><circle cx="12.5" cy="12" r="1.6" fill="#0c7830"/></svg>
<svg class="a" style="left:211px;top:76px;overflow:visible" width="18" height="18" viewBox="0 0 18 18"><polygon points="6.00,-0.10 6.88,2.38 9.25,1.25 8.12,3.62 10.60,4.50 8.12,5.38 9.25,7.75 6.88,6.62 6.00,9.10 5.12,6.62 2.75,7.75 3.88,5.38 1.40,4.50 3.88,3.62 2.75,1.25 5.12,2.38" fill="#f6ee10" stroke="#c9a400" stroke-width=".5"/><path d="M2 9.500 l3 -2 h12 l-3 3z" fill="#8ab0e0" stroke="#4a70b0" stroke-width=".6"/><path d="M4 11v5M8 11v5M12 11v5M15 10v5M2.500 13.500h13M3 16.500h3M7 16.500h3M11 16.500h3" stroke="#28b058" stroke-width="1.200"/></svg>
<svg class="a" style="left:246px;top:76px;overflow:visible" width="18" height="18" viewBox="0 0 18 18"><rect x="5" y="8" width="11" height="8" fill="#8fb4e0" stroke="#4a70b0" stroke-width=".8"/><polygon points="6.00,0.20 6.92,2.78 9.39,1.61 8.22,4.08 10.80,5.00 8.22,5.92 9.39,8.39 6.92,7.22 6.00,9.80 5.08,7.22 2.61,8.39 3.78,5.92 1.20,5.00 3.78,4.08 2.61,1.61 5.08,2.78" fill="#f6ee10" stroke="#c9a400" stroke-width=".5"/><circle cx="5" cy="8.5" r="1.5" fill="#e01010"/><circle cx="16" cy="16" r="1.5" fill="#e01010"/></svg>
<svg class="a" style="left:284px;top:76px;overflow:visible" width="18" height="18" viewBox="0 0 18 18"><path d="M3 9 q5 -7 12 0 l1 3 l-4 4 q-3 -2 -6 0 z" fill="#8fb4e0" stroke="#4a70b0" stroke-width=".8"/><polygon points="6.50,-0.10 7.38,2.38 9.75,1.25 8.62,3.62 11.10,4.50 8.62,5.38 9.75,7.75 7.38,6.62 6.50,9.10 5.62,6.62 3.25,7.75 4.38,5.38 1.90,4.50 4.38,3.62 3.25,1.25 5.62,2.38" fill="#f6ee10" stroke="#c9a400" stroke-width=".5"/><circle cx="4" cy="3" r="1.5" fill="#e01010"/><circle cx="6.5" cy="9" r="1.5" fill="#e01010"/><circle cx="9.5" cy="12.5" r="1.5" fill="#e01010"/><circle cx="17" cy="10" r="1.5" fill="#e01010"/></svg>
<svg class="a" style="left:321px;top:76px;overflow:visible" width="18" height="18" viewBox="0 0 18 18"><rect x="3.500" y="3.500" width="13" height="13" fill="#8fb4e0" stroke="#4a70b0" stroke-width=".8"/><rect x="6.500" y="6.500" width="7" height="7" fill="#f3f3f3" stroke="#4a70b0" stroke-width=".6"/><polygon points="4.50,-0.90 5.34,1.47 7.61,0.39 6.53,2.66 8.90,3.50 6.53,4.34 7.61,6.61 5.34,5.53 4.50,7.90 3.66,5.53 1.39,6.61 2.47,4.34 0.10,3.50 2.47,2.66 1.39,0.39 3.66,1.47" fill="#f6ee10" stroke="#c9a400" stroke-width=".5"/><circle cx="5.5" cy="5.2" r="1.5" fill="#e01010"/><circle cx="14.8" cy="5.2" r="1.5" fill="#e01010"/><circle cx="5.5" cy="14.8" r="1.5" fill="#e01010"/><circle cx="14.8" cy="14.8" r="1.5" fill="#e01010"/></svg>
<svg class="a" style="left:359px;top:76px;overflow:visible" width="18" height="18" viewBox="0 0 18 18"><path d="M2 8 l5 -2 l4 3 v7 l-4 2 l-5 -3z" fill="#8fb4e0" stroke="#4a70b0" stroke-width=".7"/><path d="M11 9 l6 -7.500 v9.500 l-6 5z" fill="#7aa0d8" stroke="#3a60a0" stroke-width=".7"/><polygon points="6.00,-0.10 6.88,2.38 9.25,1.25 8.12,3.62 10.60,4.50 8.12,5.38 9.25,7.75 6.88,6.62 6.00,9.10 5.12,6.62 2.75,7.75 3.88,5.38 1.40,4.50 3.88,3.62 2.75,1.25 5.12,2.38" fill="#f6ee10" stroke="#c9a400" stroke-width=".5"/><circle cx="2.5" cy="14" r="1.5" fill="#e01010"/><circle cx="10" cy="16.5" r="1.5" fill="#e01010"/><circle cx="16.5" cy="10" r="1.5" fill="#e01010"/></svg>
<svg class="a" style="left:397px;top:76px;overflow:visible" width="18" height="18" viewBox="0 0 18 18"><path d="M1.500 7.500 l3 -3 h12 v9 l-3 3 h-12z" fill="#a8d0f8" stroke="#4a70b0" stroke-width=".7"/><path d="M13.500 7.500 l3 -3 v9 l-3 3z" fill="#4a68a8"/><path d="M1.500 7.500h12v9" fill="none" stroke="#4a70b0" stroke-width=".7"/><polygon points="3.50,0.30 4.30,2.56 6.47,1.53 5.44,3.70 7.70,4.50 5.44,5.30 6.47,7.47 4.30,6.44 3.50,8.70 2.70,6.44 0.53,7.47 1.56,5.30 -0.70,4.50 1.56,3.70 0.53,1.53 2.70,2.56" fill="#f6ee10" stroke="#c9a400" stroke-width=".5"/><rect x="7.5" y="1" width="9.5" height="7" fill="#f2f2f2" stroke="#555" stroke-width=".8"/><rect x="7.9" y="1.4" width="8.7" height="2" fill="#2a3ea8"/></svg>
<svg class="a" style="left:427px;top:76px;overflow:visible" width="18" height="18" viewBox="0 0 18 18"><polygon points="6.00,0.60 6.84,2.97 9.11,1.89 8.03,4.16 10.40,5.00 8.03,5.84 9.11,8.11 6.84,7.03 6.00,9.40 5.16,7.03 2.89,8.11 3.97,5.84 1.60,5.00 3.97,4.16 2.89,1.89 5.16,2.97" fill="#d8d8d8" stroke="#aaa" stroke-width=".5"/><rect x="9" y="1.500" width="3" height="15" rx="1.500" fill="#b8b8b8" stroke="#999" stroke-width=".5"/><path d="M10.500 3v12" stroke="#e8e8e8" stroke-width=".8"/></svg>
<svg class="a" style="left:472px;top:76px;overflow:visible" width="18" height="18" viewBox="0 0 18 18"><polygon points="6.50,1.20 7.42,3.78 9.89,2.61 8.72,5.08 11.30,6.00 8.72,6.92 9.89,9.39 7.42,8.22 6.50,10.80 5.58,8.22 3.11,9.39 4.28,6.92 1.70,6.00 4.28,5.08 3.11,2.61 5.58,3.78" fill="#f6ee10" stroke="#c9a400" stroke-width=".5"/><rect x="9.0" y="2" width="2" height="9" fill="#9fc0e8" stroke="#4a78b8" stroke-width=".4"/><path d="M7.2 10.5 L12.8 10.5 L10 14Z" fill="#4a78b8"/><circle cx="10" cy="16" r="1.5" fill="#e01010"/></svg>
<svg class="a" style="left:499px;top:76px;overflow:visible" width="18" height="18" viewBox="0 0 18 18"><path d="M3.500 4.500h11" stroke="#4a78b8" stroke-width="1.200"/><rect x="3.2" y="4.5" width="1.6" height="6.0" fill="#9fc0e8" stroke="#4a78b8" stroke-width=".4"/><path d="M1.6 10.0 L6.4 10.0 L4 13.5Z" fill="#4a78b8"/><rect x="8.2" y="4.5" width="1.6" height="6.0" fill="#9fc0e8" stroke="#4a78b8" stroke-width=".4"/><path d="M6.6 10.0 L11.4 10.0 L9 13.5Z" fill="#4a78b8"/><rect x="13.2" y="4.5" width="1.6" height="6.0" fill="#9fc0e8" stroke="#4a78b8" stroke-width=".4"/><path d="M11.6 10.0 L16.4 10.0 L14 13.5Z" fill="#4a78b8"/><polygon points="5.50,0.90 6.38,3.38 8.75,2.25 7.62,4.62 10.10,5.50 7.62,6.38 8.75,8.75 6.38,7.62 5.50,10.10 4.62,7.62 2.25,8.75 3.38,6.38 0.90,5.50 3.38,4.62 2.25,2.25 4.62,3.38" fill="#f6ee10" stroke="#c9a400" stroke-width=".5"/><path d="M2 15.800h14" stroke="#111" stroke-width="1.400"/><circle cx="2" cy="15.8" r="1.4" fill="#e01010"/><circle cx="16" cy="15.8" r="1.4" fill="#e01010"/></svg>
<svg class="a" style="left:525px;top:76px;overflow:visible" width="18" height="18" viewBox="0 0 18 18"><path d="M3.500 4.500h11" stroke="#aaa" stroke-width="1.200"/><rect x="3.2" y="4.5" width="1.6" height="6.0" fill="#d8d8d8" stroke="#aaa" stroke-width=".4"/><path d="M1.6 10.0 L6.4 10.0 L4 13.5Z" fill="#aaa"/><rect x="8.2" y="4.5" width="1.6" height="6.0" fill="#d8d8d8" stroke="#aaa" stroke-width=".4"/><path d="M6.6 10.0 L11.4 10.0 L9 13.5Z" fill="#aaa"/><rect x="13.2" y="4.5" width="1.6" height="6.0" fill="#d8d8d8" stroke="#aaa" stroke-width=".4"/><path d="M11.6 10.0 L16.4 10.0 L14 13.5Z" fill="#aaa"/><polygon points="5.50,1.10 6.34,3.47 8.61,2.39 7.53,4.66 9.90,5.50 7.53,6.34 8.61,8.61 6.34,7.53 5.50,9.90 4.66,7.53 2.39,8.61 3.47,6.34 1.10,5.50 3.47,4.66 2.39,2.39 4.66,3.47" fill="#d8d8d8" stroke="#aaa" stroke-width=".5"/><rect x="1.500" y="14.500" width="15" height="2.600" rx="1.300" fill="#c4c4c4" stroke="#999" stroke-width=".5"/></svg>
<svg class="a" style="left:552px;top:76px;overflow:visible" width="18" height="18" viewBox="0 0 18 18"><path d="M2 15 l4 -2.500 h10 l-4 3.500 z" fill="#a8c8f0" stroke="#4a70b0" stroke-width=".6"/><path d="M3.500 4.500h11" stroke="#4a78b8" stroke-width="1.200"/><rect x="3.2" y="4.5" width="1.6" height="6.0" fill="#9fc0e8" stroke="#4a78b8" stroke-width=".4"/><path d="M1.6 10.0 L6.4 10.0 L4 13.5Z" fill="#4a78b8"/><rect x="8.2" y="4.5" width="1.6" height="6.0" fill="#9fc0e8" stroke="#4a78b8" stroke-width=".4"/><path d="M6.6 10.0 L11.4 10.0 L9 13.5Z" fill="#4a78b8"/><rect x="13.2" y="4.5" width="1.6" height="6.0" fill="#9fc0e8" stroke="#4a78b8" stroke-width=".4"/><path d="M11.6 10.0 L16.4 10.0 L14 13.5Z" fill="#4a78b8"/><path d="M6 3h10v8M6 3l-2.500 1.500M16 11l-3 2" fill="none" stroke="#4a78b8" stroke-width=".8"/><polygon points="5.00,0.60 5.84,2.97 8.11,1.89 7.03,4.16 9.40,5.00 7.03,5.84 8.11,8.11 5.84,7.03 5.00,9.40 4.16,7.03 1.89,8.11 2.97,5.84 0.60,5.00 2.97,4.16 1.89,1.89 4.16,2.97" fill="#f6ee10" stroke="#c9a400" stroke-width=".5"/><circle cx="2" cy="15" r="1.1" fill="#e01010"/><circle cx="12" cy="16.5" r="1.1" fill="#e01010"/><circle cx="16" cy="12.5" r="1.1" fill="#e01010"/><circle cx="8.5" cy="14.5" r="1.1" fill="#e01010"/></svg>
<svg class="a" style="left:578px;top:76px;overflow:visible" width="18" height="18" viewBox="0 0 18 18"><polygon points="5.00,0.30 5.80,2.56 7.97,1.53 6.94,3.70 9.20,4.50 6.94,5.30 7.97,7.47 5.80,6.44 5.00,8.70 4.20,6.44 2.03,7.47 3.06,5.30 0.80,4.50 3.06,3.70 2.03,1.53 4.20,2.56" fill="#d8d8d8" stroke="#aaa" stroke-width=".5"/><path d="M6 2 q8 3 8 14 M9 2 q5 4 5 14 M6 2h5" fill="none" stroke="#999" stroke-width="1"/><path d="M7 5l6 4M8 9l6 3" stroke="#aaa" stroke-width=".7"/><path d="M12.500 12.500h5M12.500 17.500h5M15 12.500v5" stroke="#999" stroke-width="1.300"/></svg>
<svg class="a" style="left:616px;top:76px;overflow:visible" width="18" height="18" viewBox="0 0 18 18"><path d="M1 15.500 l5 -2.500 h11 l-5 4 z" fill="#a8c8f0" stroke="#4a70b0" stroke-width=".6"/><path d="M6 3.500h9" stroke="#4a78b8" stroke-width="1.200"/><rect x="5.6" y="3.5" width="1.8" height="6.5" fill="#9fc0e8" stroke="#4a78b8" stroke-width=".4"/><path d="M4.0 9.5 L9.0 9.5 L6.5 13Z" fill="#4a78b8"/><rect x="9.6" y="3.5" width="1.8" height="6.5" fill="#9fc0e8" stroke="#4a78b8" stroke-width=".4"/><path d="M8.0 9.5 L13.0 9.5 L10.5 13Z" fill="#4a78b8"/><rect x="13.6" y="3.5" width="1.8" height="6.5" fill="#9fc0e8" stroke="#4a78b8" stroke-width=".4"/><path d="M12.0 9.5 L17.0 9.5 L14.5 13Z" fill="#4a78b8"/><polygon points="5.00,0.10 5.84,2.47 8.11,1.39 7.03,3.66 9.40,4.50 7.03,5.34 8.11,7.61 5.84,6.53 5.00,8.90 4.16,6.53 1.89,7.61 2.97,5.34 0.60,4.50 2.97,3.66 1.89,1.39 4.16,2.47" fill="#f6ee10" stroke="#c9a400" stroke-width=".5"/><circle cx="6" cy="14.5" r="1.1" fill="#e01010"/><circle cx="9" cy="15.5" r="1.1" fill="#e01010"/><circle cx="12" cy="14.5" r="1.1" fill="#e01010"/><circle cx="11" cy="16.5" r="1.1" fill="#e01010"/></svg>
<svg class="a" style="left:666px;top:76px;overflow:visible" width="18" height="18" viewBox="0 0 18 18"><path d="M0.500 6 h13 l-5 5.500 v6 l-3 -1.500 v-4.500z" fill="#5a8ad8"/><path d="M5.500 11.500h3v6l-3 -1.500z" fill="#8ab0f0"/><rect x="8" y="1" width="9.5" height="7" fill="#f2f2f2" stroke="#555" stroke-width=".8"/><rect x="8.4" y="1.4" width="8.7" height="2" fill="#2a3ea8"/></svg>
<svg class="a" style="left:698px;top:76px;overflow:visible" width="18" height="18" viewBox="0 0 18 18"><path d="M2.500 2v14.500h15" fill="none" stroke="#333" stroke-width="1"/><path d="M2.500 1l-1.500 2.500h3z M18 16.500l-2.500 -1.500v3z" fill="#333"/><path d="M4 15 L8 9 L10 11 L14 6" fill="none" stroke="#7ab0f0" stroke-width="1"/><rect x="8.5" y="0.5" width="9" height="7" fill="#f2f2f2" stroke="#555" stroke-width=".8"/><rect x="8.9" y="0.9" width="8.2" height="2" fill="#2a3ea8"/></svg>
<svg class="a" style="left:725px;top:76px;overflow:visible" width="18" height="18" viewBox="0 0 18 18"><path d="M2 10 q-1 -5 2.500 -7 M16 10 q1 -5 -2.500 -7 M4.500 5.500 q4.500 3 9 0" fill="none" stroke="#666" stroke-width=".8"/><path d="M4.500 15.500v-12h9v12" fill="none" stroke="#222" stroke-width="2"/><circle cx="4.5" cy="3.5" r="1.3" fill="#e01010"/><circle cx="13.5" cy="3.5" r="1.3" fill="#e01010"/><circle cx="4.5" cy="15.5" r="1.3" fill="#e01010"/><circle cx="13.5" cy="15.5" r="1.3" fill="#e01010"/></svg>
<svg class="a" style="left:751px;top:76px;overflow:visible" width="18" height="18" viewBox="0 0 18 18"><rect x="0.500" y="2" width="17" height="14" fill="#8a8a8a"/><rect x="3.500" y="4.500" width="11" height="9" fill="#f0f0f0"/><path d="M1 3.500h2M1 6.500h2M1 9.500h2M1 12.500h2M15 3.500h2M15 6.500h2M15 9.500h2M15 12.500h2M4 3h10M4 15h10" stroke="#f0f0f0" stroke-width="1.300" stroke-dasharray="1.500 1"/><path d="M7 5.500v7l5.500 -3.500z" fill="#777"/></svg>
<svg class="a" style="left:784px;top:76px;overflow:visible" width="18" height="18" viewBox="0 0 18 18"><path d="M1 9 V3 Q3 17 9 16.500 Q15 17 17 3 V9 Z" fill="#d0d0d0"/><path d="M0.500 9h17" stroke="#999" stroke-width=".9"/><path d="M1 9 V3 Q3 17 9 16.500 Q15 17 17 3 V9" fill="none" stroke="#8a8a8a" stroke-width="1"/></svg>
<svg class="a" style="left:810px;top:76px;overflow:visible" width="18" height="18" viewBox="0 0 18 18"><defs><radialGradient id="rbw" cx=".75" cy="1" r="1"><stop offset="0" stop-color="#e01010"/><stop offset=".2" stop-color="#f08010"/><stop offset=".35" stop-color="#e8e010"/><stop offset=".5" stop-color="#30c830"/><stop offset=".7" stop-color="#18b8d8"/><stop offset="1" stop-color="#1830c8"/></radialGradient></defs><path d="M1 9 L8 4 L17.500 6.500 L14.500 15 L6 13Z" fill="url(#rbw)"/></svg>
<svg class="a" style="left:836px;top:76px;overflow:visible" width="18" height="18" viewBox="0 0 18 18"><path d="M1.500 4.500 l3 -2.500 h12 v10.500 l-3 3 h-12z" fill="#b0b0b0" stroke="#888" stroke-width=".6"/><path d="M1.500 4.500h12v11M13.500 4.500l3 -2.500" fill="none" stroke="#8a8a8a" stroke-width=".6"/><circle cx="7.500" cy="10" r="3" fill="#e4e4e4" stroke="#999" stroke-width=".6"/><circle cx="7.500" cy="10" r="1.100" fill="#aaa"/><ellipse cx="15" cy="8.500" rx="1" ry="2.600" fill="#ddd"/></svg>
<svg class="a" style="left:862px;top:76px;overflow:visible" width="18" height="18" viewBox="0 0 18 18"><path d="M6 3 l-4.500 6 h9z" fill="#28b058" stroke="#107030" stroke-width=".5"/><circle cx="6" cy="3" r="2" fill="#0c7830"/><path d="M6 17.500v-4.500h-2l2.500 -3l2.500 3h-2v4.500z" fill="#30d050" stroke="#108030" stroke-width=".6"/><path d="M17.500 3h-4v-2l-3.500 2.500l3.500 2.500v-2h4z" fill="#30d050" stroke="#108030" stroke-width=".6"/></svg>
<svg class="a" style="left:888px;top:76px;overflow:visible" width="18" height="18" viewBox="0 0 18 18"><path d="M1 14.500 L17 4 L9 15 L7 13.500Z" fill="#b4b4b4"/></svg>
<svg class="a" style="left:920px;top:76px;overflow:visible" width="18" height="18" viewBox="0 0 18 18"><path d="M2 5h14" stroke="#888" stroke-width="1.300"/><circle cx="2.500" cy="5" r="1.300" fill="#888"/><circle cx="15.500" cy="5" r="1.300" fill="#888"/><path d="M1 13 h16" stroke="#777" stroke-width="1"/><path d="M1 13 q4.0 -5 8.0 0 q4.0 5 8.0 0" fill="none" stroke="#777" stroke-width="1.1"/></svg>
<svg class="a" style="left:946px;top:76px;overflow:visible" width="18" height="18" viewBox="0 0 18 18"><rect x="2" y="3.500" width="14" height="3" rx="1.500" fill="#c8c8c8" stroke="#999" stroke-width=".5"/><circle cx="3" cy="5" r="1.300" fill="#888"/><circle cx="15" cy="5" r="1.300" fill="#888"/><path d="M1 13 h16" stroke="#777" stroke-width="1"/><path d="M1 13 q4.0 -5 8.0 0 q4.0 5 8.0 0" fill="none" stroke="#777" stroke-width="1.1"/></svg>
<svg class="a" style="left:972px;top:76px;overflow:visible" width="18" height="18" viewBox="0 0 18 18"><rect x="2" y="3.500" width="14" height="3" rx="1.500" fill="#c8c8c8" stroke="#999" stroke-width=".5"/><circle cx="3.500" cy="5" r="1.300" fill="#888"/><circle cx="9" cy="5" r="1.300" fill="#888"/><circle cx="14.500" cy="5" r="1.300" fill="#888"/><path d="M1 13 h16" stroke="#777" stroke-width="1"/><path d="M1 13 q4.0 -5 8.0 0 q4.0 5 8.0 0" fill="none" stroke="#777" stroke-width="1.1"/></svg>
<svg class="a" style="left:998px;top:76px;overflow:visible" width="18" height="18" viewBox="0 0 18 18"><path d="M2 2.500h14" stroke="#888" stroke-width="1.200"/><circle cx="2.500" cy="2.500" r="1.200" fill="#888"/><circle cx="15.500" cy="2.500" r="1.200" fill="#888"/><path d="M5 4l-3 5h6z M13 4l-3 5h6z" fill="#b0b0b0"/><circle cx="5" cy="4.500" r="1.500" fill="#888"/><circle cx="13" cy="4.500" r="1.500" fill="#888"/><path d="M1 14 h16" stroke="#777" stroke-width="1"/><path d="M1 14 q4.0 -5 8.0 0 q4.0 5 8.0 0" fill="none" stroke="#777" stroke-width="1.1"/></svg>
<svg class="a" style="left:1024px;top:76px;overflow:visible" width="18" height="18" viewBox="0 0 18 18"><path d="M7 1h5v4h-5z" fill="#c8c8c8"/><path d="M1 6.500 q8 -2 16 1 M1 8.500 q8 -1 16 .5" stroke="#b0b0b0" stroke-width="1.500" fill="none"/><path d="M1 14 h16" stroke="#777" stroke-width="1"/><path d="M1 14 q4.0 -5 8.0 0 q4.0 5 8.0 0" fill="none" stroke="#777" stroke-width="1.1"/></svg>
<svg class="a" style="left:1050px;top:76px;overflow:visible" width="18" height="18" viewBox="0 0 18 18"><path d="M1 11 L17 2 L8 11.500Z" fill="#b4b4b4"/><path d="M1 14.5 h16" stroke="#777" stroke-width="1"/><path d="M1 14.5 q4.0 -5 8.0 0 q4.0 5 8.0 0" fill="none" stroke="#777" stroke-width="1.1"/></svg>
<svg class="a" style="left:1076px;top:76px;overflow:visible" width="18" height="18" viewBox="0 0 18 18"><rect x="8" y="1" width="10" height="6.5" fill="#f2f2f2" stroke="#555" stroke-width=".8"/><rect x="8.4" y="1.4" width="9.2" height="2" fill="#2a3ea8"/><polygon points="5.00,0.90 5.88,3.38 8.25,2.25 7.12,4.62 9.60,5.50 7.12,6.38 8.25,8.75 5.88,7.62 5.00,10.10 4.12,7.62 1.75,8.75 2.88,6.38 0.40,5.50 2.88,4.62 1.75,2.25 4.12,3.38" fill="#f6ee10" stroke="#c9a400" stroke-width=".5"/><path d="M1 17 L16 8.500 L12 15Z" fill="#6a80e8"/><path d="M1 17 L16 8.500" stroke="#333" stroke-width=".8"/><path d="M4 15.300 L16 8.500 L13 13.500Z" fill="#98b0f8"/></svg>
<svg class="a" style="left:1102px;top:76px;overflow:visible" width="18" height="18" viewBox="0 0 18 18"><path d="M9 2v11" stroke="#f06010" stroke-width="1.200"/><circle cx="9" cy="14" r="2.600" fill="#e010d0"/><circle cx="8.300" cy="13.300" r=".9" fill="#f890f0"/></svg>
<svg class="a" style="left:1136px;top:76px;overflow:visible" width="18" height="18" viewBox="0 0 18 18"><rect x="1.500" y="2" width="14" height="15" fill="#fff" stroke="#aaa" stroke-width=".8"/><path d="M1.500 2 L16 17 h-3.500 L1.500 6.500z" fill="#d81818"/><path d="M1.500 6.500 L12.500 17 h-3.500 L1.500 10.500z" fill="#f0e010"/><path d="M1.500 10.500 L9 17 h-3.500 L1.500 13.500z" fill="#20c030"/><path d="M1.500 13.500 L5.500 17 h-4z" fill="#1830d0"/><path d="M9.500 10 l1 -3 l5.500 -5.500 l2.300 2.200 l-5.700 5.500z" fill="#f4c64a" stroke="#b07a2a" stroke-width=".6"/><path d="M16 1.500 l.8 -.8 l2.300 2.200 l-.8 .8z" fill="#f0a0c0"/></svg>
<svg class="a" style="left:1184px;top:76px;overflow:visible" width="18" height="18" viewBox="0 0 18 18"><rect x="1.0" y="3.0" width="1.600" height="1.600" fill="#777"/><rect x="1.0" y="6.2" width="1.600" height="1.600" fill="#777"/><rect x="1.0" y="9.4" width="1.600" height="1.600" fill="#777"/><rect x="1.0" y="12.600000000000001" width="1.600" height="1.600" fill="#777"/><rect x="1.0" y="15.8" width="1.600" height="1.600" fill="#777"/><rect x="4.2" y="3.0" width="1.600" height="1.600" fill="#777"/><rect x="4.2" y="6.2" width="1.600" height="1.600" fill="#777"/><rect x="4.2" y="9.4" width="1.600" height="1.600" fill="#777"/><rect x="4.2" y="12.600000000000001" width="1.600" height="1.600" fill="#777"/><rect x="4.2" y="15.8" width="1.600" height="1.600" fill="#777"/><rect x="7.4" y="3.0" width="1.600" height="1.600" fill="#777"/><rect x="7.4" y="6.2" width="1.600" height="1.600" fill="#777"/><rect x="7.4" y="9.4" width="1.600" height="1.600" fill="#777"/><rect x="7.4" y="12.600000000000001" width="1.600" height="1.600" fill="#777"/><rect x="7.4" y="15.8" width="1.600" height="1.600" fill="#777"/><rect x="10.600000000000001" y="3.0" width="1.600" height="1.600" fill="#777"/><rect x="10.600000000000001" y="6.2" width="1.600" height="1.600" fill="#777"/><rect x="10.600000000000001" y="9.4" width="1.600" height="1.600" fill="#777"/><rect x="10.600000000000001" y="12.600000000000001" width="1.600" height="1.600" fill="#777"/><rect x="10.600000000000001" y="15.8" width="1.600" height="1.600" fill="#777"/><rect x="13.8" y="3.0" width="1.600" height="1.600" fill="#777"/><rect x="13.8" y="6.2" width="1.600" height="1.600" fill="#777"/><rect x="13.8" y="9.4" width="1.600" height="1.600" fill="#777"/><rect x="13.8" y="12.600000000000001" width="1.600" height="1.600" fill="#777"/><rect x="13.8" y="15.8" width="1.600" height="1.600" fill="#777"/><rect x="8" y="0.5" width="9.5" height="7" fill="#f2f2f2" stroke="#555" stroke-width=".8"/><rect x="8.4" y="0.9" width="8.7" height="2" fill="#2a3ea8"/></svg>
<svg class="a" style="left:1210px;top:76px;overflow:visible" width="18" height="18" viewBox="0 0 18 18"><rect x="1.5" y="2.5" width="1.600" height="1.600" fill="#777"/><rect x="1.5" y="5.7" width="1.600" height="1.600" fill="#777"/><rect x="1.5" y="8.9" width="1.600" height="1.600" fill="#777"/><rect x="1.5" y="12.100000000000001" width="1.600" height="1.600" fill="#777"/><rect x="1.5" y="15.3" width="1.600" height="1.600" fill="#777"/><rect x="4.7" y="2.5" width="1.600" height="1.600" fill="#777"/><rect x="4.7" y="5.7" width="1.600" height="1.600" fill="#777"/><rect x="4.7" y="8.9" width="1.600" height="1.600" fill="#777"/><rect x="4.7" y="12.100000000000001" width="1.600" height="1.600" fill="#777"/><rect x="4.7" y="15.3" width="1.600" height="1.600" fill="#777"/><rect x="7.9" y="2.5" width="1.600" height="1.600" fill="#777"/><rect x="7.9" y="5.7" width="1.600" height="1.600" fill="#777"/><rect x="7.9" y="8.9" width="1.600" height="1.600" fill="#777"/><rect x="7.9" y="12.100000000000001" width="1.600" height="1.600" fill="#777"/><rect x="7.9" y="15.3" width="1.600" height="1.600" fill="#777"/><rect x="11.100000000000001" y="2.5" width="1.600" height="1.600" fill="#777"/><rect x="11.100000000000001" y="5.7" width="1.600" height="1.600" fill="#777"/><rect x="11.100000000000001" y="8.9" width="1.600" height="1.600" fill="#777"/><rect x="11.100000000000001" y="12.100000000000001" width="1.600" height="1.600" fill="#777"/><rect x="11.100000000000001" y="15.3" width="1.600" height="1.600" fill="#777"/><rect x="14.3" y="2.5" width="1.600" height="1.600" fill="#777"/><rect x="14.3" y="5.7" width="1.600" height="1.600" fill="#777"/><rect x="14.3" y="8.9" width="1.600" height="1.600" fill="#777"/><rect x="14.3" y="12.100000000000001" width="1.600" height="1.600" fill="#777"/><rect x="14.3" y="15.3" width="1.600" height="1.600" fill="#777"/><path d="M9 1v16M1 9.500h16" stroke="#1010a0" stroke-width="1.400"/><circle cx="9" cy="9.500" r="2.600" fill="#f8f8f8" stroke="#1010a0" stroke-width="1.300"/></svg>
<svg class="a" style="left:1237px;top:76px;overflow:visible" width="18" height="18" viewBox="0 0 18 18"><rect x="3.500" y="4.500" width="11" height="10" fill="#9cc0e8" stroke="#4a78b8" stroke-width=".6" opacity=".9"/><path d="M7 16.500 L7 6 L11.500 2 L11.500 12.500Z" fill="#9cc0e8" stroke="#4a78b8" stroke-width=".6"/><path d="M1 12.500 L6 9 L17 9 L12 12.500Z" fill="#e84040" stroke="#4a78b8" stroke-width=".6"/></svg>
<svg class="a" style="left:1263px;top:76px;overflow:visible" width="18" height="18" viewBox="0 0 18 18"><rect x="3.500" y="4.500" width="11" height="10" fill="#9cc0e8" stroke="#4a78b8" stroke-width=".6" opacity=".9"/><path d="M1 12.500 L6 9 L17 9 L12 12.500Z" fill="#9cc0e8" stroke="#4a78b8" stroke-width=".6"/><path d="M7 16.500 L7 6 L11.500 2 L11.500 12.500Z" fill="#e84040" stroke="#4a78b8" stroke-width=".6"/></svg>
<svg class="a" style="left:1289px;top:76px;overflow:visible" width="18" height="18" viewBox="0 0 18 18"><path d="M1 12.500 L6 9 L17 9 L12 12.500Z" fill="#9cc0e8" stroke="#4a78b8" stroke-width=".6"/><rect x="3.500" y="4.500" width="11" height="10" fill="#e84040" stroke="#4a78b8" stroke-width=".6" opacity=".9"/><path d="M7 16.500 L7 6 L11.500 2 L11.500 12.500Z" fill="#9cc0e8" stroke="#4a78b8" stroke-width=".6" opacity=".8"/></svg>
<svg class="a" style="left:1322px;top:76px;overflow:visible" width="18" height="18" viewBox="0 0 18 18"><circle cx="4" cy="4" r="2" fill="none" stroke="#aaa" stroke-width="1"/><path d="M6.500 2.500 l6 5.500 m0 -3v3h-3" fill="none" stroke="#aaa" stroke-width="1"/><circle cx="11" cy="12.500" r="2.200" fill="none" stroke="#aaa" stroke-width="1"/><circle cx="13" cy="14.500" r="2.200" fill="none" stroke="#aaa" stroke-width="1"/></svg>
<svg class="a" style="left:1348px;top:76px;overflow:visible" width="18" height="18" viewBox="0 0 18 18"><path d="M9 1v17" stroke="#999" stroke-width=".9" stroke-dasharray="2.500 1 .8 1"/><path d="M4 12 a6.500 3.500 0 1 1 5 2" fill="none" stroke="#aaa" stroke-width="1.300"/><path d="M1.500 10.500l2 4.500l3.500 -3z" fill="#aaa"/></svg>
<svg class="a" style="left:1374px;top:76px;overflow:visible" width="18" height="18" viewBox="0 0 18 18"><path d="M9 1v17" stroke="#999" stroke-width=".9" stroke-dasharray="2.500 1 .8 1"/><path d="M7.500 3v13h-5.500z M10.500 3v13h5.500z" fill="#f0f0f0" stroke="#aaa" stroke-width="1"/></svg>
<svg class="a" style="left:1400px;top:76px;overflow:visible" width="18" height="18" viewBox="0 0 18 18"><path d="M2.500 2.500l13 13M15.500 2.500l-13 13" stroke="#111" stroke-width="1.300"/><circle cx="9" cy="9" r="2.3" fill="#e84040"/><circle cx="2.5" cy="2.5" r="1.4" fill="#e01010"/><circle cx="15.5" cy="2.5" r="1.4" fill="#e01010"/><circle cx="2.5" cy="15.5" r="1.4" fill="#e01010"/><circle cx="15.5" cy="15.5" r="1.4" fill="#e01010"/></svg>
<svg class="a" style="left:1426px;top:76px;overflow:visible" width="18" height="18" viewBox="0 0 18 18"><path d="M1.500 4 q0 -1.500 1.500 -1.500 h3.500 l1 1.500 h1.500 l1 -1.500 h3l3 3 v10 q0 1 -1 1 h-12.500 q-1 0 -1 -1z" fill="#eee" stroke="#444" stroke-width="1.100"/><path d="M2.500 6h2.500M2.500 8h2M2.500 13h2M2.500 15h2.500M13 6h2.500M14 8h1.500M14 13h1.500M13 15h2.500" stroke="#888" stroke-width=".8"/><circle cx="9" cy="10.500" r="3.300" fill="none" stroke="#444" stroke-width="1.600" stroke-dasharray="1.600 1"/><circle cx="9" cy="10.500" r="2.400" fill="#eee" stroke="#444" stroke-width="1.300"/></svg>
<svg class="a" style="left:192px;top:55px" width="8" height="5"><path d="M0 0h8l-4 4.5z" fill="#111"/></svg>
<svg class="a" style="left:289px;top:55px" width="8" height="5"><path d="M0 0h8l-4 4.5z" fill="#8a8a8a"/></svg>
<svg class="a" style="left:327px;top:55px" width="8" height="5"><path d="M0 0h8l-4 4.5z" fill="#8a8a8a"/></svg>
<svg class="a" style="left:591px;top:55px" width="8" height="5"><path d="M0 0h8l-4 4.5z" fill="#111"/></svg>
<svg class="a" style="left:1021px;top:55px" width="8" height="5"><path d="M0 0h8l-4 4.5z" fill="#111"/></svg>
<svg class="a" style="left:1189px;top:55px" width="8" height="5"><path d="M0 0h8l-4 4.5z" fill="#111"/></svg>
<svg class="a" style="left:1312px;top:55px" width="8" height="5"><path d="M0 0h8l-4 4.5z" fill="#111"/></svg>
<svg class="a" style="left:1550px;top:55px" width="8" height="5"><path d="M0 0h8l-4 4.5z" fill="#111"/></svg>
<svg class="a" style="left:36px;top:83px" width="8" height="5"><path d="M0 0h8l-4 4.5z" fill="#111"/></svg>
<svg class="a" style="left:100px;top:83px" width="8" height="5"><path d="M0 0h8l-4 4.5z" fill="#111"/></svg>
<svg class="a" style="left:138px;top:83px" width="8" height="5"><path d="M0 0h8l-4 4.5z" fill="#111"/></svg>
<svg class="a" style="left:268px;top:83px" width="8" height="5"><path d="M0 0h8l-4 4.5z" fill="#111"/></svg>
<svg class="a" style="left:306px;top:83px" width="8" height="5"><path d="M0 0h8l-4 4.5z" fill="#111"/></svg>
<svg class="a" style="left:344px;top:83px" width="8" height="5"><path d="M0 0h8l-4 4.5z" fill="#111"/></svg>
<svg class="a" style="left:382px;top:83px" width="8" height="5"><path d="M0 0h8l-4 4.5z" fill="#111"/></svg>
<svg class="a" style="left:453px;top:83px" width="8" height="5"><path d="M0 0h8l-4 4.5z" fill="#777"/></svg>
<svg class="a" style="left:602px;top:83px" width="8" height="5"><path d="M0 0h8l-4 4.5z" fill="#777"/></svg>
<svg class="a" style="left:640px;top:83px" width="8" height="5"><path d="M0 0h8l-4 4.5z" fill="#111"/></svg>
<svg class="a" style="left:1159px;top:83px" width="8" height="5"><path d="M0 0h8l-4 4.5z" fill="#111"/></svg>
<div class="sep" style="left:258px;top:48px;height:18px;background:#a6a6a6"></div>
<div class="sep" style="left:341px;top:48px;height:18px;background:#a6a6a6"></div>
<div class="sep" style="left:1255px;top:48px;height:18px;background:#a6a6a6"></div>
<div class="sep" style="left:1441px;top:48px;height:18px;background:#a6a6a6"></div>
<div class="sep" style="left:152px;top:76px;height:18px;background:#a6a6a6"></div>
<div class="sep" style="left:237px;top:76px;height:18px;background:#a6a6a6"></div>
<div class="sep" style="left:422px;top:76px;height:18px;background:#a6a6a6"></div>
<div class="sep" style="left:467px;top:76px;height:18px;background:#a6a6a6"></div>
<div class="sep" style="left:691px;top:76px;height:18px;background:#a6a6a6"></div>
<div class="sep" style="left:777px;top:76px;height:18px;background:#a6a6a6"></div>
<div class="sep" style="left:913px;top:76px;height:18px;background:#a6a6a6"></div>
<div class="sep" style="left:1128px;top:76px;height:18px;background:#a6a6a6"></div>
<div class="sep" style="left:1314px;top:76px;height:18px;background:#a6a6a6"></div>
<svg class="a" style="left:5px;top:48px" width="3" height="18"><path d="M1.5 0v18" stroke="#9a9a9a" stroke-width="2" stroke-dasharray="1.5 2"/></svg>
<svg class="a" style="left:560px;top:48px" width="3" height="18"><path d="M1.5 0v18" stroke="#9a9a9a" stroke-width="2" stroke-dasharray="1.5 2"/></svg>
<svg class="a" style="left:635px;top:48px" width="3" height="18"><path d="M1.5 0v18" stroke="#9a9a9a" stroke-width="2" stroke-dasharray="1.5 2"/></svg>
<svg class="a" style="left:1330px;top:48px" width="3" height="18"><path d="M1.5 0v18" stroke="#9a9a9a" stroke-width="2" stroke-dasharray="1.5 2"/></svg>
<svg class="a" style="left:5px;top:76px" width="3" height="18"><path d="M1.5 0v18" stroke="#9a9a9a" stroke-width="2" stroke-dasharray="1.5 2"/></svg>
<svg class="a" style="left:658px;top:76px" width="3" height="18"><path d="M1.5 0v18" stroke="#9a9a9a" stroke-width="2" stroke-dasharray="1.5 2"/></svg>
<svg class="a" style="left:1176px;top:76px" width="3" height="18"><path d="M1.5 0v18" stroke="#9a9a9a" stroke-width="2" stroke-dasharray="1.5 2"/></svg>
<svg class="a" style="left:0.5px;top:2px;overflow:visible" width="18" height="18" viewBox="0 0 18 18"><path d="M3 8 L10 1 L17.500 6 L13 14 L7 15Z" fill="#5a8ad0" stroke="#3a5a90" stroke-width=".6"/><path d="M5.500 6l8 6M8 3.500l8 5.500M7 9.500l6 -7M10.500 12l6 -7" stroke="#b8d0f0" stroke-width=".6"/><text x="6" y="17" font-size="13" font-weight="bold" font-family="Liberation Sans,sans-serif" fill="#f6cc28" stroke="#6a4a08" stroke-width="1" paint-order="stroke" text-anchor="middle">6</text></svg>
<svg class="a" style="left:0;top:27px" width="16" height="12"><rect x="0" y="0" width="16" height="12" fill="#28308a"/><path d="M0 8.500h16" stroke="#fff" stroke-width="1.200"/><path d="M4.500 0v12" stroke="#fff" stroke-width=".9"/><path d="M0 5 L4.500 1.500 L16 6.500 M4.500 1.500 L11 8" stroke="#c8d0f0" stroke-width=".6" fill="none"/></svg>
<svg class="a" style="left:1221px;top:27px" width="16" height="11"><path d="M0 2.500h6M0 6h6M0 9.500h14" stroke="#909090" stroke-width="1.200"/><circle cx="10.500" cy="3.500" r="2.600" fill="none" stroke="#909090" stroke-width="1.200"/><path d="M12.500 5.500l2.500 2.500" stroke="#909090" stroke-width="1.300"/></svg>
<svg class="a" style="left:12px;top:1135px;overflow:visible" width="18" height="18" viewBox="0 0 18 18"><rect x="5" y="1" width="12" height="10" fill="#f4f4f4" stroke="#666" stroke-width=".8"/><rect x="5" y="1" width="12" height="2.300" fill="#5a8af0"/><path d="M1 5 h5 l1 1.500 h4 v7 h-10z" fill="#f0c830" stroke="#b08a10" stroke-width=".6"/><path d="M7 13 q3 -5 9 -3 l-1 5 q-3 -2 -6 0z" fill="#78a8e8" stroke="#3a60a0" stroke-width=".5"/><circle cx="7" cy="13" r="1.1" fill="#e01010"/><circle cx="16" cy="10" r="1.1" fill="#e01010"/><circle cx="14.5" cy="15.5" r="1.1" fill="#e01010"/></svg>
<svg class="a" style="left:50px;top:1135px;overflow:visible" width="18" height="18" viewBox="0 0 18 18"><path d="M2.500 9.500 q6.500 -7.500 13 0 q-6.500 7.500 -13 0z" fill="#f0f0fa" stroke="#2a2a7a" stroke-width="1.200"/><circle cx="9" cy="9.500" r="2.900" fill="#3a4ab8"/><circle cx="9" cy="9.500" r="1.200" fill="#101040"/></svg>
<svg class="a" style="left:88px;top:1135px;overflow:visible" width="18" height="18" viewBox="0 0 18 18"><rect x="1" y="4" width="11.500" height="10" rx="2" fill="#666"/><path d="M12.500 8 l4.500 -3 v8 l-4.500 -3z" fill="#666"/></svg>
<svg class="a" style="left:127px;top:1135px;overflow:visible" width="18" height="18" viewBox="0 0 18 18"><path d="M1 13.500 L1 10 L9 9Z" fill="#2a4fb0"/><path d="M9 9 L17 8 L17 4.500 Z" fill="#d83a2a"/><path d="M1 10.200 L17 8" stroke="#222" stroke-width="1.100"/></svg>
<svg class="a" style="left:4px;top:1162px;overflow:visible" width="18" height="18" viewBox="0 0 18 18"><path d="M8 11 L8 3" stroke="#888" stroke-width="1"/><rect x="7" y="1" width="9" height="6.5" fill="#f2f2f2" stroke="#555" stroke-width=".8"/><rect x="7.4" y="1.4" width="8.2" height="2" fill="#2a3ea8"/><path d="M8 11 L2 14.500" stroke="#18a030" stroke-width="1.400"/><path d="M0 15.800 l3.800 -.3 l-1.800 -2.800z" fill="#18a030"/><path d="M8 11 L14.500 13.500" stroke="#e04010" stroke-width="1.400"/><path d="M17 14.500 l-3.500 .8 l1.200 -3z" fill="#e04010"/><circle cx="8" cy="11" r="1.500" fill="#f0d020"/></svg>
<svg class="a" style="left:339.5px;top:987px;overflow:visible" width="15" height="16" viewBox="0 0 15 16"><rect x="0.500" y="1.500" width="13" height="13" fill="#909090" stroke="#555" stroke-width="1"/><rect x="1" y="2" width="12" height="2" fill="#3a4aa8"/><path d="M1 6.500h12M1 9h12M1 11.500h12M4.500 4v10.500" stroke="#c8c8c8" stroke-width=".6"/><path d="M3.500 13 L12 5 V13Z" fill="#90e890" stroke="#30a030" stroke-width=".9"/></svg>
<svg class="a" style="left:582.5px;top:987px;overflow:visible" width="15" height="16" viewBox="0 0 15 16"><path d="M2 13 L12.500 2" stroke="#7a9ad8" stroke-width="3"/><path d="M2 13 L12.500 2" stroke="#c8d8f4" stroke-width="1.400"/><circle cx="2" cy="13" r="1.2" fill="#e01010"/><circle cx="12.5" cy="2" r="1.2" fill="#e01010"/><path d="M9.500 10.500h4.500M9.500 14.500h4.500M11.800 10.500v4" stroke="#333" stroke-width="1"/></svg>
<svg class="a" style="left:892px;top:986px;overflow:visible" width="18" height="18" viewBox="0 0 18 18"><rect x="3" y="1.500" width="8" height="5.500" rx="1" fill="#d8d8d8" stroke="#555" stroke-width="1"/><path d="M7 9 q7 1 4.500 8.500" fill="none" stroke="#2a6ab8" stroke-width="1.500"/><path d="M5 9.500 l4.500 -2.500 l.5 5z" fill="#2a6ab8"/></svg>
<svg class="a" style="left:918px;top:986px;overflow:visible" width="18" height="18" viewBox="0 0 18 18"><rect x="8" y="1.500" width="8" height="5.500" rx="1" fill="#d8d8d8" stroke="#555" stroke-width="1"/><path d="M9.500 5 q-7 2 -3 9.500" fill="none" stroke="#2a6ab8" stroke-width="1.500"/><path d="M4 12 l5.500 1 l-3 4z" fill="#2a6ab8"/></svg>
<svg class="a" style="left:950px;top:986px;overflow:visible" width="18" height="18" viewBox="0 0 18 18"><rect x="0.500" y="1.500" width="17" height="15" fill="#d0d0d0" stroke="#8a8a8a" stroke-width="1"/><path d="M0.500 5h17M0.500 8.500h17M0.500 12h17M6 1.500v15M12 1.500v15" stroke="#efefef" stroke-width=".7"/><path d="M1 5.500h16M1 7h16" stroke="#999" stroke-width="1"/><rect x="1" y="14" width="16" height="2.500" fill="#999"/></svg>
<svg class="a" style="left:976px;top:986px;overflow:visible" width="18" height="18" viewBox="0 0 18 18"><rect x="0.500" y="7.500" width="17" height="9.500" fill="#f0f0f0" stroke="#999" stroke-width="1"/><path d="M0.500 10.500h17M0.500 13.500h17M6 10.500v6.500M12 10.500v6.500" stroke="#aaa" stroke-width=".7"/><path d="M4 2l10 3" stroke="#aaa" stroke-width="1"/><circle cx="4" cy="2" r="1.300" fill="#bbb"/><circle cx="14" cy="5" r="1.300" fill="#bbb"/></svg>
<svg class="a" style="left:1002px;top:986px;overflow:visible" width="18" height="18" viewBox="0 0 18 18"><rect x="0.500" y="1.500" width="17" height="15" fill="#d0d0d0" stroke="#8a8a8a" stroke-width="1"/><path d="M0.500 5h17M0.500 8.500h17M0.500 12h17M6 1.500v15M12 1.500v15" stroke="#efefef" stroke-width=".7"/><path d="M9 3.500v11M3.500 9h11" stroke="#9a9a9a" stroke-width="3.600"/></svg>
<svg class="a" style="left:1028px;top:986px;overflow:visible" width="18" height="18" viewBox="0 0 18 18"><rect x="0.500" y="1.500" width="17" height="15" fill="#d0d0d0" stroke="#8a8a8a" stroke-width="1"/><path d="M0.500 5h17M0.500 8.500h17M0.500 12h17M6 1.500v15M12 1.500v15" stroke="#efefef" stroke-width=".7"/><path d="M5 5l8 8M13 5l-8 8" stroke="#9a9a9a" stroke-width="3.400"/></svg>
<svg class="a" style="left:1054px;top:986px;overflow:visible" width="18" height="18" viewBox="0 0 18 18"><rect x="0.500" y="1.500" width="17" height="15" fill="#d0d0d0" stroke="#8a8a8a" stroke-width="1"/><path d="M0.500 5h17M0.500 8.500h17M0.500 12h17M6 1.500v15M12 1.500v15" stroke="#efefef" stroke-width=".7"/><circle cx="9" cy="5.500" r="2.600" fill="#9a9a9a"/><circle cx="9" cy="12.500" r="2.600" fill="#9a9a9a"/></svg>
<svg class="a" style="left:1087px;top:986px;overflow:visible" width="18" height="18" viewBox="0 0 18 18"><rect x="0.500" y="1.500" width="17" height="15" fill="#d8d8d8" stroke="#8a8a8a" stroke-width="1"/><path d="M3 4l12 10M15 4l-12 10" stroke="#777" stroke-width="3"/></svg>
<svg class="a" style="left:1120px;top:986px;overflow:visible" width="18" height="18" viewBox="0 0 18 18"><rect x="1" y="1" width="8" height="4" fill="#fff" stroke="#bbb" stroke-width=".7"/><rect x="1" y="6.500" width="8" height="5" fill="#909090"/><rect x="1" y="12.500" width="8" height="5" fill="#a8a8a8"/><path d="M10 9h3.500a2.800 2.800 0 0 1 0 6h-1.500" fill="none" stroke="#888" stroke-width="1.500"/><path d="M13 12.500l-2.500 2.500l2.500 2.500" fill="none" stroke="#888" stroke-width="1.400"/></svg>
<svg class="a" style="left:1145px;top:986px;overflow:visible" width="18" height="18" viewBox="0 0 18 18"><rect x="1" y="1" width="8" height="4" fill="#fff" stroke="#bbb" stroke-width=".7"/><rect x="1" y="6.500" width="8" height="5" fill="#909090"/><rect x="1" y="13" width="8" height="4" fill="#fff" stroke="#bbb" stroke-width=".7"/><path d="M10.500 5.500l7 7M17.500 5.500l-7 7" stroke="#888" stroke-width="1.600"/></svg>
<svg class="a" style="left:1171px;top:986px;overflow:visible" width="18" height="18" viewBox="0 0 18 18"><path d="M9 2h8v4h-8M9 7.500h8M9 12h8v4h-8" fill="none" stroke="#ccc" stroke-width=".9"/><path d="M3 9h9" stroke="#aaa" stroke-width="2.400"/><path d="M0.500 9l4.500 -4v8z" fill="#aaa"/></svg>
<svg class="a" style="left:1197px;top:986px;overflow:visible" width="18" height="18" viewBox="0 0 18 18"><path d="M9 2h-8v4h8M1 7.500h8M9 12h-8v4h8" fill="none" stroke="#ccc" stroke-width=".9"/><path d="M6 9h8" stroke="#aaa" stroke-width="2.400"/><path d="M17.500 9l-4.500 -4v8z" fill="#aaa"/></svg>
<svg class="a" style="left:1231px;top:986px;overflow:visible" width="18" height="18" viewBox="0 0 18 18"><rect x="1" y="1.500" width="16" height="15.500" fill="#fff" stroke="#444" stroke-width="1.200"/><rect x="1.500" y="2" width="15" height="5.500" fill="#b4b8f0"/><path d="M1.500 4.800h15M6.500 2v5.500M11.500 2v5.500" stroke="#e8e8ff" stroke-width=".6"/></svg>
<svg class="a" style="left:1264px;top:986px;overflow:visible" width="18" height="18" viewBox="0 0 18 18"><rect x="8" y="1" width="9.5" height="7" fill="#f2f2f2" stroke="#555" stroke-width=".8"/><rect x="8.4" y="1.4" width="8.7" height="2" fill="#2a3ea8"/><text x="0" y="16.500" font-size="9.500" font-style="italic" font-weight="bold" font-family="Liberation Serif,serif" fill="#111">ab</text><path d="M11 12.500h5M11 15.500h5" stroke="#444" stroke-width="1.200"/></svg>
<svg class="a" style="left:1291px;top:986px;overflow:visible" width="18" height="18" viewBox="0 0 18 18"><text x="1" y="14" font-size="15" font-style="italic" font-family="Liberation Serif,serif" fill="#777">fx</text></svg>
<svg class="a" style="left:1317px;top:986px;overflow:visible" width="18" height="18" viewBox="0 0 18 18"><text x="0" y="15" font-size="15" font-style="italic" font-family="Liberation Serif,serif" fill="#888">fx</text><path d="M9 1.500l7 7M16 1.500l-7 7" stroke="#8a8a8a" stroke-width="2"/></svg>
<svg class="a" style="left:1342px;top:986px;overflow:visible" width="18" height="18" viewBox="0 0 18 18"><text x="0" y="16" font-size="15" font-style="italic" font-weight="bold" font-family="Liberation Serif,serif" fill="#111">fx</text><ellipse cx="12.5" cy="3.5" rx="4.6" ry="3" fill="#e4e6f8" stroke="#26266e" stroke-width="1"/><circle cx="12.5" cy="3.5" r="2.1" fill="#2a2a98"/><circle cx="12.5" cy="3.5" r=".8" fill="#111"/></svg>
<svg class="a" style="left:1375px;top:986px;overflow:visible" width="18" height="18" viewBox="0 0 18 18"><path d="M5 1.500h9l3 3v12.500h-12z" fill="#fff" stroke="#666" stroke-width="1"/><rect x="0.500" y="3.500" width="7.500" height="8" fill="#2a9a48"/><path d="M2 5.500l4.500 4M6.500 5.500l-4.500 4" stroke="#fff" stroke-width="1.300"/><rect x="8.500" y="5" width="7" height="7" fill="#48b060"/><path d="M8.500 7.300h7M8.500 9.600h7M10.800 5v7M13.200 5v7" stroke="#d8f0d8" stroke-width=".6"/><path d="M8 13.500h6l-3 3z" fill="#2a9a48"/></svg>
<svg class="a" style="left:1408px;top:986px;overflow:visible" width="18" height="18" viewBox="0 0 18 18"><rect x="1" y="7.500" width="16" height="10" fill="#f0f0f0" stroke="#555" stroke-width="1"/><rect x="1.500" y="8" width="15" height="2.500" fill="#8a8a8a"/><path d="M3.500 12.500h2M3.500 15h2" stroke="#555" stroke-width="1.200"/><rect x="7" y="11.500" width="8.500" height="4.500" fill="#9a9a9a"/><path d="M7 13h8.500M7 14.500h8.500" stroke="#ddd" stroke-width=".6"/><path d="M2.500 7 q1 -4 6 -4.500 l5 -1 l1.500 5.500 l-5 1.500 q-4 1 -7.500 -1.500z" fill="#e8c0a0" stroke="#a07858" stroke-width=".6"/><path d="M12.500 1.500 l4 -1 l1.500 6 l-3.500 1z" fill="#3a6ab8"/></svg>
<svg class="a" style="left:1437px;top:986px;overflow:visible" width="18" height="18" viewBox="0 0 18 18"><rect x="1" y="1.500" width="16" height="4.500" fill="#68c868"/><path d="M3 3.500v2.500M6 3.500v2.500M9 3.500v2.500M12 3.500v2.500M15 3.500v2.500" stroke="#2a8a2a" stroke-width=".7"/><text x="0" y="15" font-size="10" font-family="Liberation Sans,sans-serif" fill="#111" letter-spacing="-.6">0,</text><text x="7" y="15" font-size="10" font-family="Liberation Sans,sans-serif" fill="#2a60d0" letter-spacing="-.5">00</text><path d="M7 16.500h10.500" stroke="#2a60d0" stroke-width=".9"/></svg>
<svg class="a" style="left:1470px;top:986px;overflow:visible" width="18" height="18" viewBox="0 0 18 18"><path d="M9.500 1.500 a7 6.500 0 1 1 -4 12 l-4.500 3 l2 -5 a7 6.500 0 0 1 6.500 -10z" fill="#444"/><text x="9.500" y="12.500" font-size="10.500" font-weight="bold" font-family="Liberation Sans,sans-serif" fill="#fff" text-anchor="middle">?</text></svg>
<div class="tog" style="left:1075.5px;top:1160px;width:21px;height:19px"></div>
<div class="tog" style="left:1143.5px;top:1160px;width:21px;height:19px"></div>
<div class="tog" style="left:1167.0px;top:1160px;width:21px;height:19px"></div>
<div class="tog" style="left:1190.5px;top:1160px;width:21px;height:19px"></div>
<div class="tog" style="left:1214.5px;top:1160px;width:21px;height:19px"></div>
<div class="tog" style="left:1263.5px;top:1160px;width:21px;height:19px"></div>
<div class="tog" style="left:1479.5px;top:1160px;width:21px;height:19px"></div>
<div class="tog" style="left:1503.5px;top:1160px;width:21px;height:19px"></div>
<div class="tog" style="left:1527.5px;top:1160px;width:21px;height:19px"></div>
<div class="tog" style="left:1551.5px;top:1160px;width:21px;height:19px"></div>
<div class="tog" style="left:1575.5px;top:1160px;width:21px;height:19px"></div>
<svg class="a" style="left:163px;top:1162px;overflow:visible" width="18" height="18" viewBox="0 0 18 18"><path d="M1 5v-3.500h3.500M1 13v3.500h3.500M17 13v3.500h-3.500" fill="none" stroke="#1838b0" stroke-width="1.400"/><path d="M4 8 l3 -3 h8 v7 l-3 3.500 h-8z" fill="#8aa4c8" stroke="#4a6490" stroke-width=".6"/><path d="M4 8h8v7.500M12 8l3 -3" fill="none" stroke="#c8d8f0" stroke-width=".7"/><rect x="8" y="0.5" width="9.5" height="7" fill="#f2f2f2" stroke="#555" stroke-width=".8"/><rect x="8.4" y="0.9" width="8.7" height="2" fill="#2a3ea8"/><polygon points="4.00,0.90 4.69,2.84 6.55,1.95 5.66,3.81 7.60,4.50 5.66,5.19 6.55,7.05 4.69,6.16 4.00,8.10 3.31,6.16 1.45,7.05 2.34,5.19 0.40,4.50 2.34,3.81 1.45,1.95 3.31,2.84" fill="#f6ee10" stroke="#c9a400" stroke-width=".5"/></svg>
<svg class="a" style="left:187px;top:1162px;overflow:visible" width="18" height="18" viewBox="0 0 18 18"><path d="M5 6 l3 -2.500 h6 v10 l-3 4 h-6z" fill="#8aa4c8" stroke="#4a6490" stroke-width=".6"/><path d="M5 6h6v11.500M11 6l3 -2.500" fill="none" stroke="#c8d8f0" stroke-width=".7"/><path d="M1 6.500l4 -3.500M13 3h4" stroke="#1838b0" stroke-width="1.300" stroke-dasharray="3 1.500"/></svg>
<svg class="a" style="left:211px;top:1162px;overflow:visible" width="18" height="18" viewBox="0 0 18 18"><path d="M2 7 l3 -2.500 h9 v7 l-3 3 h-9z" fill="#8aa4c8" stroke="#4a6490" stroke-width=".6"/><path d="M2 7h9v7.500M11 7l3 -2.500" fill="none" stroke="#c8d8f0" stroke-width=".7"/><path d="M15 1.500v15" stroke="#1838b0" stroke-width="1.300" stroke-dasharray="3 1.500"/></svg>
<svg class="a" style="left:236px;top:1162px;overflow:visible" width="18" height="18" viewBox="0 0 18 18"><path d="M1 5v-3.500h3.500M1 13v3.500h3.500M17 13v3.500h-3.500" fill="none" stroke="#1838b0" stroke-width="1.400"/><path d="M5 8 l3 -3 h7 v6 l-3 3.500 h-7z" fill="#e8eef8" stroke="#4a6490" stroke-width=".8"/><path d="M5 8h7v6.500M12 8l3 -3" fill="none" stroke="#4a6490" stroke-width=".8"/><path d="M12 2l5 -1.500" stroke="#888" stroke-width="1"/></svg>
<svg class="a" style="left:259px;top:1162px;overflow:visible" width="18" height="18" viewBox="0 0 18 18"><path d="M1 5v-3.500h3.500M1 13v3.500h3.500M17 13v3.500h-3.500" fill="none" stroke="#1838b0" stroke-width="1.400"/><path d="M5 5h5v12h-5z" fill="#8aa4c8" stroke="#4a6490" stroke-width=".6"/><path d="M10 5l3 2v10h-3z" fill="#b8c8e0" stroke="#4a6490" stroke-width=".6"/><rect x="8" y="0.5" width="9.5" height="7" fill="#f2f2f2" stroke="#555" stroke-width=".8"/><rect x="8.4" y="0.9" width="8.7" height="2" fill="#2a3ea8"/></svg>
<svg class="a" style="left:290px;top:1162px;overflow:visible" width="18" height="18" viewBox="0 0 18 18"><path d="M2 10h11M2 12.500h11M2 15h11" stroke="#777" stroke-width="1.500"/><path d="M4 8.500h7" stroke="#d8c020" stroke-width="1.500"/><path d="M12 13l4 3" stroke="#aaa" stroke-width="1.500"/><rect x="8" y="0.5" width="9.5" height="7" fill="#f2f2f2" stroke="#555" stroke-width=".8"/><rect x="8.4" y="0.9" width="8.7" height="2" fill="#2a3ea8"/><polygon points="4.50,0.50 5.27,2.65 7.33,1.67 6.35,3.73 8.50,4.50 6.35,5.27 7.33,7.33 5.27,6.35 4.50,8.50 3.73,6.35 1.67,7.33 2.65,5.27 0.50,4.50 2.65,3.73 1.67,1.67 3.73,2.65" fill="#f6ee10" stroke="#c9a400" stroke-width=".5"/><circle cx="5" cy="9" r="1" fill="#e01010"/></svg>
<svg class="a" style="left:314px;top:1162px;overflow:visible" width="18" height="18" viewBox="0 0 18 18"><path d="M3 9h12M3 11.500h12M3 14h12M3 16.500h12" stroke="#b89060" stroke-width="1.200"/><path d="M5 8v9M9 8v9M13 8v9" stroke="#d82020" stroke-width=".8" stroke-dasharray="1.500 1"/><rect x="8" y="0.5" width="9.5" height="7" fill="#f2f2f2" stroke="#555" stroke-width=".8"/><rect x="8.4" y="0.9" width="8.7" height="2" fill="#2a3ea8"/><polygon points="4.50,0.50 5.27,2.65 7.33,1.67 6.35,3.73 8.50,4.50 6.35,5.27 7.33,7.33 5.27,6.35 4.50,8.50 3.73,6.35 1.67,7.33 2.65,5.27 0.50,4.50 2.65,3.73 1.67,1.67 3.73,2.65" fill="#f6ee10" stroke="#c9a400" stroke-width=".5"/></svg>
<svg class="a" style="left:338px;top:1162px;overflow:visible" width="18" height="18" viewBox="0 0 18 18"><polygon points="5.00,0.30 5.80,2.56 7.97,1.53 6.94,3.70 9.20,4.50 6.94,5.30 7.97,7.47 5.80,6.44 5.00,8.70 4.20,6.44 2.03,7.47 3.06,5.30 0.80,4.50 3.06,3.70 2.03,1.53 4.20,2.56" fill="#f6ee10" stroke="#c9a400" stroke-width=".5"/><path d="M1 12v6M17 12v6M1 15h16" stroke="#111" stroke-width="1.200"/><text x="10" y="11.500" font-size="7.500" font-weight="bold" font-family="Liberation Sans,sans-serif" fill="#111" text-anchor="middle">x</text></svg>
<svg class="a" style="left:374px;top:1162px;overflow:visible" width="18" height="18" viewBox="0 0 18 18"><polygon points="5.00,0.30 5.80,2.56 7.97,1.53 6.94,3.70 9.20,4.50 6.94,5.30 7.97,7.47 5.80,6.44 5.00,8.70 4.20,6.44 2.03,7.47 3.06,5.30 0.80,4.50 3.06,3.70 2.03,1.53 4.20,2.56" fill="#f6ee10" stroke="#c9a400" stroke-width=".5"/><text x="12" y="11" font-size="7.500" font-weight="bold" font-family="Liberation Sans,sans-serif" fill="#111" text-anchor="middle">xx</text><path d="M6 12.500h11" stroke="#111" stroke-width="1.200"/><path d="M7 12.500l-5.500 4.500" stroke="#111" stroke-width="1.200"/><path d="M0.500 18l1 -4l3 3z" fill="#111"/></svg>
<svg class="a" style="left:398px;top:1162px;overflow:visible" width="18" height="18" viewBox="0 0 18 18"><rect x="8" y="0.5" width="9.5" height="7" fill="#f2f2f2" stroke="#555" stroke-width=".8"/><rect x="8.4" y="0.9" width="8.7" height="2" fill="#2a3ea8"/><path d="M8 3 l1.500 5 l5 .5 l-4 3 l2 5.500 l-4.500 -3.500 l-4.500 3.500 l2 -5.500 l-4 -3 l5 -.5z" fill="#8a8a98"/><polygon points="4.50,0.90 5.19,2.84 7.05,1.95 6.16,3.81 8.10,4.50 6.16,5.19 7.05,7.05 5.19,6.16 4.50,8.10 3.81,6.16 1.95,7.05 2.84,5.19 0.90,4.50 2.84,3.81 1.95,1.95 3.81,2.84" fill="#f6ee10" stroke="#c9a400" stroke-width=".5"/></svg>
<svg class="a" style="left:422px;top:1162px;overflow:visible" width="18" height="18" viewBox="0 0 18 18"><path d="M1.500 7h6v3a2 2 0 0 0 4 0v-3h5v10h-15z" fill="#f4f4f4" stroke="#444" stroke-width="1.200"/><rect x="8" y="0.5" width="9.5" height="7" fill="#f2f2f2" stroke="#555" stroke-width=".8"/><rect x="8.4" y="0.9" width="8.7" height="2" fill="#2a3ea8"/><polygon points="5.00,1.00 5.77,3.15 7.83,2.17 6.85,4.23 9.00,5.00 6.85,5.77 7.83,7.83 5.77,6.85 5.00,9.00 4.23,6.85 2.17,7.83 3.15,5.77 1.00,5.00 3.15,4.23 2.17,2.17 4.23,3.15" fill="#f6ee10" stroke="#c9a400" stroke-width=".5"/></svg>
<svg class="a" style="left:452px;top:1162px;overflow:visible" width="18" height="18" viewBox="0 0 18 18"><path d="M3 14 L11 4" stroke="#111" stroke-width="1.300"/><path d="M2 15.500l1 -4l3 2.500z M12 2.500l-1 4l-3 -2.500z" fill="#111"/><circle cx="5" cy="16.5" r="1.3" fill="#e01010"/><circle cx="14.5" cy="6.5" r="1.3" fill="#e01010"/></svg>
<svg class="a" style="left:489px;top:1162px;overflow:visible" width="18" height="18" viewBox="0 0 18 18"><text x="1" y="7.500" font-size="8.500" font-weight="bold" font-family="Liberation Sans,sans-serif" fill="#111">2</text><text x="11" y="17.500" font-size="8.500" font-weight="bold" font-family="Liberation Sans,sans-serif" fill="#111">6</text><rect x="1.500" y="11" width="3.500" height="6.500" fill="#3a6ab8"/><path d="M7 3.500 q6 -1 6.500 5" fill="none" stroke="#3a7ad0" stroke-width="1.600"/><path d="M10.500 8h6l-3 3.500z" fill="#3a7ad0"/></svg>
<svg class="a" style="left:531px;top:1162px;overflow:visible" width="18" height="18" viewBox="0 0 18 18"><path d="M3 2.500v13M15 2.500v13" stroke="#777" stroke-width="1"/><path d="M9 2.500v14" fill="none" stroke="#111" stroke-width="1.300"/><circle cx="9" cy="2.5" r="1.3" fill="#e01010"/><circle cx="9" cy="16.5" r="1.3" fill="#e01010"/></svg>
<svg class="a" style="left:555px;top:1162px;overflow:visible" width="18" height="18" viewBox="0 0 18 18"><path d="M2 2.500l4 13M16 2.500l-4 13" stroke="#777" stroke-width="1"/><path d="M9 2.500v14" fill="none" stroke="#111" stroke-width="1.300"/><circle cx="9" cy="2.5" r="1.3" fill="#e01010"/><circle cx="9" cy="16.5" r="1.3" fill="#e01010"/></svg>
<svg class="a" style="left:580px;top:1162px;overflow:visible" width="18" height="18" viewBox="0 0 18 18"><path d="M3 2l12 4" stroke="#555" stroke-width="1"/><path d="M2 16l8 -8" stroke="#555" stroke-width="1" stroke-dasharray="1.500 1"/><path d="M10 8l4 8" stroke="#555" stroke-width=".9"/><circle cx="2" cy="16.5" r="1.3" fill="#e01010"/><circle cx="13" cy="5.5" r="1.3" fill="#e01010"/></svg>
<svg class="a" style="left:616px;top:1162px;overflow:visible" width="18" height="18" viewBox="0 0 18 18"><path d="M3 12.500 L10 3.500 h5 M3 12.500v5" fill="none" stroke="#111" stroke-width="1.300"/><circle cx="3" cy="12.5" r="1.3" fill="#e01010"/><circle cx="10.5" cy="3.5" r="1.3" fill="#e01010"/></svg>
<svg class="a" style="left:640px;top:1162px;overflow:visible" width="18" height="18" viewBox="0 0 18 18"><path d="M3 12.500 Q4 4 12 3.500 h4 M3 12.500v5" fill="none" stroke="#111" stroke-width="1.300"/><circle cx="3" cy="12.5" r="1.3" fill="#e01010"/><circle cx="11.5" cy="3.5" r="1.3" fill="#e01010"/></svg>
<svg class="a" style="left:664px;top:1162px;overflow:visible" width="18" height="18" viewBox="0 0 18 18"><path d="M5 16L15 6M8 4l-2 8M12 3l-2 8" stroke="#555" stroke-width=".9"/><path d="M2 13L13 2" fill="none" stroke="#111" stroke-width="1.300"/><circle cx="2" cy="13" r="1.3" fill="#e01010"/><circle cx="13" cy="2" r="1.3" fill="#e01010"/></svg>
<svg class="a" style="left:688px;top:1162px;overflow:visible" width="18" height="18" viewBox="0 0 18 18"><path d="M6 6l7 7" stroke="#333" stroke-width="1"/><path d="M2.500 16.500L16 3" fill="none" stroke="#111" stroke-width="1.300"/><circle cx="2.5" cy="16.5" r="1.3" fill="#e01010"/><circle cx="16" cy="3" r="1.3" fill="#e01010"/></svg>
<svg class="a" style="left:712px;top:1162px;overflow:visible" width="18" height="18" viewBox="0 0 18 18"><path d="M8 5l6 6M6 9l4 -1" stroke="#333" stroke-width="1"/><path d="M2.500 16.500L16 3" fill="none" stroke="#111" stroke-width="1.300"/><circle cx="2.5" cy="16.5" r="1.3" fill="#e01010"/><circle cx="16" cy="3" r="1.3" fill="#e01010"/></svg>
<svg class="a" style="left:736px;top:1162px;overflow:visible" width="18" height="18" viewBox="0 0 18 18"><path d="M2 6 L7 3 L11 7 L16 3 M2 14 L7 11 L11 16 L16 12 M5 7v5" fill="none" stroke="#111" stroke-width="1.300"/><circle cx="2" cy="6" r="1.3" fill="#e01010"/><circle cx="7" cy="3" r="1.3" fill="#e01010"/><circle cx="11" cy="7" r="1.3" fill="#e01010"/><circle cx="16" cy="3" r="1.3" fill="#e01010"/><circle cx="2" cy="14" r="1.3" fill="#e01010"/><circle cx="7" cy="11" r="1.3" fill="#e01010"/><circle cx="11" cy="16" r="1.3" fill="#e01010"/><circle cx="16" cy="12" r="1.3" fill="#e01010"/></svg>
<svg class="a" style="left:760px;top:1162px;overflow:visible" width="18" height="18" viewBox="0 0 18 18"><path d="M2 5 L8 6 L10 2 L16 5 M2 14 L8 13 L11 16 L16 11 M8 6v7 M16 5v6" fill="none" stroke="#111" stroke-width="1.300"/><circle cx="2" cy="5" r="1.3" fill="#e01010"/><circle cx="8" cy="6" r="1.3" fill="#e01010"/><circle cx="10" cy="2" r="1.3" fill="#e01010"/><circle cx="16" cy="5" r="1.3" fill="#e01010"/><circle cx="2" cy="14" r="1.3" fill="#e01010"/><circle cx="8" cy="13" r="1.3" fill="#e01010"/><circle cx="11" cy="16" r="1.3" fill="#e01010"/><circle cx="16" cy="11" r="1.3" fill="#e01010"/></svg>
<svg class="a" style="left:784px;top:1162px;overflow:visible" width="18" height="18" viewBox="0 0 18 18"><path d="M2 16l9 -9" stroke="#555" stroke-width="1" stroke-dasharray="1.500 1"/><path d="M8 2l8 10" stroke="#555" stroke-width="1"/><circle cx="2" cy="16.5" r="1.3" fill="#e01010"/><circle cx="11" cy="7" r="1.3" fill="#e01010"/></svg>
<svg class="a" style="left:815px;top:1162px;overflow:visible" width="18" height="18" viewBox="0 0 18 18"><path d="M2 10 L9 3 L15 6 M2 10 L6 15" fill="none" stroke="#111" stroke-width="1.300"/><path d="M6 15L14 9" stroke="#9ab8e8" stroke-width="3"/><circle cx="6" cy="15.5" r="1.3" fill="#e01010"/><circle cx="14" cy="9" r="1.3" fill="#e01010"/><circle cx="15" cy="6" r="1.3" fill="#e01010"/><path d="M12 12.500h5M12 17.500h5M14.500 12.500v5" stroke="#111" stroke-width="1.100"/></svg>
<svg class="a" style="left:851px;top:1162px;overflow:visible" width="18" height="18" viewBox="0 0 18 18"><path d="M3 13L13 3M6 16L16 6" stroke="#9ab8e8" stroke-width="2.600"/><path d="M4 12l3 -5M8 15l3 -6M7 10l3 -5" stroke="#666" stroke-width=".8"/><circle cx="3" cy="13" r="1.3" fill="#e01010"/><circle cx="15.5" cy="3" r="1.3" fill="#e01010"/></svg>
<svg class="a" style="left:875px;top:1162px;overflow:visible" width="18" height="18" viewBox="0 0 18 18"><path d="M3 15.500L15 3.500" stroke="#9ab8e8" stroke-width="3.200"/><path d="M3 15.500L15 3.500" stroke="#333" stroke-width=".8"/><path d="M6 7l6 6" stroke="#111" stroke-width="1.100"/><circle cx="3" cy="15.5" r="1.3" fill="#e01010"/><circle cx="15" cy="3.5" r="1.3" fill="#e01010"/></svg>
<svg class="a" style="left:899px;top:1162px;overflow:visible" width="18" height="18" viewBox="0 0 18 18"><path d="M3 15.500L15 3.500" stroke="#9ab8e8" stroke-width="3.200"/><path d="M3 15.500L15 3.500" stroke="#333" stroke-width=".8"/><path d="M5 9l4 -4l5 5" stroke="#111" stroke-width="1.100" fill="none"/><circle cx="3" cy="15.5" r="1.3" fill="#e01010"/><circle cx="15" cy="3.5" r="1.3" fill="#e01010"/></svg>
<svg class="a" style="left:923px;top:1162px;overflow:visible" width="18" height="18" viewBox="0 0 18 18"><path d="M3 5 L9 6 L15 3 M3 13 L9 15 L15 11" stroke="#e89090" stroke-width="3"/><path d="M9 7v6" stroke="#111" stroke-width="1"/><circle cx="3" cy="5" r="1.3" fill="#e01010"/><circle cx="9" cy="6" r="1.3" fill="#e01010"/><circle cx="15" cy="3" r="1.3" fill="#e01010"/><circle cx="3" cy="13" r="1.3" fill="#e01010"/><circle cx="9" cy="15" r="1.3" fill="#e01010"/><circle cx="15" cy="11" r="1.3" fill="#e01010"/></svg>
<svg class="a" style="left:967px;top:1162px;overflow:visible" width="18" height="18" viewBox="0 0 18 18"><rect x="1.0" y="5.0" width="1.600" height="1.600" fill="#555"/><rect x="1.0" y="7.8" width="1.600" height="1.600" fill="#555"/><rect x="1.0" y="10.6" width="1.600" height="1.600" fill="#555"/><rect x="1.0" y="13.399999999999999" width="1.600" height="1.600" fill="#555"/><rect x="1.0" y="16.2" width="1.600" height="1.600" fill="#555"/><rect x="3.8" y="5.0" width="1.600" height="1.600" fill="#555"/><rect x="3.8" y="7.8" width="1.600" height="1.600" fill="#555"/><rect x="3.8" y="10.6" width="1.600" height="1.600" fill="#555"/><rect x="3.8" y="13.399999999999999" width="1.600" height="1.600" fill="#555"/><rect x="3.8" y="16.2" width="1.600" height="1.600" fill="#555"/><rect x="6.6" y="5.0" width="1.600" height="1.600" fill="#555"/><rect x="6.6" y="7.8" width="1.600" height="1.600" fill="#555"/><rect x="6.6" y="10.6" width="1.600" height="1.600" fill="#555"/><rect x="6.6" y="13.399999999999999" width="1.600" height="1.600" fill="#555"/><rect x="6.6" y="16.2" width="1.600" height="1.600" fill="#555"/><rect x="9.399999999999999" y="5.0" width="1.600" height="1.600" fill="#555"/><rect x="9.399999999999999" y="7.8" width="1.600" height="1.600" fill="#555"/><rect x="9.399999999999999" y="10.6" width="1.600" height="1.600" fill="#555"/><rect x="9.399999999999999" y="13.399999999999999" width="1.600" height="1.600" fill="#555"/><rect x="9.399999999999999" y="16.2" width="1.600" height="1.600" fill="#555"/><rect x="12.2" y="5.0" width="1.600" height="1.600" fill="#555"/><rect x="12.2" y="7.8" width="1.600" height="1.600" fill="#555"/><rect x="12.2" y="10.6" width="1.600" height="1.600" fill="#555"/><rect x="12.2" y="13.399999999999999" width="1.600" height="1.600" fill="#555"/><rect x="12.2" y="16.2" width="1.600" height="1.600" fill="#555"/><ellipse cx="12" cy="4" rx="4.6" ry="3" fill="#e4e6f8" stroke="#26266e" stroke-width="1"/><circle cx="12" cy="4" r="2.1" fill="#2a2a98"/><circle cx="12" cy="4" r=".8" fill="#111"/></svg>
<svg class="a" style="left:998px;top:1162px;overflow:visible" width="18" height="18" viewBox="0 0 18 18"><rect x="3.0" y="7.0" width="1.600" height="1.600" fill="#555"/><rect x="3.0" y="9.8" width="1.600" height="1.600" fill="#555"/><rect x="3.0" y="12.6" width="1.600" height="1.600" fill="#555"/><rect x="3.0" y="15.399999999999999" width="1.600" height="1.600" fill="#555"/><rect x="5.8" y="7.0" width="1.600" height="1.600" fill="#555"/><rect x="5.8" y="9.8" width="1.600" height="1.600" fill="#555"/><rect x="5.8" y="12.6" width="1.600" height="1.600" fill="#555"/><rect x="5.8" y="15.399999999999999" width="1.600" height="1.600" fill="#555"/><rect x="8.6" y="7.0" width="1.600" height="1.600" fill="#555"/><rect x="8.6" y="9.8" width="1.600" height="1.600" fill="#555"/><rect x="8.6" y="12.6" width="1.600" height="1.600" fill="#555"/><rect x="8.6" y="15.399999999999999" width="1.600" height="1.600" fill="#555"/><rect x="11.399999999999999" y="7.0" width="1.600" height="1.600" fill="#555"/><rect x="11.399999999999999" y="9.8" width="1.600" height="1.600" fill="#555"/><rect x="11.399999999999999" y="12.6" width="1.600" height="1.600" fill="#555"/><rect x="11.399999999999999" y="15.399999999999999" width="1.600" height="1.600" fill="#555"/><rect x="14.2" y="7.0" width="1.600" height="1.600" fill="#555"/><rect x="14.2" y="9.8" width="1.600" height="1.600" fill="#555"/><rect x="14.2" y="12.6" width="1.600" height="1.600" fill="#555"/><rect x="14.2" y="15.399999999999999" width="1.600" height="1.600" fill="#555"/><rect x="8" y="1" width="9.5" height="6.5" fill="#f2f2f2" stroke="#555" stroke-width=".8"/><rect x="8.4" y="1.4" width="8.7" height="2" fill="#2a3ea8"/><polygon points="5.00,1.20 5.73,3.24 7.69,2.31 6.76,4.27 8.80,5.00 6.76,5.73 7.69,7.69 5.73,6.76 5.00,8.80 4.27,6.76 2.31,7.69 3.24,5.73 1.20,5.00 3.24,4.27 2.31,2.31 4.27,3.24" fill="#f6ee10" stroke="#c9a400" stroke-width=".5"/></svg>
<svg class="a" style="left:1022px;top:1162px;overflow:visible" width="18" height="18" viewBox="0 0 18 18"><rect x="1.0" y="5.0" width="1.600" height="1.600" fill="#555"/><rect x="1.0" y="7.8" width="1.600" height="1.600" fill="#555"/><rect x="1.0" y="10.6" width="1.600" height="1.600" fill="#555"/><rect x="1.0" y="13.399999999999999" width="1.600" height="1.600" fill="#555"/><rect x="1.0" y="16.2" width="1.600" height="1.600" fill="#555"/><rect x="3.8" y="5.0" width="1.600" height="1.600" fill="#555"/><rect x="3.8" y="7.8" width="1.600" height="1.600" fill="#555"/><rect x="3.8" y="10.6" width="1.600" height="1.600" fill="#555"/><rect x="3.8" y="13.399999999999999" width="1.600" height="1.600" fill="#555"/><rect x="3.8" y="16.2" width="1.600" height="1.600" fill="#555"/><rect x="6.6" y="5.0" width="1.600" height="1.600" fill="#555"/><rect x="6.6" y="7.8" width="1.600" height="1.600" fill="#555"/><rect x="6.6" y="10.6" width="1.600" height="1.600" fill="#555"/><rect x="6.6" y="13.399999999999999" width="1.600" height="1.600" fill="#555"/><rect x="6.6" y="16.2" width="1.600" height="1.600" fill="#555"/><rect x="9.399999999999999" y="5.0" width="1.600" height="1.600" fill="#555"/><rect x="9.399999999999999" y="7.8" width="1.600" height="1.600" fill="#555"/><rect x="9.399999999999999" y="10.6" width="1.600" height="1.600" fill="#555"/><rect x="9.399999999999999" y="13.399999999999999" width="1.600" height="1.600" fill="#555"/><rect x="9.399999999999999" y="16.2" width="1.600" height="1.600" fill="#555"/><rect x="12.2" y="5.0" width="1.600" height="1.600" fill="#555"/><rect x="12.2" y="7.8" width="1.600" height="1.600" fill="#555"/><rect x="12.2" y="10.6" width="1.600" height="1.600" fill="#555"/><rect x="12.2" y="13.399999999999999" width="1.600" height="1.600" fill="#555"/><rect x="12.2" y="16.2" width="1.600" height="1.600" fill="#555"/><ellipse cx="12" cy="4" rx="4.6" ry="3" fill="#e4e6f8" stroke="#26266e" stroke-width="1"/><circle cx="12" cy="4" r="2.1" fill="#2a2a98"/><circle cx="12" cy="4" r=".8" fill="#111"/></svg>
<svg class="a" style="left:1052px;top:1162px;overflow:visible" width="18" height="18" viewBox="0 0 18 18"><rect x="2.500" y="3.500" width="13" height="13" fill="none" stroke="#333" stroke-width="1" stroke-dasharray="1 1.500"/><polygon points="5.50,1.10 6.34,3.47 8.61,2.39 7.53,4.66 9.90,5.50 7.53,6.34 8.61,8.61 6.34,7.53 5.50,9.90 4.66,7.53 2.39,8.61 3.47,6.34 1.10,5.50 3.47,4.66 2.39,2.39 4.66,3.47" fill="#f6ee10" stroke="#c9a400" stroke-width=".5"/></svg>
<svg class="a" style="left:1078px;top:1162px;overflow:visible" width="18" height="18" viewBox="0 0 18 18"><rect x="2.500" y="4.500" width="12" height="12" fill="none" stroke="#333" stroke-width="1.100" stroke-dasharray="1 1.500"/><ellipse cx="12" cy="4.5" rx="4.6" ry="3" fill="#e4e6f8" stroke="#26266e" stroke-width="1"/><circle cx="12" cy="4.5" r="2.1" fill="#2a2a98"/><circle cx="12" cy="4.5" r=".8" fill="#111"/></svg>
<svg class="a" style="left:1114px;top:1162px;overflow:visible" width="18" height="18" viewBox="0 0 18 18"><path d="M3.500 2v13.500h13.500M3.500 9.500h7v6" fill="none" stroke="#555" stroke-width="1.100"/></svg>
<svg class="a" style="left:1146px;top:1162px;overflow:visible" width="18" height="18" viewBox="0 0 18 18"><rect x="1.0" y="4.0" width="1.600" height="1.600" fill="#555"/><rect x="1.0" y="6.8" width="1.600" height="1.600" fill="#555"/><rect x="1.0" y="9.6" width="1.600" height="1.600" fill="#555"/><rect x="1.0" y="12.399999999999999" width="1.600" height="1.600" fill="#555"/><rect x="1.0" y="15.2" width="1.600" height="1.600" fill="#555"/><rect x="3.8" y="4.0" width="1.600" height="1.600" fill="#555"/><rect x="3.8" y="6.8" width="1.600" height="1.600" fill="#555"/><rect x="3.8" y="9.6" width="1.600" height="1.600" fill="#555"/><rect x="3.8" y="12.399999999999999" width="1.600" height="1.600" fill="#555"/><rect x="3.8" y="15.2" width="1.600" height="1.600" fill="#555"/><rect x="6.6" y="4.0" width="1.600" height="1.600" fill="#555"/><rect x="6.6" y="6.8" width="1.600" height="1.600" fill="#555"/><rect x="6.6" y="9.6" width="1.600" height="1.600" fill="#555"/><rect x="6.6" y="12.399999999999999" width="1.600" height="1.600" fill="#555"/><rect x="6.6" y="15.2" width="1.600" height="1.600" fill="#555"/><rect x="9.399999999999999" y="4.0" width="1.600" height="1.600" fill="#555"/><rect x="9.399999999999999" y="6.8" width="1.600" height="1.600" fill="#555"/><rect x="9.399999999999999" y="9.6" width="1.600" height="1.600" fill="#555"/><rect x="9.399999999999999" y="12.399999999999999" width="1.600" height="1.600" fill="#555"/><rect x="9.399999999999999" y="15.2" width="1.600" height="1.600" fill="#555"/><rect x="12.2" y="4.0" width="1.600" height="1.600" fill="#555"/><rect x="12.2" y="6.8" width="1.600" height="1.600" fill="#555"/><rect x="12.2" y="9.6" width="1.600" height="1.600" fill="#555"/><rect x="12.2" y="12.399999999999999" width="1.600" height="1.600" fill="#555"/><rect x="12.2" y="15.2" width="1.600" height="1.600" fill="#555"/><path d="M8.5 9 v-3.500 a4.500 4.500 0 0 1 9 0 v3.500 h-2.800 v-3.500 a1.700 1.700 0 0 0 -3.400 0 v3.500z" fill="#a0a0a8"/><rect x="8.5" y="8" width="2.800" height="2.500" fill="#e02010"/><rect x="14.7" y="8" width="2.800" height="2.500" fill="#1040d0"/><path d="M7 7l3 3M10 7l-3 3" stroke="#e02010" stroke-width="1"/></svg>
<svg class="a" style="left:1169px;top:1162px;overflow:visible" width="18" height="18" viewBox="0 0 18 18"><path d="M3 14 v-5 a6 6 0 0 1 12 0 v5 h-3.500 v-5 a2.500 2.500 0 0 0 -5 0 v5z" fill="#a0a0a8"/><rect x="3" y="13" width="3.500" height="2.500" fill="#e02010"/><rect x="11.500" y="13" width="3.500" height="2.500" fill="#1040d0"/></svg>
<svg class="a" style="left:1193px;top:1162px;overflow:visible" width="18" height="18" viewBox="0 0 18 18"><rect x="4" y="4.500" width="10" height="10" fill="none" stroke="#333" stroke-width="1.100"/></svg>
<svg class="a" style="left:1217px;top:1162px;overflow:visible" width="18" height="18" viewBox="0 0 18 18"><circle cx="9" cy="9.500" r="6" fill="none" stroke="#444" stroke-width="1.100"/><path d="M4.500 5l9 9M13.500 5l-9 9" stroke="#444" stroke-width="1.100"/></svg>
<svg class="a" style="left:1240px;top:1162px;overflow:visible" width="18" height="18" viewBox="0 0 18 18"><rect x="4" y="4.500" width="10" height="10" fill="none" stroke="#444" stroke-width="1.200"/><path d="M4 4.500l10 10M14 4.500l-10 10" stroke="#444" stroke-width="1.100"/></svg>
<svg class="a" style="left:1266px;top:1162px;overflow:visible" width="18" height="18" viewBox="0 0 18 18"><path d="M4.500 3v12h10M4.500 9h6.500v6" fill="none" stroke="#2a4a80" stroke-width="1.300"/></svg>
<svg class="a" style="left:1289px;top:1162px;overflow:visible" width="18" height="18" viewBox="0 0 18 18"><path d="M3 15L15 4" stroke="#666" stroke-width="1.100"/><path d="M8 8l3 3" stroke="#666" stroke-width="1"/></svg>
<svg class="a" style="left:1313px;top:1162px;overflow:visible" width="18" height="18" viewBox="0 0 18 18"><path d="M3 12L12 3M7 16L16 7" stroke="#666" stroke-width="1.200"/></svg>
<svg class="a" style="left:1337px;top:1162px;overflow:visible" width="18" height="18" viewBox="0 0 18 18"><path d="M3 3.500h12" stroke="#555" stroke-width="1.200"/><circle cx="9" cy="10.500" r="4.500" fill="none" stroke="#555" stroke-width="1.200"/></svg>
<svg class="a" style="left:1361px;top:1162px;overflow:visible" width="18" height="18" viewBox="0 0 18 18"><circle cx="9" cy="9.500" r="6" fill="none" stroke="#555" stroke-width="1.100"/><path d="M9 4.500l5 5l-5 5l-5 -5z" fill="none" stroke="#777" stroke-width=".9"/></svg>
<svg class="a" style="left:1385px;top:1162px;overflow:visible" width="18" height="18" viewBox="0 0 18 18"><path d="M3 15L14 4" stroke="#555" stroke-width="1"/><path d="M6 7l6 6M8 5l6 6M4 9l6 6" stroke="#666" stroke-width=".8"/></svg>
<svg class="a" style="left:1408px;top:1162px;overflow:visible" width="18" height="18" viewBox="0 0 18 18"><path d="M3 15L14 4" stroke="#555" stroke-width="1"/><path d="M5 5l9 7M3 9h8" stroke="#666" stroke-width=".8"/><path d="M9 6l3 0l0 3" stroke="#333" stroke-width="1" fill="none"/></svg>
<svg class="a" style="left:1432px;top:1162px;overflow:visible" width="18" height="18" viewBox="0 0 18 18"><path d="M3 15L14 4" stroke="#555" stroke-width="1" stroke-dasharray="2 1"/><path d="M5 5l9 7" stroke="#666" stroke-width=".8"/><path d="M3 7l4 0M9 6l3 0l0 3" stroke="#333" stroke-width="1" fill="none"/></svg>
<svg class="a" style="left:1456px;top:1162px;overflow:visible" width="18" height="18" viewBox="0 0 18 18"><rect x="10" y="2" width="1.300" height="1.300" fill="#555"/><rect x="13" y="4" width="1.300" height="1.300" fill="#555"/><rect x="6" y="5" width="1.300" height="1.300" fill="#555"/><rect x="9" y="7" width="1.300" height="1.300" fill="#555"/><rect x="14" y="8" width="1.300" height="1.300" fill="#555"/><rect x="4" y="9" width="1.300" height="1.300" fill="#555"/><rect x="11" y="10" width="1.300" height="1.300" fill="#555"/><rect x="7" y="12" width="1.300" height="1.300" fill="#555"/><rect x="14" y="13" width="1.300" height="1.300" fill="#555"/><rect x="4" y="14" width="1.300" height="1.300" fill="#555"/><rect x="10" y="15" width="1.300" height="1.300" fill="#555"/></svg>
<svg class="a" style="left:1482px;top:1162px;overflow:visible" width="18" height="18" viewBox="0 0 18 18"><rect x="2.5" y="3.0" width="1.600" height="1.600" fill="#444"/><rect x="2.5" y="5.3" width="1.600" height="1.600" fill="#444"/><rect x="2.5" y="7.6" width="1.600" height="1.600" fill="#444"/><rect x="2.5" y="9.899999999999999" width="1.600" height="1.600" fill="#444"/><rect x="2.5" y="12.2" width="1.600" height="1.600" fill="#444"/><rect x="2.5" y="14.5" width="1.600" height="1.600" fill="#444"/><rect x="4.8" y="3.0" width="1.600" height="1.600" fill="#444"/><rect x="4.8" y="5.3" width="1.600" height="1.600" fill="#444"/><rect x="4.8" y="7.6" width="1.600" height="1.600" fill="#444"/><rect x="4.8" y="9.899999999999999" width="1.600" height="1.600" fill="#444"/><rect x="4.8" y="12.2" width="1.600" height="1.600" fill="#444"/><rect x="4.8" y="14.5" width="1.600" height="1.600" fill="#444"/><rect x="7.1" y="3.0" width="1.600" height="1.600" fill="#444"/><rect x="7.1" y="5.3" width="1.600" height="1.600" fill="#444"/><rect x="7.1" y="7.6" width="1.600" height="1.600" fill="#444"/><rect x="7.1" y="9.899999999999999" width="1.600" height="1.600" fill="#444"/><rect x="7.1" y="12.2" width="1.600" height="1.600" fill="#444"/><rect x="7.1" y="14.5" width="1.600" height="1.600" fill="#444"/><rect x="9.399999999999999" y="3.0" width="1.600" height="1.600" fill="#444"/><rect x="9.399999999999999" y="5.3" width="1.600" height="1.600" fill="#444"/><rect x="9.399999999999999" y="7.6" width="1.600" height="1.600" fill="#444"/><rect x="9.399999999999999" y="9.899999999999999" width="1.600" height="1.600" fill="#444"/><rect x="9.399999999999999" y="12.2" width="1.600" height="1.600" fill="#444"/><rect x="9.399999999999999" y="14.5" width="1.600" height="1.600" fill="#444"/><rect x="11.7" y="3.0" width="1.600" height="1.600" fill="#444"/><rect x="11.7" y="5.3" width="1.600" height="1.600" fill="#444"/><rect x="11.7" y="7.6" width="1.600" height="1.600" fill="#444"/><rect x="11.7" y="9.899999999999999" width="1.600" height="1.600" fill="#444"/><rect x="11.7" y="12.2" width="1.600" height="1.600" fill="#444"/><rect x="11.7" y="14.5" width="1.600" height="1.600" fill="#444"/><rect x="14.0" y="3.0" width="1.600" height="1.600" fill="#444"/><rect x="14.0" y="5.3" width="1.600" height="1.600" fill="#444"/><rect x="14.0" y="7.6" width="1.600" height="1.600" fill="#444"/><rect x="14.0" y="9.899999999999999" width="1.600" height="1.600" fill="#444"/><rect x="14.0" y="12.2" width="1.600" height="1.600" fill="#444"/><rect x="14.0" y="14.5" width="1.600" height="1.600" fill="#444"/></svg>
<svg class="a" style="left:1506px;top:1162px;overflow:visible" width="18" height="18" viewBox="0 0 18 18"><rect x="3" y="3.500" width="12" height="12" fill="none" stroke="#333" stroke-width="1.300" stroke-dasharray="1.200 1.300"/></svg>
<svg class="a" style="left:1530px;top:1162px;overflow:visible" width="18" height="18" viewBox="0 0 18 18"><path d="M3 14l3 -2.500h10l-3 2.500z M3 11.500l3 -2.500h10l-3 2.500z M3 9l3 -2.500h10l-3 2.500z" fill="#e8e8e8" stroke="#555" stroke-width=".9"/></svg>
<svg class="a" style="left:1554px;top:1162px;overflow:visible" width="18" height="18" viewBox="0 0 18 18"><rect x="3" y="8" width="12" height="3.500" fill="#333"/><path d="M1.500 6.500l2.500 2M1.500 13l2.500 -2M16.500 6.500l-2.500 2M16.500 13l-2.500 -2" stroke="#e02010" stroke-width="1"/></svg>
<svg class="a" style="left:1578px;top:1162px;overflow:visible" width="18" height="18" viewBox="0 0 18 18"><path d="M9 2v8" stroke="#444" stroke-width="1.100"/><path d="M6.500 7.500l2.500 3l2.500 -3" fill="none" stroke="#444" stroke-width="1"/><rect x="6.500" y="11.500" width="5" height="5" fill="none" stroke="#444" stroke-width="1.100"/></svg>
<svg class="a" style="left:360px;top:1169px" width="8" height="5"><path d="M0 0h8l-4 4.5z" fill="#111"/></svg>
<svg class="a" style="left:476px;top:1169px" width="8" height="5"><path d="M0 0h8l-4 4.5z" fill="#111"/></svg>
<svg class="a" style="left:511px;top:1169px" width="8" height="5"><path d="M0 0h8l-4 4.5z" fill="#111"/></svg>
<svg class="a" style="left:603px;top:1169px" width="8" height="5"><path d="M0 0h8l-4 4.5z" fill="#111"/></svg>
<svg class="a" style="left:837px;top:1169px" width="8" height="5"><path d="M0 0h8l-4 4.5z" fill="#111"/></svg>
<div class="sep" style="left:157px;top:1162px;height:18px;background:#a6a6a6"></div>
<div class="sep" style="left:283px;top:1162px;height:18px;background:#a6a6a6"></div>
<div class="sep" style="left:447px;top:1162px;height:18px;background:#a6a6a6"></div>
<div class="sep" style="left:526px;top:1162px;height:18px;background:#a6a6a6"></div>
<div class="sep" style="left:808px;top:1162px;height:18px;background:#a6a6a6"></div>
</body></html>
